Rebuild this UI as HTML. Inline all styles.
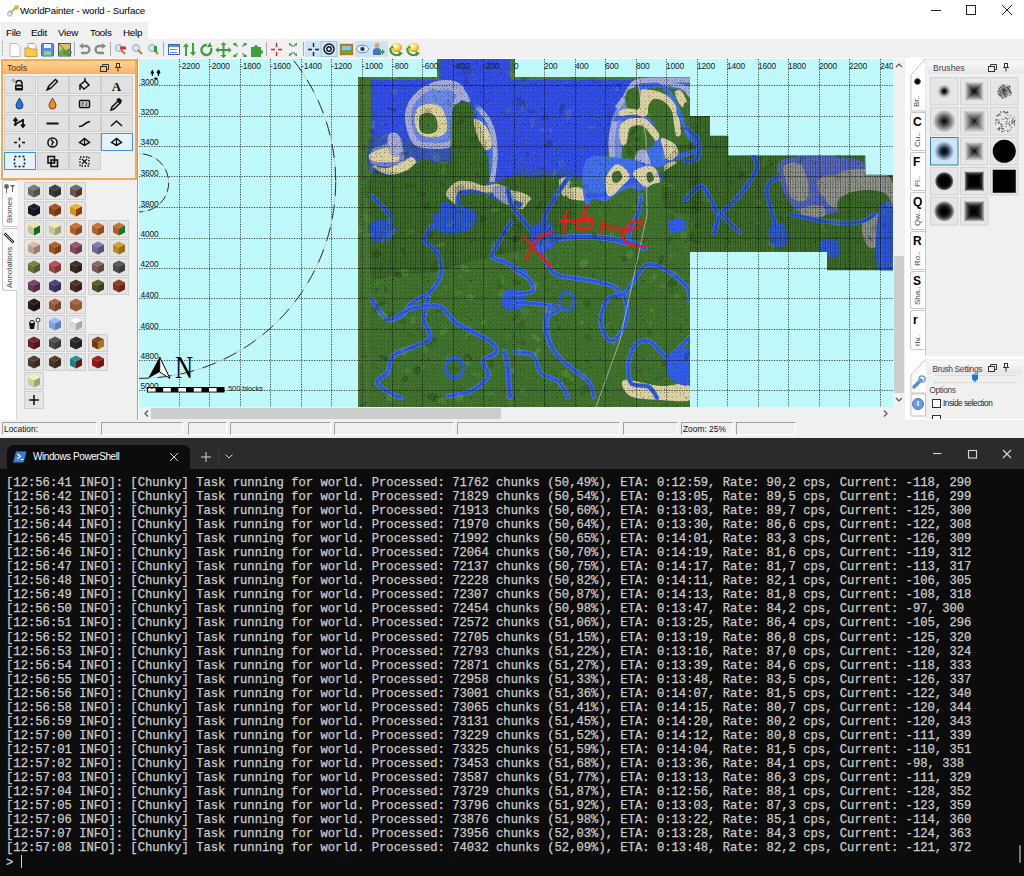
<!DOCTYPE html>
<html><head><meta charset="utf-8"><style>
*{margin:0;padding:0;box-sizing:border-box}
html,body{width:1024px;height:876px;overflow:hidden;background:#fff}
body{position:relative;font-family:"Liberation Sans",sans-serif;color:#000}
.a{position:absolute}
#tt{font-family:"Liberation Mono",monospace;font-size:12.2px;line-height:14.04px;color:#cccccc;white-space:pre;-webkit-text-stroke:0.25px #cccccc}
.ui{font-size:9px}
.rl{font-size:8.4px;color:#1a1a1a;white-space:nowrap;line-height:9px;letter-spacing:-0.15px}

</style></head><body>
<!-- title bar -->
<svg class="a" style="left:3px;top:2px" width="16" height="16" viewBox="0 0 16 16">
<ellipse cx="7" cy="11.5" rx="2.6" ry="3.2" transform="rotate(40 7 11.5)" fill="#b8b8b8"/>
<ellipse cx="6.5" cy="12" rx="1.2" ry="1.6" transform="rotate(40 6.5 12)" fill="#f4f4f4"/>
<line x1="9" y1="9" x2="13" y2="5.5" stroke="#b89a28" stroke-width="1.6"/>
<circle cx="13.5" cy="5.5" r="2.3" fill="#c8a830"/>
<circle cx="13.3" cy="5.7" r="0.9" fill="#e8d070"/>
</svg>
<div class="a" style="left:20px;top:5px;font-size:9.7px;white-space:nowrap;color:#000;letter-spacing:-0.15px">WorldPainter - world - Surface</div>
<svg class="a" style="left:920px;top:0" width="104" height="22" viewBox="0 0 104 22">
<line x1="11" y1="10.5" x2="21" y2="10.5" stroke="#222" stroke-width="1"/>
<rect x="46.5" y="5.5" width="9" height="9" fill="none" stroke="#222" stroke-width="1"/>
<line x1="82" y1="5" x2="92" y2="15" stroke="#222" stroke-width="1"/>
<line x1="92" y1="5" x2="82" y2="15" stroke="#222" stroke-width="1"/>
</svg>
<!-- menu bar -->
<div class="a" style="left:1px;top:22px;width:147px;height:17px;background:#f0f0f0"></div>
<div class="a ui" style="top:26.5px;left:6px;font-size:9.8px;letter-spacing:-0.25px">File</div>
<div class="a ui" style="top:26.5px;left:31px;font-size:9.8px;letter-spacing:-0.25px">Edit</div>
<div class="a ui" style="top:26.5px;left:58px;font-size:9.8px;letter-spacing:-0.25px">View</div>
<div class="a ui" style="top:26.5px;left:90px;font-size:9.8px;letter-spacing:-0.25px">Tools</div>
<div class="a ui" style="top:26.5px;left:123px;font-size:9.8px;letter-spacing:-0.25px">Help</div>
<!-- toolbar -->
<div class="a" style="left:0;top:39px;width:1024px;height:19px;background:#f0f0f0"></div>
<div class="a" style="left:2px;top:41px;width:1px;height:15px;border-left:1px dotted #999"></div>
<svg class="a" style="left:0;top:39px" width="430" height="19" viewBox="0 0 430 19">
<!-- new -->
<path d="M10 4.5h7l3 3v10h-10z" fill="#fff" stroke="#bbb"/>
<!-- open -->
<path d="M28 4.5h6l2 2v5h-8z" fill="#fff" stroke="#aaa"/>
<path d="M25 9h5l1 1h6v7.5h-12z" fill="#f8c850" stroke="#d09a30"/>
<!-- save -->
<rect x="41.5" y="4.5" width="12" height="12.5" rx="1" fill="#5a8ed8" stroke="#3a68b0"/>
<rect x="44" y="5" width="7" height="4" fill="#e8f0ff"/>
<rect x="44" y="12" width="7" height="4.5" fill="#8fd080"/>
<!-- export -->
<rect x="58.5" y="4.5" width="12" height="12.5" fill="#d8c070" stroke="#556"/>
<path d="M59 5l6 6" stroke="#e04040"/>
<path d="M59 13l4-4 3 3 4-3v8h-11z" fill="#60b050"/>
<path d="M64 12h4v-2l4 3.5-4 3.5v-2h-4z" fill="#5aa040" stroke="#3a7a28" stroke-width="0.6"/>
<line x1="74.5" y1="3" x2="74.5" y2="17" stroke="#aaa"/>
<!-- undo/redo -->
<path d="M82 7h4a3.5 3.5 0 0 1 0 7h-5" fill="none" stroke="#8a8a8a" stroke-width="2.4"/>
<path d="M79 7l4-3v6z" fill="#8a8a8a"/>
<path d="M103 7h-4a3.5 3.5 0 0 0 0 7h5" fill="none" stroke="#8a8a8a" stroke-width="2.4"/>
<path d="M106 7l-4-3v6z" fill="#8a8a8a"/>
<line x1="110.5" y1="3" x2="110.5" y2="17" stroke="#aaa"/>
<!-- zoom -->
<circle cx="119" cy="9" r="3.6" fill="#d0e4f8" stroke="#8ab0d8"/><path d="M121 11l4 4" stroke="#b08040" stroke-width="2"/><rect x="120" y="7.5" width="6" height="3" fill="#e03030"/>
<circle cx="136" cy="9" r="3.6" fill="#d0e4f8" stroke="#8ab0d8"/><path d="M138 11l4 4" stroke="#b08040" stroke-width="2"/>
<circle cx="152" cy="9" r="3.6" fill="#d0e4f8" stroke="#8ab0d8"/><path d="M154 11l4 4" stroke="#b08040" stroke-width="2"/><rect x="154" y="7" width="3" height="6" fill="#30a030"/>
<line x1="163.5" y1="3" x2="163.5" y2="17" stroke="#aaa"/>
<!-- dims -->
<rect x="168.5" y="5.5" width="11" height="10" fill="#fff" stroke="#3a68b0"/><rect x="169" y="6" width="10" height="2" fill="#5a8ed8"/><path d="M170 10.5h7M170 13.5h7" stroke="#5a8ed8"/>
<!-- arrows updown -->
<path d="M186 4l3 4h-2v9h-2v-9h-2z M193 17l3-4h-2v-9h-2v9h-2z" fill="#40a040"/>
<!-- rotate -->
<path d="M207 6a5 5 0 1 0 4 3" fill="none" stroke="#40a040" stroke-width="2.4"/><path d="M210 3l2 5-5 0z" fill="#40a040"/>
<!-- move -->
<path d="M223.5 3l3 3h-2v4h4v-2l3 3-3 3v-2h-4v4h2l-3 3-3-3h2v-4h-4v2l-3-3 3-3v2h4v-4h-2z" fill="#40a040"/>
<!-- scale -->
<path d="M233 4h4l-1 1 2 2-1 1-2-2-1 1zM247 4h-4l1 1-2 2 1 1 2-2 1 1zM233 18h4l-1-1 2-2-1-1-2 2-1-1zM247 18h-4l1-1-2-2 1-1 2 2 1-1z" fill="#40a040"/>
<!-- puzzle -->
<path d="M251 8h3a2 2 0 1 1 4 0h3v3a2 2 0 1 1 0 4v3h-10z" fill="#40a040"/>
<line x1="266.5" y1="3" x2="266.5" y2="17" stroke="#aaa"/>
<!-- crosshair red -->
<path d="M276.5 4v4M276.5 13v4M271 10.5h4M278 10.5h4" stroke="#e02020" stroke-width="1.4"/>
<!-- inward arrows -->
<path d="M287 4h3l1 1 2 2-1 1-2-2-1 1v-3zM299 4h-3l-1 1-2 2 1 1 2-2 1 1v-3zM287 17h3l1-1 2-2-1-1-2 2-1-1v3zM299 17h-3l-1-1-2-2 1-1 2 2 1-1v3z" fill="#40a040"/>
<line x1="303.5" y1="3" x2="303.5" y2="17" stroke="#aaa"/>
<!-- toggled group 1 -->
<rect x="305" y="2" width="33" height="16" fill="#cce4f7" />
<path d="M313.5 4v4M313.5 13v4M308 10.5h4M315 10.5h4" stroke="#222" stroke-width="1.4"/>
<rect x="321" y="2.5" width="16" height="15" fill="#cce4f7" stroke="#9cc8ee"/>
<circle cx="329" cy="10" r="5" fill="none" stroke="#111" stroke-width="1.4"/><circle cx="329" cy="10" r="2.2" fill="none" stroke="#111" stroke-width="1.4"/>
<!-- picture -->
<rect x="340.5" y="5.5" width="12" height="10" fill="#7aa040" stroke="#b07820" stroke-width="1.4"/><rect x="342" y="7" width="9" height="4" fill="#80c8f0"/>
<!-- toggled group 2 -->
<rect x="355" y="2" width="33" height="16" fill="#cce4f7"/>
<ellipse cx="362.5" cy="10" rx="6" ry="3.8" fill="#fff" stroke="#6a8ab0"/><circle cx="362.5" cy="10" r="2.4" fill="#3a6ab0"/><circle cx="362.5" cy="10" r="1" fill="#111"/>
<circle cx="377" cy="6.5" r="2.5" fill="#e0a060"/><path d="M373 16v-4a4 3 0 0 1 8 0v4z" fill="#4a70c0"/><path d="M379 12h3v-2l3 3-3 3v-2h-3z" fill="#40a040"/>
<!-- bubbles -->
<defs><radialGradient id="yb395.5" cx="0.4" cy="0.35" r="0.6"><stop offset="0" stop-color="#fffbe0"/><stop offset="0.6" stop-color="#f8d850"/><stop offset="1" stop-color="#e0a020"/></radialGradient></defs><ellipse cx="396.5" cy="8.5" rx="5.5" ry="4.6" fill="url(#yb395.5)"/><path d="M390.5 9 A6 6 0 0 0 400.5 14.5" fill="none" stroke="#3a9a30" stroke-width="2.2"/><path d="M398.5 12 L403.0 14 L399.0 17.5 Z" fill="#3a9a30"/><path d="M390.0 8.5 L392.5 6.5 L394.0 9.5 Z" fill="#3a9a30"/>
<defs><radialGradient id="yb412.5" cx="0.4" cy="0.35" r="0.6"><stop offset="0" stop-color="#fffbe0"/><stop offset="0.6" stop-color="#f8d850"/><stop offset="1" stop-color="#e0a020"/></radialGradient></defs><ellipse cx="413.5" cy="8.5" rx="5.5" ry="4.6" fill="url(#yb412.5)"/><path d="M407.5 9 A6 6 0 0 0 417.5 14.5" fill="none" stroke="#3a9a30" stroke-width="2.2"/><path d="M415.5 12 L420.0 14 L416.0 17.5 Z" fill="#3a9a30"/><path d="M407.0 8.5 L409.5 6.5 L411.0 9.5 Z" fill="#3a9a30"/>
</svg>

<div class="a" style="left:16px;top:180px;width:121px;height:240px;background:#f0f0f0;border-left:1px solid #d8d8d8"></div>
<svg class="a" style="left:0;top:0" width="140" height="420" viewBox="0 0 140 420">
<rect x="24.5" y="182.5" width="19" height="17" fill="#e4e4e4" stroke="#cfcfcf"/>
<polygon points="28,187.5 34,184.5 40,187.5 34,190.5" fill="#7b7b74"/><polygon points="28,187.5 34,190.5 34,197.5 28,194.5" fill="#686862"/><polygon points="34,190.5 40,187.5 40,194.5 34,197.5" fill="#52524e"/>
<rect x="45.5" y="182.5" width="19" height="17" fill="#e4e4e4" stroke="#cfcfcf"/>
<polygon points="49,187.5 55,184.5 61,187.5 55,190.5" fill="#434345"/><polygon points="49,187.5 55,190.5 55,197.5 49,194.5" fill="#39393a"/><polygon points="55,190.5 61,187.5 61,194.5 55,197.5" fill="#2d2d2e"/>
<rect x="66.5" y="182.5" width="19" height="17" fill="#e4e4e4" stroke="#cfcfcf"/>
<polygon points="70,187.5 76,184.5 82,187.5 76,190.5" fill="#76646b"/><polygon points="70,187.5 76,190.5 76,197.5 70,194.5" fill="#64555b"/><polygon points="76,190.5 82,187.5 82,194.5 76,197.5" fill="#4f3724"/>
<rect x="24.5" y="201.5" width="19" height="17" fill="#e4e4e4" stroke="#cfcfcf"/>
<polygon points="28,206.5 34,203.5 40,206.5 34,209.5" fill="#1f182c"/><polygon points="28,206.5 34,209.5 34,216.5 28,213.5" fill="#1a1426"/><polygon points="34,209.5 40,206.5 40,213.5 34,216.5" fill="#15101e"/>
<rect x="45.5" y="201.5" width="19" height="17" fill="#e4e4e4" stroke="#cfcfcf"/>
<polygon points="49,206.5 55,203.5 61,206.5 55,209.5" fill="#ac521a"/><polygon points="49,206.5 55,209.5 55,216.5 49,213.5" fill="#924616"/><polygon points="55,209.5 61,206.5 61,213.5 55,216.5" fill="#733712"/>
<rect x="66.5" y="201.5" width="19" height="17" fill="#e4e4e4" stroke="#cfcfcf"/>
<polygon points="70,206.5 76,203.5 82,206.5 76,209.5" fill="#f1b323"/><polygon points="70,206.5 76,209.5 76,216.5 70,213.5" fill="#cd981e"/><polygon points="76,209.5 82,206.5 82,213.5 76,216.5" fill="#903c0c"/>
<rect x="24.5" y="220.5" width="19" height="17" fill="#e4e4e4" stroke="#cfcfcf"/>
<polygon points="28,225.5 34,222.5 40,225.5 34,228.5" fill="#e8e0aa"/><polygon points="28,225.5 34,228.5 34,235.5 28,232.5" fill="#c5be90"/><polygon points="34,228.5 40,225.5 40,232.5 34,235.5" fill="#0c6c18"/>
<rect x="45.5" y="220.5" width="19" height="17" fill="#e4e4e4" stroke="#cfcfcf"/>
<polygon points="49,225.5 55,222.5 61,225.5 55,228.5" fill="#f1e8b3"/><polygon points="49,225.5 55,228.5 55,235.5 49,232.5" fill="#cdc598"/><polygon points="55,228.5 61,225.5 61,232.5 55,235.5" fill="#a29c78"/>
<rect x="66.5" y="220.5" width="19" height="17" fill="#e4e4e4" stroke="#cfcfcf"/>
<polygon points="70,225.5 76,222.5 82,225.5 76,228.5" fill="#ce7031"/><polygon points="70,225.5 76,228.5 76,235.5 70,232.5" fill="#ae5f29"/><polygon points="76,228.5 82,225.5 82,232.5 76,235.5" fill="#8a4b21"/>
<rect x="88.5" y="220.5" width="19" height="17" fill="#e4e4e4" stroke="#cfcfcf"/>
<polygon points="92,225.5 98,222.5 104,225.5 98,228.5" fill="#ce7631"/><polygon points="92,225.5 98,228.5 98,235.5 92,232.5" fill="#ae6429"/><polygon points="98,228.5 104,225.5 104,232.5 98,235.5" fill="#8a4f21"/>
<rect x="109.5" y="220.5" width="19" height="17" fill="#e4e4e4" stroke="#cfcfcf"/>
<polygon points="113,225.5 119,222.5 125,225.5 119,228.5" fill="#ce7031"/><polygon points="113,225.5 119,228.5 119,235.5 113,232.5" fill="#ae5f29"/><polygon points="119,228.5 125,225.5 125,232.5 119,235.5" fill="#0c7824"/>
<rect x="24.5" y="239.5" width="19" height="17" fill="#e4e4e4" stroke="#cfcfcf"/>
<polygon points="28,244.5 34,241.5 40,244.5 34,247.5" fill="#dbbcaa"/><polygon points="28,244.5 34,247.5 34,254.5 28,251.5" fill="#ba9f90"/><polygon points="34,247.5 40,244.5 40,251.5 34,254.5" fill="#937e72"/>
<rect x="45.5" y="239.5" width="19" height="17" fill="#e4e4e4" stroke="#cfcfcf"/>
<polygon points="49,244.5 55,241.5 61,244.5 55,247.5" fill="#b7622c"/><polygon points="49,244.5 55,247.5 55,254.5 49,251.5" fill="#9b5326"/><polygon points="55,247.5 61,244.5 61,251.5 55,254.5" fill="#7b421e"/>
<rect x="66.5" y="239.5" width="19" height="17" fill="#e4e4e4" stroke="#cfcfcf"/>
<polygon points="70,244.5 76,241.5 82,244.5 76,247.5" fill="#9c5574"/><polygon points="70,244.5 76,247.5 76,254.5 70,251.5" fill="#854862"/><polygon points="76,247.5 82,244.5 82,251.5 76,254.5" fill="#69394e"/>
<rect x="88.5" y="239.5" width="19" height="17" fill="#e4e4e4" stroke="#cfcfcf"/>
<polygon points="92,244.5 98,241.5 104,244.5 98,247.5" fill="#7d7dae"/><polygon points="92,244.5 98,247.5 98,254.5 92,251.5" fill="#6a6a94"/><polygon points="98,247.5 104,244.5 104,251.5 98,254.5" fill="#545475"/>
<rect x="109.5" y="239.5" width="19" height="17" fill="#e4e4e4" stroke="#cfcfcf"/>
<polygon points="113,244.5 119,241.5 125,244.5 119,247.5" fill="#d7a32f"/><polygon points="113,244.5 119,247.5 119,254.5 113,251.5" fill="#b68a27"/><polygon points="119,247.5 125,244.5 125,251.5 119,254.5" fill="#906d1f"/>
<rect x="24.5" y="258.5" width="19" height="17" fill="#e4e4e4" stroke="#cfcfcf"/>
<polygon points="28,263.5 34,260.5 40,263.5 34,266.5" fill="#768840"/><polygon points="28,263.5 34,266.5 34,273.5 28,270.5" fill="#647337"/><polygon points="34,266.5 40,263.5 40,270.5 34,273.5" fill="#4f5b2b"/>
<rect x="45.5" y="258.5" width="19" height="17" fill="#e4e4e4" stroke="#cfcfcf"/>
<polygon points="49,263.5 55,260.5 61,263.5 55,266.5" fill="#b75255"/><polygon points="49,263.5 55,266.5 55,273.5 49,270.5" fill="#9b4648"/><polygon points="55,266.5 61,263.5 61,270.5 55,273.5" fill="#7b3739"/>
<rect x="66.5" y="258.5" width="19" height="17" fill="#e4e4e4" stroke="#cfcfcf"/>
<polygon points="70,263.5 76,260.5 82,263.5 76,266.5" fill="#402f28"/><polygon points="70,263.5 76,266.5 76,273.5 70,270.5" fill="#372722"/><polygon points="76,266.5 82,263.5 82,270.5 76,273.5" fill="#2b1f1b"/>
<rect x="88.5" y="258.5" width="19" height="17" fill="#e4e4e4" stroke="#cfcfcf"/>
<polygon points="92,263.5 98,260.5 104,263.5 98,266.5" fill="#8a6b62"/><polygon points="92,263.5 98,266.5 98,273.5 92,270.5" fill="#755b53"/><polygon points="98,266.5 104,263.5 104,270.5 98,273.5" fill="#5d4842"/>
<rect x="109.5" y="258.5" width="19" height="17" fill="#e4e4e4" stroke="#cfcfcf"/>
<polygon points="113,263.5 119,260.5 125,263.5 119,266.5" fill="#55595e"/><polygon points="113,263.5 119,266.5 119,273.5 113,270.5" fill="#484c4f"/><polygon points="119,266.5 125,263.5 125,270.5 119,273.5" fill="#393c3f"/>
<rect x="24.5" y="277.5" width="19" height="17" fill="#e4e4e4" stroke="#cfcfcf"/>
<polygon points="28,282.5 34,279.5 40,282.5 34,285.5" fill="#764362"/><polygon points="28,282.5 34,285.5 34,292.5 28,289.5" fill="#643953"/><polygon points="34,285.5 40,282.5 40,289.5 34,292.5" fill="#4f2d42"/>
<rect x="45.5" y="277.5" width="19" height="17" fill="#e4e4e4" stroke="#cfcfcf"/>
<polygon points="49,282.5 55,279.5 61,282.5 55,285.5" fill="#504378"/><polygon points="49,282.5 55,285.5 55,292.5 49,289.5" fill="#443966"/><polygon points="55,285.5 61,282.5 61,289.5 55,292.5" fill="#362d51"/>
<rect x="66.5" y="277.5" width="19" height="17" fill="#e4e4e4" stroke="#cfcfcf"/>
<polygon points="70,282.5 76,279.5 82,282.5 76,285.5" fill="#523528"/><polygon points="70,282.5 76,285.5 76,292.5 70,289.5" fill="#462d22"/><polygon points="76,285.5 82,282.5 82,289.5 76,292.5" fill="#37241b"/>
<rect x="88.5" y="277.5" width="19" height="17" fill="#e4e4e4" stroke="#cfcfcf"/>
<polygon points="92,282.5 98,279.5 104,282.5 98,285.5" fill="#555e2c"/><polygon points="92,282.5 98,285.5 98,292.5 92,289.5" fill="#484f26"/><polygon points="98,285.5 104,282.5 104,289.5 98,292.5" fill="#393f1e"/>
<rect x="109.5" y="277.5" width="19" height="17" fill="#e4e4e4" stroke="#cfcfcf"/>
<polygon points="113,282.5 119,279.5 125,282.5 119,285.5" fill="#9c3a28"/><polygon points="113,282.5 119,285.5 119,292.5 113,289.5" fill="#853122"/><polygon points="119,285.5 125,282.5 125,289.5 119,292.5" fill="#69271b"/>
<rect x="24.5" y="296.5" width="19" height="17" fill="#e4e4e4" stroke="#cfcfcf"/>
<polygon points="28,301.5 34,298.5 40,301.5 34,304.5" fill="#2f1d18"/><polygon points="28,301.5 34,304.5 34,311.5 28,308.5" fill="#271814"/><polygon points="34,304.5 40,301.5 40,308.5 34,311.5" fill="#1f1310"/>
<rect x="45.5" y="296.5" width="19" height="17" fill="#e4e4e4" stroke="#cfcfcf"/>
<polygon points="49,301.5 55,298.5 61,301.5 55,304.5" fill="#ac6447"/><polygon points="49,301.5 55,304.5 55,311.5 49,308.5" fill="#92553c"/><polygon points="55,304.5 61,301.5 61,308.5 55,311.5" fill="#734330"/>
<rect x="66.5" y="296.5" width="19" height="17" fill="#e4e4e4" stroke="#cfcfcf"/>
<polygon points="70,301.5 76,298.5 82,301.5 76,304.5" fill="#ac6447"/><polygon points="70,301.5 76,304.5 76,311.5 70,308.5" fill="#92553c"/><polygon points="76,304.5 82,301.5 82,308.5 76,311.5" fill="#905a2a"/>
<rect x="24.5" y="315.5" width="19" height="17" fill="#e4e4e4" stroke="#cfcfcf"/>
<path d="M29 323h6l-1 6h-4z" fill="#111"/><path d="M29.5 323a2.5 2.5 0 0 1 5 0" fill="none" stroke="#111"/><circle cx="38" cy="320" r="2" fill="#fff" stroke="#333"/><rect x="37.3" y="322" width="1.4" height="8" fill="#888"/>
<rect x="45.5" y="315.5" width="19" height="17" fill="#e4e4e4" stroke="#cfcfcf"/>
<polygon points="49,320.5 55,317.5 61,320.5 55,323.5" fill="#98bcff"/><polygon points="49,320.5 55,323.5 55,330.5 49,327.5" fill="#819fe7"/><polygon points="55,323.5 61,320.5 61,327.5 55,330.5" fill="#667eb7"/>
<rect x="66.5" y="315.5" width="19" height="17" fill="#e4e4e4" stroke="#cfcfcf"/>
<polygon points="70,320.5 76,317.5 82,320.5 76,323.5" fill="#f6ffff"/><polygon points="70,320.5 76,323.5 76,330.5 70,327.5" fill="#d1d8d8"/><polygon points="76,323.5 82,320.5 82,327.5 76,330.5" fill="#a5abab"/>
<rect x="24.5" y="334.5" width="19" height="17" fill="#e4e4e4" stroke="#cfcfcf"/>
<polygon points="28,339.5 34,336.5 40,339.5 34,342.5" fill="#782628"/><polygon points="28,339.5 34,342.5 34,349.5 28,346.5" fill="#662022"/><polygon points="34,342.5 40,339.5 40,346.5 34,349.5" fill="#51191b"/>
<rect x="45.5" y="334.5" width="19" height="17" fill="#e4e4e4" stroke="#cfcfcf"/>
<polygon points="49,339.5 55,336.5 61,339.5 55,342.5" fill="#55555b"/><polygon points="49,339.5 55,342.5 55,349.5 49,346.5" fill="#48484d"/><polygon points="55,342.5 61,339.5 61,346.5 55,349.5" fill="#39393d"/>
<rect x="66.5" y="334.5" width="19" height="17" fill="#e4e4e4" stroke="#cfcfcf"/>
<polygon points="70,339.5 76,336.5 82,339.5 76,342.5" fill="#312f35"/><polygon points="70,339.5 76,342.5 76,349.5 70,346.5" fill="#29272d"/><polygon points="76,342.5 82,339.5 82,346.5 76,349.5" fill="#211f24"/>
<rect x="88.5" y="334.5" width="19" height="17" fill="#e4e4e4" stroke="#cfcfcf"/>
<polygon points="92,339.5 98,336.5 104,339.5 98,342.5" fill="#884023"/><polygon points="92,339.5 98,342.5 98,349.5 92,346.5" fill="#73371e"/><polygon points="98,342.5 104,339.5 104,346.5 98,349.5" fill="#a87818"/>
<rect x="24.5" y="353.5" width="19" height="17" fill="#e4e4e4" stroke="#cfcfcf"/>
<polygon points="28,358.5 34,355.5 40,358.5 34,361.5" fill="#554031"/><polygon points="28,358.5 34,361.5 34,368.5 28,365.5" fill="#483729"/><polygon points="34,361.5 40,358.5 40,365.5 34,368.5" fill="#392b21"/>
<rect x="45.5" y="353.5" width="19" height="17" fill="#e4e4e4" stroke="#cfcfcf"/>
<polygon points="49,358.5 55,355.5 61,358.5 55,361.5" fill="#553e2c"/><polygon points="49,358.5 55,361.5 55,368.5 49,365.5" fill="#483526"/><polygon points="55,361.5 61,358.5 61,365.5 55,368.5" fill="#392a1e"/>
<rect x="66.5" y="353.5" width="19" height="17" fill="#e4e4e4" stroke="#cfcfcf"/>
<polygon points="70,358.5 76,355.5 82,358.5 76,361.5" fill="#1f9a8f"/><polygon points="70,358.5 76,361.5 76,368.5 70,365.5" fill="#1a8379"/><polygon points="76,361.5 82,358.5 82,365.5 76,368.5" fill="#5d1818"/>
<rect x="88.5" y="353.5" width="19" height="17" fill="#e4e4e4" stroke="#cfcfcf"/>
<polygon points="92,358.5 98,355.5 104,358.5 98,361.5" fill="#ac1f1f"/><polygon points="92,358.5 98,361.5 98,368.5 92,365.5" fill="#921a1a"/><polygon points="98,361.5 104,358.5 104,365.5 98,368.5" fill="#731515"/>
<rect x="24.5" y="372.5" width="19" height="17" fill="#e4e4e4" stroke="#cfcfcf"/>
<polygon points="28,377.5 34,374.5 40,377.5 34,380.5" fill="#f1f1b3"/><polygon points="28,377.5 34,380.5 34,387.5 28,384.5" fill="#cdcd98"/><polygon points="34,380.5 40,377.5 40,384.5 34,387.5" fill="#a2a278"/>
<rect x="24.5" y="391.5" width="19" height="17" fill="#e4e4e4" stroke="#cfcfcf"/>
<path d="M34 395v10M29 400h10" stroke="#111" stroke-width="1.6"/>
</svg>
<div class="a" style="left:2px;top:180px;width:15px;height:47px;background:#fff;border:1px solid #c8c8c8;border-right:none;border-radius:3px 0 0 3px"></div>
<div class="a" style="left:2px;top:228px;width:15px;height:63px;background:#fafafa;border:1px solid #c8c8c8;border-right:none;border-radius:3px 0 0 3px"></div>
<svg class="a" style="left:3px;top:183px" width="13" height="12" viewBox="0 0 13 12"><circle cx="3.5" cy="3.5" r="2.4" fill="#666"/><line x1="3.5" y1="4" x2="3.5" y2="10" stroke="#666"/><path d="M7 2h5l-2.5 3z" fill="#666"/><line x1="9.5" y1="4" x2="9.5" y2="9" stroke="#666"/></svg>
<div class="a" style="left:4.5px;top:223px;transform:rotate(-90deg);transform-origin:0 0;font-size:7.8px;white-space:nowrap;color:#3a3a4a">Biomes</div>
<svg class="a" style="left:3px;top:232px" width="12" height="12" viewBox="0 0 12 12"><path d="M1.5 1.5l9 9" stroke="#222" stroke-width="2.6"/><path d="M2 2l8 8" stroke="#ddd" stroke-width="1"/></svg>
<div class="a" style="left:4.5px;top:288px;transform:rotate(-90deg);transform-origin:0 0;font-size:7.8px;white-space:nowrap;color:#3a3a4a">Annotations</div>

<div class="a" style="left:1px;top:59px;width:136px;height:121px;background:#f0f0f0;border:2px solid #f8a850"></div>
<div class="a" style="left:3px;top:61px;width:132px;height:13px;background:linear-gradient(#fdd49a,#f9b262)"></div>
<div class="a" style="left:7px;top:63px;font-size:8.6px;color:#5a2c10;white-space:nowrap">Tools</div>
<svg class="a" style="left:98px;top:62px" width="30" height="11" viewBox="0 0 30 11"><rect x="2.5" y="4.5" width="6" height="5" fill="none" stroke="#333"/><path d="M4.5 4.5v-2h6v5h-2" fill="none" stroke="#333"/><path d="M18 1.5h4M18.5 1.5v4h3v-4M17 5.5h6M20 5.5v4" stroke="#333" fill="none"/></svg>

<svg class="a" style="left:0;top:0" width="140" height="180" viewBox="0 0 140 180">
<rect x="4.5" y="76.5" width="31" height="17" fill="#e1e1e1" stroke="#cdcdcd"/>
<g transform="translate(4,76)"><path d="M12 7.5a3 3 0 0 1 6 0v1" fill="none" stroke="#111" stroke-width="1.6"/><rect x="11" y="8.5" width="8" height="6" rx="1" fill="#111"/><rect x="12.5" y="10.5" width="5" height="1.4" fill="#eee"/><path d="M8 3l3 3M11 3l-3 3M9.5 2v5M7 4.5h5" stroke="#999" stroke-width="0.6"/></g>
<rect x="37.5" y="76.5" width="31" height="17" fill="#e1e1e1" stroke="#cdcdcd"/>
<g transform="translate(37,76)"><path d="M10 14l1.5-3.5 7-7 2 2-7 7z" fill="none" stroke="#111" stroke-width="1.4"/><path d="M10 14l1.5-3.5 2 2z" fill="#111"/></g>
<rect x="69.5" y="76.5" width="31" height="17" fill="#e1e1e1" stroke="#cdcdcd"/>
<g transform="translate(69,76)"><path d="M11 9l5-4 4 4-5 4z" fill="none" stroke="#111" stroke-width="1.5"/><path d="M16 5v-3" stroke="#111" stroke-width="1.4"/><path d="M11 9v5" stroke="#111" stroke-width="1.5"/></g>
<rect x="101.5" y="76.5" width="31" height="17" fill="#e1e1e1" stroke="#cdcdcd"/>
<g transform="translate(101,76)"><text x="15.5" y="14.5" font-family="Liberation Serif" font-weight="bold" font-size="13" text-anchor="middle" fill="#111">A</text></g>
<rect x="4.5" y="95.5" width="31" height="17" fill="#e1e1e1" stroke="#cdcdcd"/>
<g transform="translate(4,95)"><path d="M15.5 3c-1.5 3-3.5 5-3.5 7.5a3.5 3.5 0 0 0 7 0c0-2.5-2-4.5-3.5-7.5z" fill="#1a7ae8" stroke="#113" stroke-width="0.7"/></g>
<rect x="37.5" y="95.5" width="31" height="17" fill="#e1e1e1" stroke="#cdcdcd"/>
<g transform="translate(37,95)"><path d="M15.5 3c-1.5 3-3.5 5-3.5 7.5a3.5 3.5 0 0 0 7 0c0-2.5-2-4.5-3.5-7.5z" fill="#f08a20" stroke="#311" stroke-width="0.7"/></g>
<rect x="69.5" y="95.5" width="31" height="17" fill="#e1e1e1" stroke="#cdcdcd"/>
<g transform="translate(69,95)"><rect x="10.5" y="5.5" width="10" height="7" rx="1" fill="none" stroke="#111" stroke-width="1.5"/><path d="M12.5 8h2.5M16 10h2.5M12.5 10h2M16.5 8h2" stroke="#111"/></g>
<rect x="101.5" y="95.5" width="31" height="17" fill="#e1e1e1" stroke="#cdcdcd"/>
<g transform="translate(101,95)"><path d="M10 15l1-3 6-6 2 2-6 6z" fill="none" stroke="#111" stroke-width="1.5"/><path d="M16 4l4 4M17.5 3.5l3 3" stroke="#111" stroke-width="2"/></g>
<rect x="4.5" y="114.5" width="31" height="17" fill="#e1e1e1" stroke="#cdcdcd"/>
<g transform="translate(4,114)"><path d="M11.5 5v7M9.5 7l2-2.5 2 2.5M19 5v8M17 10.5l2 2.5 2-2.5" stroke="#111" stroke-width="1.8" fill="none"/><path d="M10 11l9-5" stroke="#111" stroke-width="1.5"/></g>
<rect x="37.5" y="114.5" width="31" height="17" fill="#e1e1e1" stroke="#cdcdcd"/>
<g transform="translate(37,114)"><path d="M9.5 9.5h12" stroke="#111" stroke-width="2"/></g>
<rect x="69.5" y="114.5" width="31" height="17" fill="#e1e1e1" stroke="#cdcdcd"/>
<g transform="translate(69,114)"><path d="M10 12.5l3-0.5 5-3.5 3-1" stroke="#111" stroke-width="1.6" fill="none"/></g>
<rect x="101.5" y="114.5" width="31" height="17" fill="#e1e1e1" stroke="#cdcdcd"/>
<g transform="translate(101,114)"><path d="M10 12l5.5-5 5.5 5" stroke="#111" stroke-width="1.5" fill="none"/></g>
<rect x="4.5" y="133.5" width="31" height="17" fill="#e1e1e1" stroke="#cdcdcd"/>
<g transform="translate(4,133)"><path d="M15.5 4.5v3M15.5 11.5v3M10 9.5h3M18 9.5h3" stroke="#111" stroke-width="1.5"/></g>
<rect x="37.5" y="133.5" width="31" height="17" fill="#e1e1e1" stroke="#cdcdcd"/>
<g transform="translate(37,133)"><circle cx="15.5" cy="9.5" r="4.6" fill="none" stroke="#111" stroke-width="1.5"/><path d="M14 6.5l2.5 3-1.5 1M15 10.5v2" stroke="#111" stroke-width="1.4" fill="none"/></g>
<rect x="69.5" y="133.5" width="31" height="17" fill="#e1e1e1" stroke="#cdcdcd"/>
<g transform="translate(69,133)"><path d="M10.5 9.5l5-4 5 4-5 3z" fill="none" stroke="#111" stroke-width="1.5"/><path d="M15.5 5v8" stroke="#111" stroke-width="1.3"/></g>
<rect x="101.5" y="133.5" width="31" height="17" fill="#e5f1fb" stroke="#3c94e0"/>
<g transform="translate(101,133)"><path d="M10.5 9.5l5-4 5 4-5 3z" fill="none" stroke="#111" stroke-width="1.5"/><path d="M15.5 5v8" stroke="#111" stroke-width="1.3"/></g>
<rect x="4.5" y="152.5" width="31" height="17" fill="#e5f1fb" stroke="#3c94e0"/>
<g transform="translate(4,152)"><rect x="10.5" y="4.5" width="10" height="10" fill="none" stroke="#111" stroke-width="1.5" stroke-dasharray="2 2"/></g>
<rect x="37.5" y="152.5" width="31" height="17" fill="#e1e1e1" stroke="#cdcdcd"/>
<g transform="translate(37,152)"><rect x="11" y="4.5" width="6.5" height="6.5" fill="none" stroke="#111" stroke-width="1.6"/><rect x="14" y="8" width="6.5" height="6.5" fill="none" stroke="#111" stroke-width="1.6"/></g>
<rect x="69.5" y="152.5" width="31" height="17" fill="#e1e1e1" stroke="#cdcdcd"/>
<g transform="translate(69,152)"><rect x="11" y="5" width="9" height="9" fill="none" stroke="#111" stroke-width="1.4" stroke-dasharray="1.5 1.5"/><path d="M13 7l5 5M18 7l-5 5" stroke="#111" stroke-width="1.2"/></g>
</svg>

<div class="a" style="left:137px;top:58px;width:1px;height:362px;background:#a0a0a0"></div>
<div class="a" style="left:138px;top:58px;width:1px;height:362px;background:#fff"></div>
<div class="a" style="left:139px;top:59px;width:754px;height:348px;background:#bff9fb;overflow:hidden">
<svg class="a" style="left:0;top:0" width="754" height="348" viewBox="139 59 754 348">
<defs><clipPath id="tc"><path d="M358 77 L437 77 L437 59 L515 59 L515 77 L690 77 L690 116 L710 116 L710 135.5 L728.5 135.5 L728.5 155.2 L865.5 155.2 L865.5 174.7 L893 174.7 L893 270.5 L827 270.5 L827 252 L690 252 L690 407 L358 407Z"/></clipPath><pattern id="spO" x="0" y="0" width="41" height="37" patternUnits="userSpaceOnUse"><rect x="35" y="29" width="1" height="1" fill="#101850" fill-opacity="0.3"/><rect x="32" y="12" width="1" height="1" fill="#101850" fill-opacity="0.3"/><rect x="32" y="30" width="1" height="1" fill="#000" fill-opacity="0.2"/><rect x="6" y="28" width="1" height="1" fill="#000" fill-opacity="0.2"/><rect x="9" y="5" width="1" height="1" fill="#6aa0f0" fill-opacity="0.35"/><rect x="38" y="25" width="1" height="1" fill="#000" fill-opacity="0.3"/><rect x="39" y="10" width="1" height="1" fill="#101850" fill-opacity="0.3"/><rect x="33" y="4" width="1" height="1" fill="#000" fill-opacity="0.3"/><rect x="2" y="12" width="1" height="1" fill="#000" fill-opacity="0.3"/><rect x="38" y="1" width="1" height="1" fill="#000" fill-opacity="0.2"/><rect x="20" y="28" width="1" height="1" fill="#101850" fill-opacity="0.3"/><rect x="33" y="14" width="1" height="1" fill="#000" fill-opacity="0.2"/><rect x="31" y="0" width="1" height="1" fill="#6aa0f0" fill-opacity="0.35"/><rect x="29" y="17" width="1" height="1" fill="#000" fill-opacity="0.3"/><rect x="35" y="5" width="1" height="1" fill="#101850" fill-opacity="0.3"/><rect x="20" y="14" width="1" height="1" fill="#6aa0f0" fill-opacity="0.35"/><rect x="1" y="4" width="1" height="1" fill="#6aa0f0" fill-opacity="0.35"/><rect x="25" y="6" width="1" height="1" fill="#000" fill-opacity="0.3"/><rect x="24" y="4" width="1" height="1" fill="#6aa0f0" fill-opacity="0.35"/><rect x="0" y="13" width="1" height="1" fill="#000" fill-opacity="0.3"/><rect x="3" y="30" width="1" height="1" fill="#000" fill-opacity="0.2"/><rect x="25" y="26" width="1" height="1" fill="#101850" fill-opacity="0.3"/><rect x="36" y="12" width="1" height="1" fill="#000" fill-opacity="0.3"/><rect x="21" y="5" width="1" height="1" fill="#6aa0f0" fill-opacity="0.35"/><rect x="21" y="0" width="1" height="1" fill="#6aa0f0" fill-opacity="0.35"/><rect x="7" y="8" width="1" height="1" fill="#101850" fill-opacity="0.3"/><rect x="6" y="0" width="1" height="1" fill="#000" fill-opacity="0.2"/><rect x="29" y="31" width="1" height="1" fill="#000" fill-opacity="0.3"/><rect x="35" y="12" width="1" height="1" fill="#000" fill-opacity="0.2"/><rect x="32" y="12" width="1" height="1" fill="#101850" fill-opacity="0.3"/><rect x="26" y="24" width="1" height="1" fill="#000" fill-opacity="0.2"/><rect x="25" y="26" width="1" height="1" fill="#000" fill-opacity="0.3"/><rect x="0" y="17" width="1" height="1" fill="#000" fill-opacity="0.2"/><rect x="1" y="13" width="1" height="1" fill="#6aa0f0" fill-opacity="0.35"/><rect x="25" y="36" width="1" height="1" fill="#000" fill-opacity="0.2"/><rect x="2" y="9" width="1" height="1" fill="#000" fill-opacity="0.3"/><rect x="28" y="16" width="1" height="1" fill="#000" fill-opacity="0.2"/><rect x="39" y="21" width="1" height="1" fill="#000" fill-opacity="0.3"/><rect x="24" y="4" width="1" height="1" fill="#6aa0f0" fill-opacity="0.35"/><rect x="5" y="13" width="1" height="1" fill="#000" fill-opacity="0.3"/><rect x="0" y="23" width="1" height="1" fill="#000" fill-opacity="0.2"/><rect x="39" y="29" width="1" height="1" fill="#6aa0f0" fill-opacity="0.35"/><rect x="37" y="30" width="1" height="1" fill="#000" fill-opacity="0.2"/><rect x="24" y="11" width="1" height="1" fill="#000" fill-opacity="0.2"/><rect x="19" y="14" width="1" height="1" fill="#000" fill-opacity="0.2"/></pattern><pattern id="spG" x="0" y="0" width="43" height="39" patternUnits="userSpaceOnUse"><rect x="15" y="12" width="1" height="1" fill="#7ab060" fill-opacity="0.3"/><rect x="40" y="35" width="1" height="1" fill="#000" fill-opacity="0.2"/><rect x="24" y="30" width="1" height="1" fill="#000" fill-opacity="0.2"/><rect x="5" y="26" width="1" height="1" fill="#7ab060" fill-opacity="0.3"/><rect x="6" y="6" width="1" height="1" fill="#000" fill-opacity="0.3"/><rect x="32" y="16" width="1" height="1" fill="#000" fill-opacity="0.3"/><rect x="25" y="16" width="1" height="1" fill="#000" fill-opacity="0.2"/><rect x="38" y="31" width="1" height="1" fill="#244818" fill-opacity="0.4"/><rect x="33" y="11" width="1" height="1" fill="#5ea848" fill-opacity="0.4"/><rect x="8" y="14" width="1" height="1" fill="#000" fill-opacity="0.3"/><rect x="35" y="4" width="1" height="1" fill="#244818" fill-opacity="0.4"/><rect x="13" y="13" width="1" height="1" fill="#5ea848" fill-opacity="0.4"/><rect x="4" y="17" width="1" height="1" fill="#000" fill-opacity="0.3"/><rect x="28" y="15" width="1" height="1" fill="#244818" fill-opacity="0.4"/><rect x="2" y="11" width="1" height="1" fill="#000" fill-opacity="0.3"/><rect x="23" y="33" width="1" height="1" fill="#5ea848" fill-opacity="0.4"/><rect x="8" y="5" width="1" height="1" fill="#7ab060" fill-opacity="0.3"/><rect x="8" y="28" width="1" height="1" fill="#5ea848" fill-opacity="0.4"/><rect x="42" y="33" width="1" height="1" fill="#5ea848" fill-opacity="0.4"/><rect x="8" y="37" width="1" height="1" fill="#7ab060" fill-opacity="0.3"/><rect x="1" y="30" width="1" height="1" fill="#000" fill-opacity="0.3"/><rect x="19" y="2" width="1" height="1" fill="#5ea848" fill-opacity="0.4"/><rect x="38" y="4" width="1" height="1" fill="#000" fill-opacity="0.3"/><rect x="4" y="19" width="1" height="1" fill="#244818" fill-opacity="0.4"/><rect x="8" y="4" width="1" height="1" fill="#5ea848" fill-opacity="0.4"/><rect x="28" y="34" width="1" height="1" fill="#000" fill-opacity="0.3"/><rect x="2" y="8" width="1" height="1" fill="#5ea848" fill-opacity="0.4"/><rect x="22" y="5" width="1" height="1" fill="#5ea848" fill-opacity="0.4"/><rect x="4" y="26" width="1" height="1" fill="#244818" fill-opacity="0.4"/><rect x="31" y="36" width="1" height="1" fill="#000" fill-opacity="0.3"/><rect x="39" y="24" width="1" height="1" fill="#000" fill-opacity="0.3"/><rect x="37" y="0" width="1" height="1" fill="#244818" fill-opacity="0.4"/><rect x="4" y="5" width="1" height="1" fill="#7ab060" fill-opacity="0.3"/><rect x="40" y="7" width="1" height="1" fill="#000" fill-opacity="0.3"/><rect x="26" y="21" width="1" height="1" fill="#5ea848" fill-opacity="0.4"/><rect x="37" y="29" width="1" height="1" fill="#244818" fill-opacity="0.4"/><rect x="29" y="34" width="1" height="1" fill="#244818" fill-opacity="0.4"/><rect x="33" y="32" width="1" height="1" fill="#000" fill-opacity="0.3"/><rect x="19" y="38" width="1" height="1" fill="#000" fill-opacity="0.3"/><rect x="30" y="1" width="1" height="1" fill="#000" fill-opacity="0.3"/><rect x="7" y="31" width="1" height="1" fill="#000" fill-opacity="0.2"/><rect x="42" y="31" width="1" height="1" fill="#7ab060" fill-opacity="0.3"/><rect x="0" y="23" width="1" height="1" fill="#5ea848" fill-opacity="0.4"/><rect x="9" y="12" width="1" height="1" fill="#5ea848" fill-opacity="0.4"/><rect x="10" y="21" width="1" height="1" fill="#7ab060" fill-opacity="0.3"/><rect x="31" y="15" width="1" height="1" fill="#244818" fill-opacity="0.4"/><rect x="25" y="16" width="1" height="1" fill="#5ea848" fill-opacity="0.4"/><rect x="40" y="27" width="1" height="1" fill="#000" fill-opacity="0.2"/><rect x="13" y="24" width="1" height="1" fill="#000" fill-opacity="0.2"/><rect x="37" y="20" width="1" height="1" fill="#000" fill-opacity="0.2"/><rect x="8" y="8" width="1" height="1" fill="#000" fill-opacity="0.2"/><rect x="22" y="2" width="1" height="1" fill="#244818" fill-opacity="0.4"/><rect x="17" y="10" width="1" height="1" fill="#000" fill-opacity="0.3"/><rect x="28" y="30" width="1" height="1" fill="#000" fill-opacity="0.3"/><rect x="13" y="26" width="1" height="1" fill="#5ea848" fill-opacity="0.4"/><rect x="40" y="33" width="1" height="1" fill="#244818" fill-opacity="0.4"/><rect x="20" y="28" width="1" height="1" fill="#244818" fill-opacity="0.4"/><rect x="4" y="2" width="1" height="1" fill="#5ea848" fill-opacity="0.4"/><rect x="38" y="2" width="1" height="1" fill="#5ea848" fill-opacity="0.4"/><rect x="36" y="22" width="1" height="1" fill="#5ea848" fill-opacity="0.4"/><rect x="41" y="36" width="1" height="1" fill="#5ea848" fill-opacity="0.4"/><rect x="41" y="8" width="1" height="1" fill="#000" fill-opacity="0.3"/><rect x="29" y="12" width="1" height="1" fill="#244818" fill-opacity="0.4"/><rect x="17" y="15" width="1" height="1" fill="#000" fill-opacity="0.3"/><rect x="3" y="7" width="1" height="1" fill="#000" fill-opacity="0.2"/><rect x="6" y="34" width="1" height="1" fill="#244818" fill-opacity="0.4"/><rect x="4" y="12" width="1" height="1" fill="#5ea848" fill-opacity="0.4"/><rect x="30" y="16" width="1" height="1" fill="#000" fill-opacity="0.2"/><rect x="0" y="30" width="1" height="1" fill="#000" fill-opacity="0.2"/><rect x="2" y="11" width="1" height="1" fill="#7ab060" fill-opacity="0.3"/><rect x="17" y="22" width="1" height="1" fill="#000" fill-opacity="0.2"/><rect x="33" y="32" width="1" height="1" fill="#7ab060" fill-opacity="0.3"/><rect x="10" y="25" width="1" height="1" fill="#7ab060" fill-opacity="0.3"/><rect x="5" y="26" width="1" height="1" fill="#000" fill-opacity="0.2"/><rect x="8" y="28" width="1" height="1" fill="#244818" fill-opacity="0.4"/><rect x="12" y="0" width="1" height="1" fill="#244818" fill-opacity="0.4"/><rect x="35" y="36" width="1" height="1" fill="#244818" fill-opacity="0.4"/><rect x="21" y="29" width="1" height="1" fill="#7ab060" fill-opacity="0.3"/><rect x="41" y="13" width="1" height="1" fill="#5ea848" fill-opacity="0.4"/><rect x="41" y="7" width="1" height="1" fill="#000" fill-opacity="0.3"/></pattern><pattern id="dots" x="0" y="0" width="4" height="4" patternUnits="userSpaceOnUse"><rect x="0" y="0" width="1" height="1" fill="#000" fill-opacity="0.22"/></pattern><pattern id="strp" x="0" y="0" width="5" height="5" patternUnits="userSpaceOnUse"><rect x="0" y="0" width="1" height="5" fill="#0a1a05" fill-opacity="0.38"/><rect x="2.5" y="0" width="1" height="5" fill="#0a1a05" fill-opacity="0.30"/><rect x="0" y="2" width="5" height="1" fill="#0a1a05" fill-opacity="0.12"/></pattern></defs>
<g clip-path="url(#tc)">
<path d="M358 77 L437 77 L437 59 L515 59 L515 77 L690 77 L690 116 L710 116 L710 135.5 L728.5 135.5 L728.5 155.2 L865.5 155.2 L865.5 174.7 L893 174.7 L893 270.5 L827 270.5 L827 252 L690 252 L690 407 L358 407Z" fill="#3e7129"/>
<rect x="358" y="77" width="13" height="330" fill="#4b7c33"/>
<rect x="358" y="77" width="332" height="3" fill="#4b7c33"/>
<path d="M371 80 L437 80 L437 59 L515 59 L515 80 L690 80 L690 92 L640 90 L622 100 L614 120 L612 150 L604 170 L600 180 L575 178 L560 176 L530 174 L510 177 L496 182 L484 184 L470 175 L456 165 L440 163 L420 160 L410 166 L395 172 L371 172Z" fill="#2f4bea"/>
<rect x="437" y="59" width="2" height="21" fill="#4b7c33"/>
<rect x="510.5" y="59" width="4.5" height="21" fill="#4b7c33"/>
<path d="M371.0 138.0 C374.5 132.3 385.5 135.5 392.0 136.0 C398.5 136.5 402.0 140.2 410.0 141.0 C418.0 141.8 432.3 140.8 440.0 141.0 C447.7 141.2 453.3 138.5 456.0 142.0 C458.7 145.5 458.7 158.3 456.0 162.0 C453.3 165.7 446.0 164.0 440.0 164.0 C434.0 164.0 426.7 161.0 420.0 162.0 C413.3 163.0 408.2 168.7 400.0 170.0 C391.8 171.3 375.8 175.3 371.0 170.0 C366.2 164.7 367.5 143.7 371.0 138.0Z" fill="#3654b4"/>
<path d="M513.0 171.0 C514.7 169.5 531.3 169.2 540.0 169.0 C548.7 168.8 558.3 168.8 565.0 170.0 C571.7 171.2 580.8 174.3 580.0 176.0 C579.2 177.7 568.3 179.7 560.0 180.0 C551.7 180.3 537.8 179.5 530.0 178.0 C522.2 176.5 511.3 172.5 513.0 171.0Z" fill="#3654b4"/>
<path d="M411.0 104.0 C413.0 100.2 416.5 96.0 420.0 93.0 C423.5 90.0 427.7 87.7 432.0 86.0 C436.3 84.3 441.7 83.0 446.0 83.0 C450.3 83.0 455.3 84.2 458.0 86.0 C460.7 87.8 462.3 91.2 462.0 94.0 C461.7 96.8 457.0 98.7 456.0 103.0 C455.0 107.3 456.0 114.5 456.0 120.0 C456.0 125.5 457.0 132.0 456.0 136.0 C455.0 140.0 453.7 142.3 450.0 144.0 C446.3 145.7 439.5 146.2 434.0 146.0 C428.5 145.8 421.0 145.7 417.0 143.0 C413.0 140.3 411.5 134.5 410.0 130.0 C408.5 125.5 407.8 120.3 408.0 116.0 C408.2 111.7 409.0 107.8 411.0 104.0Z" fill="#3e6ef0"/>
<path d="M411.0 104.0 C413.0 100.2 416.5 96.0 420.0 93.0 C423.5 90.0 427.7 87.7 432.0 86.0 C436.3 84.3 441.7 83.0 446.0 83.0 C450.3 83.0 455.3 84.2 458.0 86.0 C460.7 87.8 462.3 91.2 462.0 94.0 C461.7 96.8 457.0 98.7 456.0 103.0 C455.0 107.3 456.0 114.5 456.0 120.0 C456.0 125.5 457.0 132.0 456.0 136.0 C455.0 140.0 453.7 142.3 450.0 144.0 C446.3 145.7 439.5 146.2 434.0 146.0 C428.5 145.8 421.0 145.7 417.0 143.0 C413.0 140.3 411.5 134.5 410.0 130.0 C408.5 125.5 407.8 120.3 408.0 116.0 C408.2 111.7 409.0 107.8 411.0 104.0Z" fill="#a4a9d8" fill-opacity="0.4" stroke="#a4a9d8" stroke-width="6"/>
<path d="M430.0 84.0 C431.3 82.3 439.7 80.3 444.0 80.0 C448.3 79.7 452.3 80.0 456.0 82.0 C459.7 84.0 463.7 88.7 466.0 92.0 C468.3 95.3 470.7 100.7 470.0 102.0 C469.3 103.3 465.3 102.0 462.0 100.0 C458.7 98.0 454.3 91.7 450.0 90.0 C445.7 88.3 439.3 91.0 436.0 90.0 C432.7 89.0 428.7 85.7 430.0 84.0Z" fill="#a4a9d8"/>
<path d="M417.0 109.0 C419.2 105.7 424.2 104.5 428.0 104.0 C431.8 103.5 437.0 103.7 440.0 106.0 C443.0 108.3 445.0 113.7 446.0 118.0 C447.0 122.3 447.7 128.8 446.0 132.0 C444.3 135.2 440.2 136.5 436.0 137.0 C431.8 137.5 424.5 137.2 421.0 135.0 C417.5 132.8 415.7 128.3 415.0 124.0 C414.3 119.7 414.8 112.3 417.0 109.0Z" fill="#d9cf9f"/>
<path d="M420.0 116.0 C421.5 113.2 426.3 112.7 429.0 113.0 C431.7 113.3 434.7 115.2 436.0 118.0 C437.3 120.8 438.3 127.3 437.0 130.0 C435.7 132.7 430.8 134.0 428.0 134.0 C425.2 134.0 421.3 133.0 420.0 130.0 C418.7 127.0 418.5 118.8 420.0 116.0Z" fill="#3e7129"/>
<path d="M368.0 148.0 C370.0 142.7 377.3 141.8 382.0 140.0 C386.7 138.2 391.3 136.8 396.0 137.0 C400.7 137.2 406.7 138.5 410.0 141.0 C413.3 143.5 414.3 147.5 416.0 152.0 C417.7 156.5 421.3 164.2 420.0 168.0 C418.7 171.8 413.3 173.7 408.0 175.0 C402.7 176.3 394.3 176.5 388.0 176.0 C381.7 175.5 373.3 176.7 370.0 172.0 C366.7 167.3 366.0 153.3 368.0 148.0Z" fill="#3654b4"/>
<path d="M372.0 150.0 C373.7 147.3 376.7 147.3 380.0 146.0 C383.3 144.7 388.3 142.0 392.0 142.0 C395.7 142.0 400.0 143.0 402.0 146.0 C404.0 149.0 405.0 156.7 404.0 160.0 C403.0 163.3 400.0 165.0 396.0 166.0 C392.0 167.0 384.3 166.7 380.0 166.0 C375.7 165.3 371.3 164.7 370.0 162.0 C368.7 159.3 370.3 152.7 372.0 150.0Z" fill="#a4a9d8" fill-opacity="0.6"/>
<path d="M369.0 155.0 C370.0 153.2 374.5 151.3 378.0 150.0 C381.5 148.7 386.5 146.8 390.0 147.0 C393.5 147.2 397.7 148.7 399.0 151.0 C400.3 153.3 400.2 159.2 398.0 161.0 C395.8 162.8 390.3 162.0 386.0 162.0 C381.7 162.0 374.8 162.2 372.0 161.0 C369.2 159.8 368.0 156.8 369.0 155.0Z" fill="#d9cf9f"/>
<path d="M373.0 166.0 C373.3 165.0 383.2 168.7 388.0 168.0 C392.8 167.3 398.0 163.8 402.0 162.0 C406.0 160.2 409.5 156.3 412.0 157.0 C414.5 157.7 417.7 163.2 417.0 166.0 C416.3 168.8 413.2 172.7 408.0 174.0 C402.8 175.3 391.8 175.3 386.0 174.0 C380.2 172.7 372.7 167.0 373.0 166.0Z" fill="#d9cf9f"/>
<path d="M388.0 136.0 C389.0 132.5 393.7 132.0 396.0 133.0 C398.3 134.0 401.3 138.2 402.0 142.0 C402.7 145.8 402.0 154.0 400.0 156.0 C398.0 158.0 392.0 157.3 390.0 154.0 C388.0 150.7 387.0 139.5 388.0 136.0Z" fill="#a4a9d8"/>
<path d="M476.0 104.0 C478.0 101.3 483.0 109.3 486.0 114.0 C489.0 118.7 492.3 125.2 494.0 132.0 C495.7 138.8 496.0 147.0 496.0 155.0 C496.0 163.0 495.7 174.8 494.0 180.0 C492.3 185.2 488.7 187.7 486.0 186.0 C483.3 184.3 480.0 179.3 478.0 170.0 C476.0 160.7 474.3 141.0 474.0 130.0 C473.7 119.0 474.0 106.7 476.0 104.0Z" fill="#3e6ef0"/>
<path d="M478.0 108.0 C479.7 110.0 485.3 115.0 488.0 120.0 C490.7 125.0 492.8 131.3 494.0 138.0 C495.2 144.7 495.3 152.7 495.0 160.0 C494.7 167.3 492.5 178.3 492.0 182.0" fill="none" stroke="#a4a9d8" stroke-width="5"/>
<path d="M472.0 120.0 C473.7 117.7 479.0 119.7 482.0 122.0 C485.0 124.3 488.5 129.7 490.0 134.0 C491.5 138.3 492.5 145.5 491.0 148.0 C489.5 150.5 484.2 151.0 481.0 149.0 C477.8 147.0 473.5 140.8 472.0 136.0 C470.5 131.2 470.3 122.3 472.0 120.0Z" fill="#d9cf9f"/>
<path d="M453.0 108.0 C454.3 103.5 457.2 103.8 460.0 103.0 C462.8 102.2 467.7 101.5 470.0 103.0 C472.3 104.5 473.3 108.5 474.0 112.0 C474.7 115.5 473.2 119.3 474.0 124.0 C474.8 128.7 477.0 135.3 479.0 140.0 C481.0 144.7 484.3 147.0 486.0 152.0 C487.7 157.0 488.8 164.7 489.0 170.0 C489.2 175.3 490.2 181.3 487.0 184.0 C483.8 186.7 475.5 185.7 470.0 186.0 C464.5 186.3 457.2 190.3 454.0 186.0 C450.8 181.7 451.3 169.3 451.0 160.0 C450.7 150.7 451.7 138.7 452.0 130.0 C452.3 121.3 451.7 112.5 453.0 108.0Z" fill="#3e7129"/>
<path d="M371.0 176.0 C374.5 171.8 385.8 176.0 392.0 175.0 C398.2 174.0 403.7 172.3 408.0 170.0 C412.3 167.7 414.7 162.7 418.0 161.0 C421.3 159.3 425.0 159.7 428.0 160.0 C431.0 160.3 433.0 162.8 436.0 163.0 C439.0 163.2 442.8 159.8 446.0 161.0 C449.2 162.2 453.3 163.5 455.0 170.0 C456.7 176.5 470.0 195.0 456.0 200.0 C442.0 205.0 385.2 204.0 371.0 200.0 C356.8 196.0 367.5 180.2 371.0 176.0Z" fill="#3e7129"/>
<path d="M446.2 192.7 C447.1 189.6 451.9 184.1 455.8 182.2 C459.8 180.3 465.2 180.7 469.9 181.3 C474.6 181.9 479.2 185.3 483.9 185.7 C488.6 186.1 493.6 183.2 498.0 183.9 C502.4 184.6 506.2 188.6 510.3 190.1 C514.4 191.6 519.1 191.4 522.6 192.7 C526.1 194.0 530.5 196.4 531.4 198.0 C532.3 199.6 529.4 200.6 527.9 202.4 C526.4 204.2 525.0 208.2 522.6 208.9 C520.2 209.6 517.6 208.0 513.8 206.8 C510.0 205.6 503.9 203.4 499.8 201.5 C495.7 199.6 493.3 197.1 489.2 195.4 C485.1 193.7 479.3 191.4 475.2 191.3 C471.1 191.2 467.2 192.5 464.6 194.8 C462.0 197.2 461.7 204.4 459.3 205.4 C456.9 206.4 452.7 202.7 450.5 200.6 C448.3 198.5 445.3 195.8 446.2 192.7Z" fill="#d9cf9f"/>
<path d="M457.6 192.7 C460.2 189.8 466.9 189.2 471.6 189.2 C476.3 189.2 481.0 192.1 485.7 192.7 C490.4 193.3 495.1 191.5 499.8 192.7 C504.5 193.9 510.0 198.0 513.8 199.8 C517.6 201.6 521.7 202.0 522.6 203.3 C523.5 204.6 521.1 207.5 519.1 207.7 C517.1 207.8 513.8 205.4 510.3 204.2 C506.8 203.0 501.8 202.1 498.0 200.6 C494.2 199.1 491.3 196.7 487.5 195.4 C483.7 194.1 479.0 192.6 475.2 192.7 C471.4 192.8 467.2 193.5 464.6 196.2 C462.0 198.8 460.8 206.8 459.3 208.6 C457.8 210.4 456.1 209.5 455.8 206.8 C455.5 204.2 455.0 195.6 457.6 192.7Z" fill="#2d5cec"/>
<path d="M492.7 187.5 C494.2 185.8 500.1 184.8 503.3 185.7 C506.5 186.6 510.4 189.5 512.1 192.7 C513.9 195.9 515.3 203.5 513.8 205.0 C512.3 206.5 506.5 203.0 503.3 201.5 C500.1 200.0 496.3 198.5 494.5 196.2 C492.7 193.9 491.2 189.2 492.7 187.5Z" fill="#a4a9d8"/>
<path d="M457.6 198.0 C459.1 190.7 462.6 196.5 466.4 196.2 C470.2 195.9 475.4 195.3 480.4 196.2 C485.4 197.1 491.8 199.2 496.2 201.5 C500.6 203.8 504.4 203.9 506.8 210.3 C509.2 216.7 518.5 235.1 510.3 240.0 C502.1 244.9 466.4 247.0 457.6 240.0 C448.8 233.0 456.1 205.3 457.6 198.0Z" fill="#3e7129"/>
<path d="M440.0 205.0 C441.8 200.9 447.3 202.4 450.5 203.3 C453.7 204.2 456.9 207.1 459.3 210.3 C461.7 213.5 464.3 219.1 464.6 222.6 C464.9 226.1 464.0 229.9 461.1 231.4 C458.2 232.9 450.5 232.0 447.0 231.4 C443.5 230.8 441.2 232.3 440.0 227.9 C438.8 223.5 438.2 209.1 440.0 205.0Z" fill="#2d5cec"/>
<path d="M522.6 187.5 C522.6 184.4 527.6 181.4 531.4 179.6 C535.2 177.8 540.5 176.7 545.5 176.6 C550.5 176.5 558.4 176.6 561.3 179.0 C564.2 181.4 563.3 186.7 563.0 191.0 C562.7 195.3 561.2 200.3 559.5 205.0 C557.8 209.7 554.8 214.7 552.5 219.1 C550.2 223.5 547.9 231.7 545.5 231.4 C543.1 231.1 540.8 222.9 538.4 217.3 C536.0 211.7 534.0 203.0 531.4 198.0 C528.8 193.0 522.6 190.6 522.6 187.5Z" fill="#3e7129"/>
<path d="M559.5 179.6 C560.7 177.1 566.7 176.5 568.3 177.8 C569.9 179.1 569.8 184.4 569.2 187.5 C568.6 190.6 566.1 195.3 564.8 196.2 C563.5 197.1 562.2 195.5 561.3 192.7 C560.4 189.9 558.3 182.1 559.5 179.6Z" fill="#d9cf9f"/>
<path d="M566.6 189.2 C568.7 187.4 575.9 186.9 580.6 187.5 C585.3 188.1 590.6 191.2 594.7 192.7 C598.8 194.1 604.6 194.7 605.2 196.2 C605.8 197.7 602.3 200.8 598.2 201.5 C594.1 202.2 585.6 201.2 580.6 200.6 C575.6 200.0 570.6 199.9 568.3 198.0 C566.0 196.1 564.5 190.9 566.6 189.2Z" fill="#d9cf9f"/>
<path d="M584.1 179.6 C585.3 177.8 592.5 177.4 594.7 178.7 C596.9 180.0 598.5 185.8 597.3 187.5 C596.1 189.2 589.9 190.5 587.7 189.2 C585.5 187.9 582.9 181.3 584.1 179.6Z" fill="#a4a9d8"/>
<path d="M554.3 206.8 C556.3 200.1 560.8 200.7 566.6 199.8 C572.5 198.9 580.5 201.8 589.4 201.5 C598.3 201.2 614.9 191.6 620.0 198.0 C625.1 204.4 631.0 233.0 620.0 240.0 C609.0 247.0 565.2 245.5 554.3 240.0 C543.3 234.5 552.2 213.5 554.3 206.8Z" fill="#3e7129"/>
<path d="M616.9 108.2 C619.2 103.9 622.4 100.7 625.4 96.4 C628.4 92.1 630.2 85.1 635.1 82.4 C640.0 79.7 645.4 80.5 654.5 80.1 C663.6 79.7 684.0 76.3 689.9 80.1 C695.8 83.9 690.8 98.2 689.9 102.9 C689.0 107.6 685.0 104.6 684.5 108.2 C684.0 111.8 684.1 118.2 686.7 124.3 C689.3 130.4 697.8 137.9 700.0 144.8 C702.2 151.8 714.9 162.5 700.0 166.0 C685.1 169.5 625.0 170.2 610.4 166.0 C595.8 161.8 612.4 147.8 612.6 140.5 C612.8 133.2 610.8 127.6 611.5 122.2 C612.2 116.8 614.6 112.5 616.9 108.2Z" fill="#3e7129"/>
<path d="M616.9 108.2 C619.2 103.9 622.4 100.7 625.4 96.4 C628.4 92.1 631.7 85.0 635.1 82.4 C638.5 79.8 644.1 79.7 645.9 80.8 C647.7 81.9 647.7 86.8 645.9 88.9 C644.1 91.0 638.3 90.0 635.1 93.2 C631.9 96.4 628.6 103.6 626.5 108.2 C624.4 112.8 622.9 114.8 622.2 121.1 C621.5 127.4 622.6 138.3 622.2 145.8 C621.9 153.3 622.1 162.6 620.1 166.0 C618.1 169.4 611.6 170.2 610.4 166.0 C609.1 161.8 612.4 147.8 612.6 140.5 C612.8 133.2 610.8 127.6 611.5 122.2 C612.2 116.8 614.6 112.5 616.9 108.2Z" fill="#3e6ef0"/>
<path d="M616.9 108.2 C619.2 103.9 622.4 100.7 625.4 96.4 C628.4 92.1 631.7 85.0 635.1 82.4 C638.5 79.8 644.1 79.7 645.9 80.8 C647.7 81.9 647.7 86.8 645.9 88.9 C644.1 91.0 638.3 90.0 635.1 93.2 C631.9 96.4 628.6 103.6 626.5 108.2 C624.4 112.8 622.9 114.8 622.2 121.1 C621.5 127.4 622.6 138.3 622.2 145.8 C621.9 153.3 622.1 162.6 620.1 166.0 C618.1 169.4 611.6 170.2 610.4 166.0 C609.1 161.8 612.4 147.8 612.6 140.5 C612.8 133.2 610.8 127.6 611.5 122.2 C612.2 116.8 614.6 112.5 616.9 108.2Z" fill="#a4a9d8" fill-opacity="0.5"/>
<path d="M637.3 80.3 C645.5 78.6 681.1 78.3 689.9 80.1 C698.7 81.9 692.2 89.5 689.9 91.0 C687.6 92.5 681.8 89.4 675.9 88.9 C670.0 88.4 660.4 87.6 654.5 87.8 C648.6 88.0 643.4 91.2 640.5 90.0 C637.6 88.8 629.1 82.0 637.3 80.3Z" fill="#3e6ef0"/>
<path d="M625.4 114.7 C628.1 113.5 634.2 112.9 638.3 113.6 C642.4 114.3 647.2 116.3 650.2 119.0 C653.2 121.7 654.8 126.1 656.6 129.7 C658.4 133.3 659.5 137.3 660.9 140.5 C662.3 143.7 665.6 147.2 665.2 149.0 C664.9 150.8 660.6 152.3 658.8 151.2 C657.0 150.1 656.3 145.8 654.5 142.6 C652.7 139.4 650.5 135.1 648.0 131.9 C645.5 128.7 642.8 124.9 639.4 123.3 C636.0 121.7 630.5 122.6 627.6 122.2 C624.7 121.8 622.6 122.3 622.2 121.1 C621.8 119.8 622.7 116.0 625.4 114.7Z" fill="#3e6ef0"/>
<path d="M654.5 142.6 C657.7 141.9 661.6 146.5 665.2 149.0 C668.8 151.5 675.9 154.8 675.9 157.6 C675.9 160.4 669.5 164.6 665.2 166.0 C660.9 167.4 653.4 168.1 650.2 166.0 C647.0 163.9 645.2 157.2 645.9 153.3 C646.6 149.4 651.3 143.3 654.5 142.6Z" fill="#3e6ef0"/>
<path d="M637.3 151.2 C639.1 148.7 643.8 148.7 645.9 151.2 C648.0 153.7 652.0 163.5 650.2 166.0 C648.4 168.5 637.2 168.5 635.1 166.0 C633.0 163.5 635.5 153.7 637.3 151.2Z" fill="#a4a9d8"/>
<path d="M616.9 108.2 C618.3 106.2 622.4 100.7 625.4 96.4 C628.4 92.1 630.2 85.1 635.1 82.4 C640.0 79.7 645.4 80.5 654.5 80.1 C663.6 79.7 684.0 80.1 689.9 80.1" fill="none" stroke="#a4a9d8" stroke-width="5"/>
<path d="M614.7 121.1 C614.2 124.3 611.9 133.0 611.5 140.5 C611.1 148.0 612.4 161.8 612.6 166.0" fill="none" stroke="#a4a9d8" stroke-width="6"/>
<path d="M654.5 80.3 C655.6 79.8 665.7 81.3 671.6 82.4 C677.5 83.5 686.9 84.2 689.9 86.7 C692.9 89.2 691.3 97.1 689.9 97.5 C688.5 97.9 685.4 90.9 681.3 88.9 C677.2 86.9 669.7 87.1 665.2 85.7 C660.7 84.3 653.4 80.8 654.5 80.3Z" fill="#a4a9d8"/>
<path d="M635.1 113.6 C640.1 113.8 644.8 114.6 648.0 116.8 C651.2 119.0 652.5 123.3 654.5 126.5 C656.5 129.7 658.2 133.0 659.8 136.2 C661.4 139.4 662.1 143.0 664.1 145.8 C666.1 148.7 667.8 152.4 671.6 153.3 C675.4 154.2 682.0 151.9 686.7 151.2 C691.4 150.5 697.8 147.9 700.0 149.0 C702.2 150.1 702.6 155.8 700.0 157.6 C697.4 159.4 689.8 159.4 684.5 159.8 C679.2 160.2 672.7 161.4 668.4 159.8 C664.1 158.2 661.3 153.7 658.8 150.1 C656.3 146.5 655.4 142.4 653.4 138.3 C651.4 134.2 649.4 128.3 646.9 125.4 C644.4 122.5 642.4 122.0 638.3 121.1 C634.2 120.2 626.1 120.0 622.2 120.0 C618.3 120.0 615.4 121.8 614.7 121.1 C614.0 120.4 614.5 117.0 617.9 115.7 C621.3 114.5 630.1 113.4 635.1 113.6Z" fill="#3e6ef0"/>
<path d="M665.2 85.7 C667.0 86.8 671.1 91.0 673.8 95.3 C676.5 99.6 679.1 106.6 681.3 111.4 C683.4 116.2 684.7 120.2 686.7 124.3 C688.7 128.4 690.9 133.5 693.1 136.2 C695.3 138.9 698.9 138.7 700.0 140.5 C701.1 142.3 701.5 146.6 700.0 146.9 C698.5 147.2 693.8 145.5 691.0 142.6 C688.2 139.7 685.6 134.0 683.5 129.7 C681.4 125.4 680.1 121.4 678.1 116.8 C676.1 112.2 674.1 106.4 671.6 101.8 C669.1 97.2 664.1 91.6 663.0 88.9 C661.9 86.2 663.4 84.6 665.2 85.7Z" fill="#3e6ef0"/>
<path d="M619.0 111.4 C620.2 110.1 624.3 108.7 627.6 108.2 C630.9 107.7 636.8 111.1 638.9 108.2 C641.0 105.3 638.8 94.1 640.5 91.0 C642.2 87.9 645.9 89.6 649.1 89.8 C652.3 90.0 656.4 90.8 659.8 92.1 C663.2 93.4 666.8 95.2 669.5 97.5 C672.2 99.8 674.7 103.6 675.9 106.1 C677.1 108.6 675.9 110.0 676.5 112.5 C677.1 115.0 679.0 117.5 679.7 121.1 C680.4 124.7 681.4 131.6 680.8 134.0 C680.2 136.4 677.2 137.2 675.9 135.6 C674.5 134.0 673.8 127.4 672.7 124.3 C671.6 121.2 671.1 120.2 669.5 116.8 C667.9 113.4 665.5 106.7 663.0 103.9 C660.5 101.1 656.6 99.8 654.5 99.8 C652.4 99.8 651.3 101.8 650.2 104.1 C649.1 106.4 649.1 111.5 648.0 113.6 C646.9 115.7 645.7 116.6 643.7 116.8 C641.7 117.0 638.9 115.2 636.2 114.9 C633.5 114.6 630.3 114.7 627.6 114.9 C624.9 115.1 621.5 116.6 620.1 116.0 C618.7 115.4 617.8 112.7 619.0 111.4Z" fill="#d9cf9f"/>
<path d="M674.9 92.1 C675.4 90.3 679.2 89.2 681.3 91.0 C683.3 92.8 686.8 100.1 687.2 102.9 C687.6 105.7 685.0 107.9 683.5 107.7 C682.0 107.5 679.5 104.4 678.1 101.8 C676.7 99.2 674.4 93.9 674.9 92.1Z" fill="#d9cf9f"/>
<path d="M626.5 92.1 C628.0 89.0 632.9 87.9 635.1 87.6 C637.3 87.2 638.9 86.7 639.6 90.0 C640.3 93.3 640.5 104.3 639.4 107.4 C638.3 110.5 635.2 108.6 633.0 108.4 C630.8 108.2 627.4 109.0 626.3 106.3 C625.2 103.6 625.0 95.2 626.5 92.1Z" fill="#3e7129"/>
<path d="M649.3 104.1 C650.4 101.9 652.0 99.2 654.5 98.8 C657.0 98.4 661.2 99.7 664.1 101.8 C667.0 103.9 670.2 107.7 671.9 111.4 C673.5 115.2 673.3 120.3 674.0 124.3 C674.7 128.3 675.0 132.6 675.9 135.3 C676.8 138.0 677.6 138.8 679.4 140.5 C681.2 142.2 685.0 144.3 686.7 145.8 C688.5 147.3 690.6 148.6 689.9 149.6 C689.2 150.6 685.4 152.3 682.4 151.7 C679.4 151.1 674.5 147.9 671.6 146.0 C668.7 144.1 667.3 143.2 665.2 140.5 C663.1 137.8 661.3 133.2 658.8 129.7 C656.3 126.1 652.2 122.2 650.4 119.2 C648.6 116.2 648.2 114.2 648.0 111.7 C647.8 109.2 648.2 106.2 649.3 104.1Z" fill="#3e7129"/>
<path d="M684.0 104.1 C685.0 101.8 688.9 101.2 689.9 103.1 C690.9 105.0 688.2 113.6 689.9 115.7 C691.6 117.8 698.3 110.7 700.0 115.7 C701.7 120.7 701.0 141.7 700.0 145.8 C699.0 149.9 696.3 143.5 694.2 140.5 C692.1 137.5 689.0 131.5 687.2 127.6 C685.5 123.6 684.2 120.7 683.7 116.8 C683.2 112.9 683.0 106.4 684.0 104.1Z" fill="#3e7129"/>
<path d="M620.1 125.6 C621.5 122.7 624.6 120.5 627.6 119.2 C630.6 118.0 635.2 118.1 638.3 118.1 C641.4 118.1 643.7 118.0 646.1 119.2 C648.5 120.5 650.4 123.1 652.5 125.6 C654.6 128.1 658.3 131.7 659.0 134.2 C659.7 136.7 658.2 140.3 656.8 140.7 C655.4 141.1 652.5 138.6 650.4 136.4 C648.2 134.2 646.4 129.4 643.9 127.8 C641.4 126.2 637.8 126.0 635.3 126.7 C632.8 127.4 630.3 129.4 628.9 132.1 C627.5 134.8 627.8 140.7 626.7 142.8 C625.6 145.0 623.6 146.1 622.4 145.0 C621.1 143.9 619.6 139.6 619.2 136.4 C618.8 133.2 618.7 128.5 620.1 125.6Z" fill="#d9cf9f"/>
<path d="M628.9 129.9 C630.0 126.7 632.8 126.1 635.3 125.6 C637.8 125.1 641.4 125.3 643.9 126.7 C646.4 128.1 648.6 131.9 650.4 134.2 C652.2 136.5 654.7 138.5 654.7 140.7 C654.7 142.8 652.5 145.7 650.4 147.1 C648.2 148.5 644.7 148.6 641.8 149.3 C638.9 150.0 635.4 152.1 633.2 151.4 C631.1 150.7 629.6 148.6 628.9 145.0 C628.2 141.4 627.8 133.1 628.9 129.9Z" fill="#3e7129"/>
<path d="M661.1 138.5 C662.2 137.1 667.2 139.4 669.7 140.7 C672.2 141.9 674.8 143.8 676.2 146.0 C677.6 148.2 679.0 151.3 678.3 153.6 C677.6 155.9 674.0 159.3 671.9 160.0 C669.8 160.7 666.8 159.7 665.4 157.9 C664.0 156.1 664.0 152.5 663.3 149.3 C662.6 146.1 660.0 139.9 661.1 138.5Z" fill="#d9cf9f"/>
<path d="M586.0 160.0 C591.7 152.2 609.3 157.2 620.0 158.0 C630.7 158.8 643.0 161.7 650.0 165.0 C657.0 168.3 662.0 174.2 662.0 178.0 C662.0 181.8 655.3 185.7 650.0 188.0 C644.7 190.3 637.0 189.5 630.0 192.0 C623.0 194.5 615.3 200.8 608.0 203.0 C600.7 205.2 589.7 212.2 586.0 205.0 C582.3 197.8 580.3 167.8 586.0 160.0Z" fill="#3e6ef0"/>
<path d="M586.0 196.0 C589.3 195.7 600.0 196.0 606.0 194.0 C612.0 192.0 616.3 186.3 622.0 184.0 C627.7 181.7 633.7 181.3 640.0 180.0 C646.3 178.7 654.7 175.0 660.0 176.0 C665.3 177.0 667.7 183.3 672.0 186.0 C676.3 188.7 681.0 192.3 686.0 192.0 C691.0 191.7 699.3 185.3 702.0 184.0" fill="none" stroke="#2d5cec" stroke-width="5"/>
<path d="M606.1 177.5 C607.5 172.5 612.6 166.0 615.8 164.6 C619.0 163.2 623.1 166.8 625.4 168.9 C627.7 171.1 630.2 174.6 629.7 177.5 C629.2 180.4 624.9 183.2 622.2 186.1 C619.5 189.0 616.1 193.3 613.6 194.7 C611.1 196.1 608.5 197.6 607.2 194.7 C606.0 191.8 604.7 182.5 606.1 177.5Z" fill="#d9cf9f"/>
<path d="M612.6 173.2 C613.7 171.6 617.4 170.3 619.0 171.0 C620.6 171.7 622.6 175.5 622.2 177.5 C621.9 179.5 618.5 182.4 616.9 182.9 C615.3 183.4 613.3 182.3 612.6 180.7 C611.9 179.1 611.5 174.8 612.6 173.2Z" fill="#3e7129"/>
<path d="M633.0 173.2 C633.0 170.0 640.1 167.6 643.7 166.7 C647.3 165.8 651.8 165.5 654.5 167.8 C657.2 170.1 659.8 177.5 659.8 180.7 C659.8 183.9 657.2 186.3 654.5 187.2 C651.8 188.1 647.3 188.4 643.7 186.1 C640.1 183.8 633.0 176.4 633.0 173.2Z" fill="#d9cf9f"/>
<path d="M645.9 174.3 C646.4 172.6 649.9 171.2 651.2 172.1 C652.5 173.0 654.4 177.9 653.9 179.6 C653.4 181.3 649.8 183.2 648.5 182.3 C647.2 181.4 645.4 176.0 645.9 174.3Z" fill="#3e7129"/>
<path d="M665.2 164.6 C666.8 162.8 672.6 161.1 674.9 161.4 C677.2 161.8 679.8 164.5 679.2 166.7 C678.7 168.9 673.9 173.9 671.6 174.8 C669.3 175.7 666.3 173.8 665.2 172.1 C664.1 170.4 663.6 166.4 665.2 164.6Z" fill="#d9cf9f"/>
<path d="M664.1 172.1 C666.2 169.4 672.5 165.8 675.9 163.5 C679.3 161.2 680.5 159.3 684.5 158.1 C688.5 156.8 697.4 151.2 700.0 156.0 C702.6 160.8 701.7 180.8 700.0 187.2 C698.3 193.6 693.4 192.7 689.9 194.7 C686.4 196.7 683.0 199.6 679.2 199.0 C675.4 198.4 670.0 194.6 667.3 191.4 C664.6 188.2 663.5 182.8 663.0 179.6 C662.5 176.4 662.0 174.8 664.1 172.1Z" fill="#3e7129"/>
<path d="M590.0 202.2 C592.7 194.7 600.7 203.1 606.1 201.1 C611.5 199.1 617.7 192.6 622.2 190.4 C626.7 188.2 630.3 186.8 633.0 188.2 C635.7 189.6 638.5 195.4 638.3 199.0 C638.1 202.6 633.7 205.8 631.9 209.7 C630.1 213.6 627.4 219.9 627.6 222.6 C627.8 225.3 631.2 227.6 633.0 225.8 C634.8 224.0 636.1 216.4 638.3 211.9 C640.4 207.4 644.5 202.9 645.9 199.0 C647.3 195.1 644.6 190.9 646.9 188.2 C649.2 185.5 656.8 182.2 659.8 182.9 C662.8 183.6 662.5 189.3 665.2 192.5 C667.9 195.7 672.3 201.3 675.9 202.2 C679.5 203.1 682.7 200.1 686.7 197.9 C690.7 195.8 697.8 181.3 700.0 189.3 C702.2 197.3 718.3 236.6 700.0 246.0 C681.7 255.4 608.3 253.3 590.0 246.0 C571.7 238.7 587.3 209.7 590.0 202.2Z" fill="#3e7129"/>
<path d="M669.5 220.5 C671.6 218.3 681.0 217.8 683.5 219.4 C686.0 221.0 686.6 227.9 684.5 230.1 C682.4 232.2 673.1 233.9 670.6 232.3 C668.1 230.7 667.4 222.7 669.5 220.5Z" fill="#2d5cec"/>
<path d="M372.0 196.0 C373.3 197.3 376.8 200.3 380.0 204.0 C383.2 207.7 390.2 214.0 391.0 218.0 C391.8 222.0 388.2 225.0 385.0 228.0 C381.8 231.0 374.2 234.7 372.0 236.0" fill="none" stroke="#4a80f2" stroke-width="4.4" stroke-linecap="round" stroke-linejoin="round"/>
<path d="M372.0 196.0 C373.3 197.3 376.8 200.3 380.0 204.0 C383.2 207.7 390.2 214.0 391.0 218.0 C391.8 222.0 388.2 225.0 385.0 228.0 C381.8 231.0 374.2 234.7 372.0 236.0" fill="none" stroke="#2b55e6" stroke-width="3" stroke-linecap="round" stroke-linejoin="round"/>
<path d="M508.0 190.0 C508.7 192.7 509.0 200.3 512.0 206.0 C515.0 211.7 522.0 218.7 526.0 224.0 C530.0 229.3 534.3 235.7 536.0 238.0" fill="none" stroke="#4a80f2" stroke-width="4.9" stroke-linecap="round" stroke-linejoin="round"/>
<path d="M508.0 190.0 C508.7 192.7 509.0 200.3 512.0 206.0 C515.0 211.7 522.0 218.7 526.0 224.0 C530.0 229.3 534.3 235.7 536.0 238.0" fill="none" stroke="#2b55e6" stroke-width="3.5" stroke-linecap="round" stroke-linejoin="round"/>
<path d="M568.0 178.0 C566.0 181.0 559.7 190.0 556.0 196.0 C552.3 202.0 548.7 207.0 546.0 214.0 C543.3 221.0 541.0 234.0 540.0 238.0" fill="none" stroke="#4a80f2" stroke-width="4.9" stroke-linecap="round" stroke-linejoin="round"/>
<path d="M568.0 178.0 C566.0 181.0 559.7 190.0 556.0 196.0 C552.3 202.0 548.7 207.0 546.0 214.0 C543.3 221.0 541.0 234.0 540.0 238.0" fill="none" stroke="#2b55e6" stroke-width="3.5" stroke-linecap="round" stroke-linejoin="round"/>
<path d="M370.0 224.0 C372.3 221.2 379.8 218.5 384.0 219.0 C388.2 219.5 393.8 223.7 395.0 227.0 C396.2 230.3 394.2 236.5 391.0 239.0 C387.8 241.5 379.5 242.5 376.0 242.0 C372.5 241.5 371.0 239.0 370.0 236.0 C369.0 233.0 367.7 226.8 370.0 224.0Z" fill="#2d5cec"/>
<path d="M434.0 215.0 C436.0 211.5 443.3 210.3 448.0 209.0 C452.7 207.7 457.3 206.3 462.0 207.0 C466.7 207.7 474.3 209.5 476.0 213.0 C477.7 216.5 475.5 224.7 472.0 228.0 C468.5 231.3 461.0 232.7 455.0 233.0 C449.0 233.3 439.5 233.0 436.0 230.0 C432.5 227.0 432.0 218.5 434.0 215.0Z" fill="#2d5cec"/>
<path d="M458.0 198.0 L460.0 212.0" fill="none" stroke="#4a80f2" stroke-width="4.4" stroke-linecap="round" stroke-linejoin="round"/>
<path d="M458.0 198.0 L460.0 212.0" fill="none" stroke="#2b55e6" stroke-width="3" stroke-linecap="round" stroke-linejoin="round"/>
<path d="M432.0 226.0 C430.7 228.3 423.2 235.7 424.0 240.0 C424.8 244.3 434.2 246.5 437.0 252.0 C439.8 257.5 442.0 266.5 441.0 273.0 C440.0 279.5 435.8 286.0 431.0 291.0 C426.2 296.0 417.0 298.8 412.0 303.0 C407.0 307.2 405.2 313.3 401.0 316.0 C396.8 318.7 391.8 321.7 387.0 319.0 C382.2 316.3 374.5 303.2 372.0 300.0" fill="none" stroke="#4a80f2" stroke-width="4.6" stroke-linecap="round" stroke-linejoin="round"/>
<path d="M432.0 226.0 C430.7 228.3 423.2 235.7 424.0 240.0 C424.8 244.3 434.2 246.5 437.0 252.0 C439.8 257.5 442.0 266.5 441.0 273.0 C440.0 279.5 435.8 286.0 431.0 291.0 C426.2 296.0 417.0 298.8 412.0 303.0 C407.0 307.2 405.2 313.3 401.0 316.0 C396.8 318.7 391.8 321.7 387.0 319.0 C382.2 316.3 374.5 303.2 372.0 300.0" fill="none" stroke="#2b55e6" stroke-width="3.2" stroke-linecap="round" stroke-linejoin="round"/>
<path d="M428.0 298.0 C427.3 301.0 424.7 312.0 424.0 316.0 C423.3 320.0 423.0 318.3 424.0 322.0 C425.0 325.7 431.8 333.8 430.0 338.0 C428.2 342.2 419.2 344.0 413.0 347.0 C406.8 350.0 397.2 351.8 393.0 356.0 C388.8 360.2 390.7 367.7 388.0 372.0 C385.3 376.3 377.0 378.7 377.0 382.0 C377.0 385.3 384.0 389.3 388.0 392.0 C392.0 394.7 398.8 397.0 401.0 398.0" fill="none" stroke="#4a80f2" stroke-width="4.9" stroke-linecap="round" stroke-linejoin="round"/>
<path d="M428.0 298.0 C427.3 301.0 424.7 312.0 424.0 316.0 C423.3 320.0 423.0 318.3 424.0 322.0 C425.0 325.7 431.8 333.8 430.0 338.0 C428.2 342.2 419.2 344.0 413.0 347.0 C406.8 350.0 397.2 351.8 393.0 356.0 C388.8 360.2 390.7 367.7 388.0 372.0 C385.3 376.3 377.0 378.7 377.0 382.0 C377.0 385.3 384.0 389.3 388.0 392.0 C392.0 394.7 398.8 397.0 401.0 398.0" fill="none" stroke="#2b55e6" stroke-width="3.5" stroke-linecap="round" stroke-linejoin="round"/>
<path d="M393.0 319.0 C395.8 317.3 404.8 311.2 410.0 309.0 C415.2 306.8 421.7 306.5 424.0 306.0" fill="none" stroke="#4a80f2" stroke-width="4.4" stroke-linecap="round" stroke-linejoin="round"/>
<path d="M393.0 319.0 C395.8 317.3 404.8 311.2 410.0 309.0 C415.2 306.8 421.7 306.5 424.0 306.0" fill="none" stroke="#2b55e6" stroke-width="3" stroke-linecap="round" stroke-linejoin="round"/>
<path d="M424.0 306.0 C426.8 306.2 435.8 304.3 441.0 307.0 C446.2 309.7 450.0 318.0 455.0 322.0 C460.0 326.0 465.0 327.7 471.0 331.0 C477.0 334.3 486.8 338.5 491.0 342.0 C495.2 345.5 497.3 348.8 496.0 352.0 C494.7 355.2 484.3 357.0 483.0 361.0 C481.7 365.0 490.0 371.0 488.0 376.0 C486.0 381.0 477.7 387.7 471.0 391.0 C464.3 394.3 451.8 395.2 448.0 396.0" fill="none" stroke="#4a80f2" stroke-width="4.699999999999999" stroke-linecap="round" stroke-linejoin="round"/>
<path d="M424.0 306.0 C426.8 306.2 435.8 304.3 441.0 307.0 C446.2 309.7 450.0 318.0 455.0 322.0 C460.0 326.0 465.0 327.7 471.0 331.0 C477.0 334.3 486.8 338.5 491.0 342.0 C495.2 345.5 497.3 348.8 496.0 352.0 C494.7 355.2 484.3 357.0 483.0 361.0 C481.7 365.0 490.0 371.0 488.0 376.0 C486.0 381.0 477.7 387.7 471.0 391.0 C464.3 394.3 451.8 395.2 448.0 396.0" fill="none" stroke="#2b55e6" stroke-width="3.3" stroke-linecap="round" stroke-linejoin="round"/>
<ellipse cx="454.5" cy="368" rx="8.5" ry="10.5" fill="none" stroke="#2d5cec" stroke-width="3.5"/>
<path d="M505.0 352.0 C505.5 355.0 507.2 362.5 508.0 370.0 C508.8 377.5 509.7 392.5 510.0 397.0" fill="none" stroke="#4a80f2" stroke-width="5.4" stroke-linecap="round" stroke-linejoin="round"/>
<path d="M505.0 352.0 C505.5 355.0 507.2 362.5 508.0 370.0 C508.8 377.5 509.7 392.5 510.0 397.0" fill="none" stroke="#2b55e6" stroke-width="4" stroke-linecap="round" stroke-linejoin="round"/>
<path d="M511.0 222.0 C509.2 225.0 503.2 234.3 500.0 240.0 C496.8 245.7 491.2 252.3 492.0 256.0 C492.8 259.7 501.0 260.0 505.0 262.0 C509.0 264.0 512.7 266.3 516.0 268.0 C519.3 269.7 523.5 271.3 525.0 272.0" fill="none" stroke="#4a80f2" stroke-width="4.6" stroke-linecap="round" stroke-linejoin="round"/>
<path d="M511.0 222.0 C509.2 225.0 503.2 234.3 500.0 240.0 C496.8 245.7 491.2 252.3 492.0 256.0 C492.8 259.7 501.0 260.0 505.0 262.0 C509.0 264.0 512.7 266.3 516.0 268.0 C519.3 269.7 523.5 271.3 525.0 272.0" fill="none" stroke="#2b55e6" stroke-width="3.2" stroke-linecap="round" stroke-linejoin="round"/>
<path d="M504.0 292.0 C506.7 289.0 516.3 288.7 520.0 290.0 C523.7 291.3 526.0 296.8 526.0 300.0 C526.0 303.2 523.7 307.7 520.0 309.0 C516.3 310.3 506.7 310.8 504.0 308.0 C501.3 305.2 501.3 295.0 504.0 292.0Z" fill="#2d5cec"/>
<path d="M540.0 240.0 C546.0 239.5 565.0 237.3 576.0 237.0 C587.0 236.7 598.0 237.2 606.0 238.0 C614.0 238.8 619.0 241.0 624.0 242.0 C629.0 243.0 632.5 243.0 636.0 244.0 C639.5 245.0 643.5 247.3 645.0 248.0" fill="none" stroke="#4a80f2" stroke-width="5.9" stroke-linecap="round" stroke-linejoin="round"/>
<path d="M540.0 240.0 C546.0 239.5 565.0 237.3 576.0 237.0 C587.0 236.7 598.0 237.2 606.0 238.0 C614.0 238.8 619.0 241.0 624.0 242.0 C629.0 243.0 632.5 243.0 636.0 244.0 C639.5 245.0 643.5 247.3 645.0 248.0" fill="none" stroke="#2b55e6" stroke-width="4.5" stroke-linecap="round" stroke-linejoin="round"/>
<path d="M533.0 226.0 C536.0 223.0 544.2 220.3 548.0 222.0 C551.8 223.7 555.3 231.7 556.0 236.0 C556.7 240.3 555.3 245.7 552.0 248.0 C548.7 250.3 539.7 251.3 536.0 250.0 C532.3 248.7 530.5 244.0 530.0 240.0 C529.5 236.0 530.0 229.0 533.0 226.0Z" fill="#2d5cec"/>
<path d="M550.0 228.0 C548.3 230.8 540.5 239.2 540.0 245.0 C539.5 250.8 544.2 258.0 547.0 263.0 C549.8 268.0 551.2 272.3 557.0 275.0 C562.8 277.7 572.7 277.2 582.0 279.0 C591.3 280.8 606.0 283.5 613.0 286.0 C620.0 288.5 618.7 297.3 624.0 294.0 C629.3 290.7 638.0 270.0 645.0 266.0 C652.0 262.0 659.0 266.5 666.0 270.0 C673.0 273.5 683.0 281.7 687.0 287.0 C691.0 292.3 689.5 299.5 690.0 302.0" fill="none" stroke="#4a80f2" stroke-width="4.6" stroke-linecap="round" stroke-linejoin="round"/>
<path d="M550.0 228.0 C548.3 230.8 540.5 239.2 540.0 245.0 C539.5 250.8 544.2 258.0 547.0 263.0 C549.8 268.0 551.2 272.3 557.0 275.0 C562.8 277.7 572.7 277.2 582.0 279.0 C591.3 280.8 606.0 283.5 613.0 286.0 C620.0 288.5 618.7 297.3 624.0 294.0 C629.3 290.7 638.0 270.0 645.0 266.0 C652.0 262.0 659.0 266.5 666.0 270.0 C673.0 273.5 683.0 281.7 687.0 287.0 C691.0 292.3 689.5 299.5 690.0 302.0" fill="none" stroke="#2b55e6" stroke-width="3.2" stroke-linecap="round" stroke-linejoin="round"/>
<path d="M641.0 196.0 C640.5 199.0 639.7 209.0 638.0 214.0 C636.3 219.0 632.5 222.0 631.0 226.0 C629.5 230.0 629.3 236.0 629.0 238.0" fill="none" stroke="#4a80f2" stroke-width="4.4" stroke-linecap="round" stroke-linejoin="round"/>
<path d="M641.0 196.0 C640.5 199.0 639.7 209.0 638.0 214.0 C636.3 219.0 632.5 222.0 631.0 226.0 C629.5 230.0 629.3 236.0 629.0 238.0" fill="none" stroke="#2b55e6" stroke-width="3" stroke-linecap="round" stroke-linejoin="round"/>
<path d="M515.0 270.0 C517.3 271.5 526.0 275.5 529.0 279.0 C532.0 282.5 535.3 288.5 533.0 291.0 C530.7 293.5 518.0 293.5 515.0 294.0" fill="none" stroke="#4a80f2" stroke-width="4.4" stroke-linecap="round" stroke-linejoin="round"/>
<path d="M515.0 270.0 C517.3 271.5 526.0 275.5 529.0 279.0 C532.0 282.5 535.3 288.5 533.0 291.0 C530.7 293.5 518.0 293.5 515.0 294.0" fill="none" stroke="#2b55e6" stroke-width="3" stroke-linecap="round" stroke-linejoin="round"/>
<path d="M515.0 302.0 C520.3 302.5 539.7 303.8 547.0 305.0 C554.3 306.2 559.0 306.7 559.0 309.0 C559.0 311.3 548.5 312.8 547.0 319.0 C545.5 325.2 549.5 341.5 550.0 346.0" fill="none" stroke="#4a80f2" stroke-width="4.4" stroke-linecap="round" stroke-linejoin="round"/>
<path d="M515.0 302.0 C520.3 302.5 539.7 303.8 547.0 305.0 C554.3 306.2 559.0 306.7 559.0 309.0 C559.0 311.3 548.5 312.8 547.0 319.0 C545.5 325.2 549.5 341.5 550.0 346.0" fill="none" stroke="#2b55e6" stroke-width="3" stroke-linecap="round" stroke-linejoin="round"/>
<ellipse cx="567" cy="301" rx="7" ry="9" fill="none" stroke="#2d5cec" stroke-width="3.2"/>
<path d="M550.0 306.0 C549.2 309.0 545.3 318.7 545.0 324.0 C544.7 329.3 546.0 332.8 548.0 338.0 C550.0 343.2 552.8 349.8 557.0 355.0 C561.2 360.2 567.7 364.5 573.0 369.0 C578.3 373.5 585.5 377.3 589.0 382.0 C592.5 386.7 593.2 394.5 594.0 397.0" fill="none" stroke="#4a80f2" stroke-width="4.4" stroke-linecap="round" stroke-linejoin="round"/>
<path d="M550.0 306.0 C549.2 309.0 545.3 318.7 545.0 324.0 C544.7 329.3 546.0 332.8 548.0 338.0 C550.0 343.2 552.8 349.8 557.0 355.0 C561.2 360.2 567.7 364.5 573.0 369.0 C578.3 373.5 585.5 377.3 589.0 382.0 C592.5 386.7 593.2 394.5 594.0 397.0" fill="none" stroke="#2b55e6" stroke-width="3" stroke-linecap="round" stroke-linejoin="round"/>
<path d="M515.0 352.0 C518.0 352.5 528.7 351.5 533.0 355.0 C537.3 358.5 536.7 368.5 541.0 373.0 C545.3 377.5 554.5 378.0 559.0 382.0 C563.5 386.0 566.5 394.5 568.0 397.0" fill="none" stroke="#4a80f2" stroke-width="4.4" stroke-linecap="round" stroke-linejoin="round"/>
<path d="M515.0 352.0 C518.0 352.5 528.7 351.5 533.0 355.0 C537.3 358.5 536.7 368.5 541.0 373.0 C545.3 377.5 554.5 378.0 559.0 382.0 C563.5 386.0 566.5 394.5 568.0 397.0" fill="none" stroke="#2b55e6" stroke-width="3" stroke-linecap="round" stroke-linejoin="round"/>
<path d="M624.0 294.0 C621.3 294.8 611.8 295.0 608.0 299.0 C604.2 303.0 601.7 312.3 601.0 318.0 C600.3 323.7 602.2 329.2 604.0 333.0 C605.8 336.8 609.0 341.3 612.0 341.0 C615.0 340.7 619.5 335.8 622.0 331.0 C624.5 326.2 626.7 318.2 627.0 312.0 C627.3 305.8 624.5 297.0 624.0 294.0" fill="none" stroke="#4a80f2" stroke-width="4.6" stroke-linecap="round" stroke-linejoin="round"/>
<path d="M624.0 294.0 C621.3 294.8 611.8 295.0 608.0 299.0 C604.2 303.0 601.7 312.3 601.0 318.0 C600.3 323.7 602.2 329.2 604.0 333.0 C605.8 336.8 609.0 341.3 612.0 341.0 C615.0 340.7 619.5 335.8 622.0 331.0 C624.5 326.2 626.7 318.2 627.0 312.0 C627.3 305.8 624.5 297.0 624.0 294.0" fill="none" stroke="#2b55e6" stroke-width="3.2" stroke-linecap="round" stroke-linejoin="round"/>
<path d="M624.0 380.0 C629.0 378.3 649.5 385.3 660.0 386.0 C670.5 386.7 682.0 381.7 687.0 384.0 C692.0 386.3 694.5 397.3 690.0 400.0 C685.5 402.7 670.0 400.7 660.0 400.0 C650.0 399.3 636.0 399.3 630.0 396.0 C624.0 392.7 619.0 381.7 624.0 380.0Z" fill="#d9cf9f"/>
<path d="M628.0 364.0 C629.2 360.8 631.5 348.8 635.0 345.0 C638.5 341.2 644.7 339.8 649.0 341.0 C653.3 342.2 657.5 349.3 661.0 352.0 C664.5 354.7 665.3 359.3 670.0 357.0 C674.7 354.7 685.8 341.2 689.0 338.0" fill="none" stroke="#4a80f2" stroke-width="4.6" stroke-linecap="round" stroke-linejoin="round"/>
<path d="M628.0 364.0 C629.2 360.8 631.5 348.8 635.0 345.0 C638.5 341.2 644.7 339.8 649.0 341.0 C653.3 342.2 657.5 349.3 661.0 352.0 C664.5 354.7 665.3 359.3 670.0 357.0 C674.7 354.7 685.8 341.2 689.0 338.0" fill="none" stroke="#2b55e6" stroke-width="3.2" stroke-linecap="round" stroke-linejoin="round"/>
<path d="M628.0 364.0 C628.5 367.2 627.5 379.2 631.0 383.0 C634.5 386.8 644.7 384.5 649.0 387.0 C653.3 389.5 655.7 396.2 657.0 398.0" fill="none" stroke="#4a80f2" stroke-width="4.6" stroke-linecap="round" stroke-linejoin="round"/>
<path d="M628.0 364.0 C628.5 367.2 627.5 379.2 631.0 383.0 C634.5 386.8 644.7 384.5 649.0 387.0 C653.3 389.5 655.7 396.2 657.0 398.0" fill="none" stroke="#2b55e6" stroke-width="3.2" stroke-linecap="round" stroke-linejoin="round"/>
<path d="M668.0 355.0 C671.3 350.3 686.3 345.2 690.0 350.0 C693.7 354.8 693.3 379.3 690.0 384.0 C686.7 388.7 673.7 382.8 670.0 378.0 C666.3 373.2 664.7 359.7 668.0 355.0Z" fill="#2d5cec"/>
<path d="M686.0 128.0 C688.0 130.0 696.2 135.0 698.0 140.0 C699.8 145.0 699.0 154.3 697.0 158.0 C695.0 161.7 687.8 161.3 686.0 162.0" fill="none" stroke="#4a80f2" stroke-width="4.9" stroke-linecap="round" stroke-linejoin="round"/>
<path d="M686.0 128.0 C688.0 130.0 696.2 135.0 698.0 140.0 C699.8 145.0 699.0 154.3 697.0 158.0 C695.0 161.7 687.8 161.3 686.0 162.0" fill="none" stroke="#2b55e6" stroke-width="3.5" stroke-linecap="round" stroke-linejoin="round"/>
<path d="M685.0 200.0 C687.7 197.7 696.5 185.7 701.0 186.0 C705.5 186.3 708.8 197.5 712.0 202.0 C715.2 206.5 715.0 214.7 720.0 213.0 C725.0 211.3 735.8 199.5 742.0 192.0 C748.2 184.5 755.2 174.2 757.0 168.0 C758.8 161.8 753.7 157.2 753.0 155.0" fill="none" stroke="#4a80f2" stroke-width="4.9" stroke-linecap="round" stroke-linejoin="round"/>
<path d="M685.0 200.0 C687.7 197.7 696.5 185.7 701.0 186.0 C705.5 186.3 708.8 197.5 712.0 202.0 C715.2 206.5 715.0 214.7 720.0 213.0 C725.0 211.3 735.8 199.5 742.0 192.0 C748.2 184.5 755.2 174.2 757.0 168.0 C758.8 161.8 753.7 157.2 753.0 155.0" fill="none" stroke="#2b55e6" stroke-width="3.5" stroke-linecap="round" stroke-linejoin="round"/>
<path d="M720.0 213.0 L714.0 233.0" fill="none" stroke="#4a80f2" stroke-width="4.9" stroke-linecap="round" stroke-linejoin="round"/>
<path d="M720.0 213.0 L714.0 233.0" fill="none" stroke="#2b55e6" stroke-width="3.5" stroke-linecap="round" stroke-linejoin="round"/>
<path d="M720.0 213.0 L740.0 233.0" fill="none" stroke="#4a80f2" stroke-width="3.9" stroke-linecap="round" stroke-linejoin="round"/>
<path d="M720.0 213.0 L740.0 233.0" fill="none" stroke="#2b55e6" stroke-width="2.5" stroke-linecap="round" stroke-linejoin="round"/>
<path d="M779.0 239.0 C777.7 234.0 773.0 217.5 771.0 209.0 C769.0 200.5 766.0 193.2 767.0 188.0 C768.0 182.8 772.8 178.7 777.0 178.0 C781.2 177.3 789.5 183.0 792.0 184.0" fill="none" stroke="#4a80f2" stroke-width="4.9" stroke-linecap="round" stroke-linejoin="round"/>
<path d="M779.0 239.0 C777.7 234.0 773.0 217.5 771.0 209.0 C769.0 200.5 766.0 193.2 767.0 188.0 C768.0 182.8 772.8 178.7 777.0 178.0 C781.2 177.3 789.5 183.0 792.0 184.0" fill="none" stroke="#2b55e6" stroke-width="3.5" stroke-linecap="round" stroke-linejoin="round"/>
<path d="M769.0 228.0 C771.0 224.5 781.2 222.3 784.0 225.0 C786.8 227.7 788.0 240.5 786.0 244.0 C784.0 247.5 774.8 248.7 772.0 246.0 C769.2 243.3 767.0 231.5 769.0 228.0Z" fill="#2d5cec"/>
<path d="M782.0 160.0 C793.0 154.3 833.7 155.3 850.0 158.0 C866.3 160.7 876.7 169.0 880.0 176.0 C883.3 183.0 878.3 193.7 870.0 200.0 C861.7 206.3 841.7 212.0 830.0 214.0 C818.3 216.0 807.7 215.7 800.0 212.0 C792.3 208.3 787.0 200.7 784.0 192.0 C781.0 183.3 771.0 165.7 782.0 160.0Z" fill="#5a6ad0"/>
<path d="M784.0 166.0 C786.3 163.0 796.0 161.3 800.0 164.0 C804.0 166.7 807.0 176.0 808.0 182.0 C809.0 188.0 808.7 197.3 806.0 200.0 C803.3 202.7 795.3 201.0 792.0 198.0 C788.7 195.0 787.3 187.3 786.0 182.0 C784.7 176.7 781.7 169.0 784.0 166.0Z" fill="#9a9996"/>
<path d="M818.0 180.0 C820.0 176.7 831.0 174.3 834.0 176.0 C837.0 177.7 838.0 186.7 836.0 190.0 C834.0 193.3 825.0 197.7 822.0 196.0 C819.0 194.3 816.0 183.3 818.0 180.0Z" fill="#9a9996"/>
<path d="M826.0 182.0 C830.0 177.7 839.0 171.7 848.0 170.0 C857.0 168.3 872.5 169.7 880.0 172.0 C887.5 174.3 890.8 177.3 893.0 184.0 C895.2 190.7 898.5 207.3 893.0 212.0 C887.5 216.7 869.8 212.7 860.0 212.0 C850.2 211.3 840.0 210.7 834.0 208.0 C828.0 205.3 825.3 200.3 824.0 196.0 C822.7 191.7 822.0 186.3 826.0 182.0Z" fill="#9a9996"/>
<path d="M840.0 198.0 C844.2 194.0 857.0 190.3 865.0 190.0 C873.0 189.7 883.8 190.7 888.0 196.0 C892.2 201.3 894.7 217.3 890.0 222.0 C885.3 226.7 868.3 225.3 860.0 224.0 C851.7 222.7 843.3 218.3 840.0 214.0 C836.7 209.7 835.8 202.0 840.0 198.0Z" fill="#3e7129"/>
<path d="M802.0 208.0 C805.0 206.2 818.3 204.7 822.0 206.0 C825.7 207.3 827.0 214.2 824.0 216.0 C821.0 217.8 807.7 218.3 804.0 217.0 C800.3 215.7 799.0 209.8 802.0 208.0Z" fill="#9a9996"/>
<path d="M865.0 218.0 C868.0 215.2 877.2 211.3 880.0 215.0 C882.8 218.7 883.7 234.5 882.0 240.0 C880.3 245.5 873.3 249.3 870.0 248.0 C866.7 246.7 862.8 237.0 862.0 232.0 C861.2 227.0 862.0 220.8 865.0 218.0Z" fill="#9a9996"/>
<path d="M880.0 208.0 C882.8 202.3 890.8 195.7 893.0 206.0 C895.2 216.3 895.5 259.7 893.0 270.0 C890.5 280.3 880.8 273.0 878.0 268.0 C875.2 263.0 875.7 250.0 876.0 240.0 C876.3 230.0 877.2 213.7 880.0 208.0Z" fill="#2d5cec"/>
<path d="M790.0 214.0 C796.7 215.3 818.3 220.7 830.0 222.0 C841.7 223.3 852.5 223.3 860.0 222.0 C867.5 220.7 872.5 215.3 875.0 214.0" fill="none" stroke="#4a80f2" stroke-width="4.4" stroke-linecap="round" stroke-linejoin="round"/>
<path d="M790.0 214.0 C796.7 215.3 818.3 220.7 830.0 222.0 C841.7 223.3 852.5 223.3 860.0 222.0 C867.5 220.7 872.5 215.3 875.0 214.0" fill="none" stroke="#2b55e6" stroke-width="3" stroke-linecap="round" stroke-linejoin="round"/>
<path d="M820.0 242.0 C822.3 239.3 833.0 237.7 836.0 240.0 C839.0 242.3 840.3 253.3 838.0 256.0 C835.7 258.7 825.0 258.3 822.0 256.0 C819.0 253.7 817.7 244.7 820.0 242.0Z" fill="#2d5cec"/>
<rect x="690" y="236" width="82" height="16" fill="#4a7a30" fill-opacity="0.4"/>
<g><ellipse cx="531.3" cy="111.5" rx="4.4" ry="1.2" fill="#102008" fill-opacity="0.17" transform="rotate(14 531.3 111.5)"/><ellipse cx="844.7" cy="133.7" rx="1.9" ry="2.3" fill="#8ad060" fill-opacity="0.17" transform="rotate(15 844.7 133.7)"/><ellipse cx="800.4" cy="102.1" rx="2.5" ry="2.9" fill="#102008" fill-opacity="0.20" transform="rotate(101 800.4 102.1)"/><ellipse cx="384.5" cy="135.9" rx="4.0" ry="1.4" fill="#8ad060" fill-opacity="0.16" transform="rotate(146 384.5 135.9)"/><ellipse cx="523.0" cy="343.0" rx="2.3" ry="2.7" fill="#102008" fill-opacity="0.17" transform="rotate(140 523.0 343.0)"/><ellipse cx="739.0" cy="255.4" rx="4.3" ry="2.5" fill="#102008" fill-opacity="0.22" transform="rotate(119 739.0 255.4)"/><ellipse cx="671.3" cy="216.7" rx="2.8" ry="3.4" fill="#102008" fill-opacity="0.15" transform="rotate(147 671.3 216.7)"/><ellipse cx="518.6" cy="231.3" rx="3.0" ry="2.3" fill="#102008" fill-opacity="0.13" transform="rotate(131 518.6 231.3)"/><ellipse cx="581.7" cy="322.5" rx="2.2" ry="2.5" fill="#8ad060" fill-opacity="0.18" transform="rotate(142 581.7 322.5)"/><ellipse cx="664.6" cy="363.7" rx="2.9" ry="3.1" fill="#102008" fill-opacity="0.20" transform="rotate(116 664.6 363.7)"/><ellipse cx="394.8" cy="91.6" rx="2.7" ry="3.1" fill="#8ad060" fill-opacity="0.19" transform="rotate(79 394.8 91.6)"/><ellipse cx="704.2" cy="404.6" rx="5.2" ry="1.9" fill="#8ad060" fill-opacity="0.18" transform="rotate(5 704.2 404.6)"/><ellipse cx="861.2" cy="182.7" rx="4.2" ry="2.5" fill="#8ad060" fill-opacity="0.13" transform="rotate(63 861.2 182.7)"/><ellipse cx="570.9" cy="378.1" rx="3.7" ry="1.5" fill="#8ad060" fill-opacity="0.13" transform="rotate(35 570.9 378.1)"/><ellipse cx="796.3" cy="359.7" rx="2.8" ry="2.2" fill="#8ad060" fill-opacity="0.21" transform="rotate(59 796.3 359.7)"/><ellipse cx="438.7" cy="120.3" rx="2.5" ry="1.7" fill="#8ad060" fill-opacity="0.17" transform="rotate(67 438.7 120.3)"/><ellipse cx="508.8" cy="109.7" rx="3.9" ry="2.8" fill="#8ad060" fill-opacity="0.12" transform="rotate(131 508.8 109.7)"/><ellipse cx="866.4" cy="286.9" rx="4.8" ry="2.4" fill="#102008" fill-opacity="0.24" transform="rotate(174 866.4 286.9)"/><ellipse cx="784.9" cy="195.5" rx="3.3" ry="1.3" fill="#102008" fill-opacity="0.13" transform="rotate(17 784.9 195.5)"/><ellipse cx="884.8" cy="212.3" rx="2.0" ry="2.8" fill="#8ad060" fill-opacity="0.17" transform="rotate(137 884.8 212.3)"/><ellipse cx="412.3" cy="185.5" rx="1.6" ry="3.6" fill="#102008" fill-opacity="0.14" transform="rotate(64 412.3 185.5)"/><ellipse cx="869.2" cy="268.6" rx="3.6" ry="1.3" fill="#8ad060" fill-opacity="0.22" transform="rotate(122 869.2 268.6)"/><ellipse cx="616.9" cy="88.9" rx="2.0" ry="2.0" fill="#8ad060" fill-opacity="0.20" transform="rotate(41 616.9 88.9)"/><ellipse cx="634.2" cy="130.4" rx="5.8" ry="2.1" fill="#102008" fill-opacity="0.24" transform="rotate(135 634.2 130.4)"/><ellipse cx="517.5" cy="282.7" rx="1.9" ry="3.5" fill="#102008" fill-opacity="0.24" transform="rotate(91 517.5 282.7)"/><ellipse cx="771.0" cy="244.3" rx="5.0" ry="2.0" fill="#8ad060" fill-opacity="0.20" transform="rotate(49 771.0 244.3)"/><ellipse cx="789.3" cy="343.8" rx="4.8" ry="1.7" fill="#102008" fill-opacity="0.17" transform="rotate(7 789.3 343.8)"/><ellipse cx="887.4" cy="334.0" rx="3.6" ry="1.6" fill="#102008" fill-opacity="0.16" transform="rotate(89 887.4 334.0)"/><ellipse cx="868.9" cy="185.9" rx="2.5" ry="1.7" fill="#8ad060" fill-opacity="0.12" transform="rotate(159 868.9 185.9)"/><ellipse cx="885.1" cy="271.4" rx="1.5" ry="3.7" fill="#8ad060" fill-opacity="0.18" transform="rotate(169 885.1 271.4)"/><ellipse cx="422.1" cy="194.2" rx="4.7" ry="1.6" fill="#102008" fill-opacity="0.18" transform="rotate(162 422.1 194.2)"/><ellipse cx="535.9" cy="337.7" rx="5.9" ry="2.2" fill="#8ad060" fill-opacity="0.21" transform="rotate(40 535.9 337.7)"/><ellipse cx="449.0" cy="103.2" rx="2.2" ry="3.7" fill="#102008" fill-opacity="0.14" transform="rotate(152 449.0 103.2)"/><ellipse cx="882.5" cy="287.7" rx="3.1" ry="2.6" fill="#8ad060" fill-opacity="0.10" transform="rotate(166 882.5 287.7)"/><ellipse cx="413.0" cy="319.8" rx="2.1" ry="4.0" fill="#8ad060" fill-opacity="0.20" transform="rotate(7 413.0 319.8)"/><ellipse cx="492.7" cy="161.0" rx="2.6" ry="2.8" fill="#8ad060" fill-opacity="0.15" transform="rotate(33 492.7 161.0)"/><ellipse cx="390.6" cy="316.5" rx="5.5" ry="3.0" fill="#102008" fill-opacity="0.19" transform="rotate(128 390.6 316.5)"/><ellipse cx="428.0" cy="111.8" rx="3.8" ry="3.6" fill="#102008" fill-opacity="0.20" transform="rotate(38 428.0 111.8)"/><ellipse cx="450.2" cy="223.8" rx="4.8" ry="2.7" fill="#8ad060" fill-opacity="0.16" transform="rotate(142 450.2 223.8)"/><ellipse cx="616.1" cy="329.2" rx="5.5" ry="1.2" fill="#8ad060" fill-opacity="0.11" transform="rotate(25 616.1 329.2)"/><ellipse cx="629.6" cy="254.5" rx="4.9" ry="3.7" fill="#8ad060" fill-opacity="0.17" transform="rotate(129 629.6 254.5)"/><ellipse cx="682.3" cy="128.4" rx="2.7" ry="2.5" fill="#102008" fill-opacity="0.19" transform="rotate(63 682.3 128.4)"/><ellipse cx="732.1" cy="364.0" rx="5.7" ry="1.8" fill="#102008" fill-opacity="0.24" transform="rotate(114 732.1 364.0)"/><ellipse cx="431.4" cy="101.3" rx="3.5" ry="1.2" fill="#8ad060" fill-opacity="0.11" transform="rotate(171 431.4 101.3)"/><ellipse cx="520.0" cy="101.6" rx="5.0" ry="3.8" fill="#102008" fill-opacity="0.17" transform="rotate(64 520.0 101.6)"/><ellipse cx="830.3" cy="395.7" rx="2.5" ry="3.9" fill="#8ad060" fill-opacity="0.16" transform="rotate(170 830.3 395.7)"/><ellipse cx="803.4" cy="115.2" rx="3.4" ry="2.5" fill="#8ad060" fill-opacity="0.12" transform="rotate(81 803.4 115.2)"/><ellipse cx="407.3" cy="186.4" rx="3.0" ry="2.4" fill="#102008" fill-opacity="0.17" transform="rotate(132 407.3 186.4)"/><ellipse cx="691.8" cy="237.3" rx="1.8" ry="4.0" fill="#102008" fill-opacity="0.25" transform="rotate(26 691.8 237.3)"/><ellipse cx="403.0" cy="153.6" rx="5.6" ry="1.5" fill="#102008" fill-opacity="0.23" transform="rotate(173 403.0 153.6)"/><ellipse cx="796.2" cy="149.0" rx="2.2" ry="3.8" fill="#102008" fill-opacity="0.21" transform="rotate(22 796.2 149.0)"/><ellipse cx="507.3" cy="337.3" rx="2.3" ry="3.7" fill="#8ad060" fill-opacity="0.10" transform="rotate(22 507.3 337.3)"/><ellipse cx="786.9" cy="88.1" rx="5.4" ry="1.2" fill="#102008" fill-opacity="0.18" transform="rotate(86 786.9 88.1)"/><ellipse cx="890.0" cy="204.4" rx="5.6" ry="2.9" fill="#8ad060" fill-opacity="0.19" transform="rotate(28 890.0 204.4)"/><ellipse cx="876.5" cy="150.1" rx="2.3" ry="3.8" fill="#102008" fill-opacity="0.19" transform="rotate(52 876.5 150.1)"/><ellipse cx="513.1" cy="233.0" rx="2.3" ry="2.0" fill="#8ad060" fill-opacity="0.13" transform="rotate(3 513.1 233.0)"/><ellipse cx="367.9" cy="235.0" rx="5.9" ry="2.5" fill="#8ad060" fill-opacity="0.15" transform="rotate(168 367.9 235.0)"/><ellipse cx="796.1" cy="209.4" rx="3.7" ry="3.5" fill="#8ad060" fill-opacity="0.16" transform="rotate(176 796.1 209.4)"/><ellipse cx="473.1" cy="138.9" rx="2.4" ry="3.6" fill="#102008" fill-opacity="0.14" transform="rotate(88 473.1 138.9)"/><ellipse cx="883.3" cy="350.3" rx="1.6" ry="2.9" fill="#102008" fill-opacity="0.18" transform="rotate(14 883.3 350.3)"/><ellipse cx="403.2" cy="351.8" rx="5.4" ry="3.0" fill="#8ad060" fill-opacity="0.13" transform="rotate(75 403.2 351.8)"/><ellipse cx="382.2" cy="123.5" rx="2.7" ry="1.0" fill="#8ad060" fill-opacity="0.14" transform="rotate(140 382.2 123.5)"/><ellipse cx="531.1" cy="71.0" rx="5.5" ry="1.7" fill="#8ad060" fill-opacity="0.14" transform="rotate(21 531.1 71.0)"/><ellipse cx="611.9" cy="234.0" rx="2.4" ry="2.5" fill="#8ad060" fill-opacity="0.13" transform="rotate(22 611.9 234.0)"/><ellipse cx="435.0" cy="263.2" rx="3.3" ry="1.9" fill="#102008" fill-opacity="0.13" transform="rotate(135 435.0 263.2)"/><ellipse cx="814.5" cy="113.0" rx="5.5" ry="3.4" fill="#102008" fill-opacity="0.22" transform="rotate(126 814.5 113.0)"/><ellipse cx="438.0" cy="311.0" rx="4.4" ry="1.1" fill="#102008" fill-opacity="0.24" transform="rotate(160 438.0 311.0)"/><ellipse cx="587.6" cy="303.0" rx="3.8" ry="3.7" fill="#102008" fill-opacity="0.19" transform="rotate(4 587.6 303.0)"/><ellipse cx="800.1" cy="262.3" rx="5.5" ry="3.0" fill="#102008" fill-opacity="0.15" transform="rotate(7 800.1 262.3)"/><ellipse cx="380.4" cy="280.7" rx="5.8" ry="2.1" fill="#8ad060" fill-opacity="0.11" transform="rotate(4 380.4 280.7)"/><ellipse cx="693.0" cy="295.9" rx="3.7" ry="1.0" fill="#102008" fill-opacity="0.22" transform="rotate(128 693.0 295.9)"/><ellipse cx="838.4" cy="91.0" rx="3.9" ry="3.2" fill="#8ad060" fill-opacity="0.20" transform="rotate(67 838.4 91.0)"/><ellipse cx="483.6" cy="322.2" rx="2.5" ry="2.9" fill="#8ad060" fill-opacity="0.20" transform="rotate(19 483.6 322.2)"/><ellipse cx="614.3" cy="296.9" rx="5.0" ry="2.9" fill="#102008" fill-opacity="0.13" transform="rotate(37 614.3 296.9)"/><ellipse cx="535.5" cy="285.7" rx="4.6" ry="2.9" fill="#8ad060" fill-opacity="0.16" transform="rotate(124 535.5 285.7)"/><ellipse cx="501.8" cy="292.9" rx="4.6" ry="3.0" fill="#8ad060" fill-opacity="0.16" transform="rotate(118 501.8 292.9)"/><ellipse cx="607.3" cy="326.0" rx="6.0" ry="2.6" fill="#8ad060" fill-opacity="0.11" transform="rotate(121 607.3 326.0)"/><ellipse cx="367.4" cy="218.7" rx="5.2" ry="3.9" fill="#8ad060" fill-opacity="0.13" transform="rotate(53 367.4 218.7)"/><ellipse cx="848.4" cy="382.8" rx="1.8" ry="1.3" fill="#102008" fill-opacity="0.15" transform="rotate(92 848.4 382.8)"/><ellipse cx="428.9" cy="344.4" rx="3.8" ry="3.7" fill="#102008" fill-opacity="0.15" transform="rotate(124 428.9 344.4)"/><ellipse cx="568.8" cy="114.4" rx="5.8" ry="3.0" fill="#8ad060" fill-opacity="0.19" transform="rotate(106 568.8 114.4)"/><ellipse cx="542.0" cy="169.0" rx="5.3" ry="1.0" fill="#102008" fill-opacity="0.23" transform="rotate(30 542.0 169.0)"/><ellipse cx="860.8" cy="127.1" rx="1.6" ry="3.2" fill="#8ad060" fill-opacity="0.11" transform="rotate(99 860.8 127.1)"/><ellipse cx="892.4" cy="264.0" rx="3.1" ry="2.3" fill="#8ad060" fill-opacity="0.11" transform="rotate(26 892.4 264.0)"/><ellipse cx="385.6" cy="289.4" rx="4.4" ry="1.4" fill="#102008" fill-opacity="0.18" transform="rotate(80 385.6 289.4)"/><ellipse cx="459.6" cy="188.9" rx="5.8" ry="3.7" fill="#102008" fill-opacity="0.20" transform="rotate(141 459.6 188.9)"/><ellipse cx="651.8" cy="309.4" rx="1.7" ry="3.2" fill="#8ad060" fill-opacity="0.19" transform="rotate(164 651.8 309.4)"/><ellipse cx="823.2" cy="228.0" rx="5.6" ry="2.7" fill="#8ad060" fill-opacity="0.15" transform="rotate(72 823.2 228.0)"/><ellipse cx="517.3" cy="316.2" rx="5.9" ry="1.8" fill="#102008" fill-opacity="0.16" transform="rotate(142 517.3 316.2)"/><ellipse cx="715.8" cy="100.7" rx="4.4" ry="1.2" fill="#102008" fill-opacity="0.23" transform="rotate(140 715.8 100.7)"/><ellipse cx="475.7" cy="374.4" rx="6.0" ry="2.3" fill="#8ad060" fill-opacity="0.12" transform="rotate(23 475.7 374.4)"/><ellipse cx="451.5" cy="252.4" rx="2.9" ry="2.1" fill="#102008" fill-opacity="0.15" transform="rotate(5 451.5 252.4)"/><ellipse cx="759.1" cy="202.6" rx="3.4" ry="2.6" fill="#8ad060" fill-opacity="0.14" transform="rotate(15 759.1 202.6)"/><ellipse cx="624.5" cy="258.8" rx="3.1" ry="3.1" fill="#102008" fill-opacity="0.22" transform="rotate(55 624.5 258.8)"/><ellipse cx="407.5" cy="371.1" rx="3.2" ry="2.9" fill="#8ad060" fill-opacity="0.14" transform="rotate(5 407.5 371.1)"/><ellipse cx="426.1" cy="207.0" rx="4.9" ry="3.4" fill="#102008" fill-opacity="0.18" transform="rotate(18 426.1 207.0)"/><ellipse cx="567.5" cy="381.5" rx="5.2" ry="3.6" fill="#102008" fill-opacity="0.15" transform="rotate(27 567.5 381.5)"/><ellipse cx="477.7" cy="111.9" rx="5.9" ry="1.3" fill="#102008" fill-opacity="0.21" transform="rotate(117 477.7 111.9)"/><ellipse cx="403.5" cy="329.3" rx="1.5" ry="1.4" fill="#102008" fill-opacity="0.12" transform="rotate(77 403.5 329.3)"/><ellipse cx="872.9" cy="277.0" rx="3.9" ry="2.3" fill="#102008" fill-opacity="0.13" transform="rotate(76 872.9 277.0)"/><ellipse cx="638.6" cy="261.8" rx="3.2" ry="1.7" fill="#102008" fill-opacity="0.12" transform="rotate(77 638.6 261.8)"/><ellipse cx="891.1" cy="156.0" rx="2.9" ry="3.5" fill="#8ad060" fill-opacity="0.16" transform="rotate(140 891.1 156.0)"/><ellipse cx="490.2" cy="393.3" rx="4.7" ry="1.9" fill="#8ad060" fill-opacity="0.16" transform="rotate(172 490.2 393.3)"/><ellipse cx="704.2" cy="87.2" rx="2.5" ry="2.3" fill="#8ad060" fill-opacity="0.16" transform="rotate(178 704.2 87.2)"/><ellipse cx="538.9" cy="205.4" rx="4.6" ry="1.6" fill="#102008" fill-opacity="0.22" transform="rotate(129 538.9 205.4)"/><ellipse cx="394.1" cy="231.5" rx="2.4" ry="3.3" fill="#8ad060" fill-opacity="0.16" transform="rotate(67 394.1 231.5)"/><ellipse cx="764.9" cy="161.6" rx="5.8" ry="2.5" fill="#8ad060" fill-opacity="0.13" transform="rotate(106 764.9 161.6)"/><ellipse cx="845.1" cy="78.6" rx="4.2" ry="3.8" fill="#8ad060" fill-opacity="0.10" transform="rotate(152 845.1 78.6)"/><ellipse cx="433.9" cy="77.0" rx="1.8" ry="2.2" fill="#102008" fill-opacity="0.23" transform="rotate(28 433.9 77.0)"/><ellipse cx="891.7" cy="383.2" rx="3.0" ry="1.6" fill="#102008" fill-opacity="0.22" transform="rotate(8 891.7 383.2)"/><ellipse cx="524.8" cy="311.4" rx="5.3" ry="4.0" fill="#8ad060" fill-opacity="0.11" transform="rotate(20 524.8 311.4)"/><ellipse cx="507.7" cy="181.3" rx="5.8" ry="1.4" fill="#102008" fill-opacity="0.15" transform="rotate(91 507.7 181.3)"/><ellipse cx="769.3" cy="166.4" rx="5.1" ry="1.3" fill="#102008" fill-opacity="0.15" transform="rotate(138 769.3 166.4)"/><ellipse cx="849.9" cy="126.2" rx="3.1" ry="3.7" fill="#8ad060" fill-opacity="0.15" transform="rotate(160 849.9 126.2)"/><ellipse cx="768.2" cy="73.1" rx="1.7" ry="1.2" fill="#102008" fill-opacity="0.15" transform="rotate(16 768.2 73.1)"/><ellipse cx="838.7" cy="177.0" rx="2.7" ry="3.9" fill="#102008" fill-opacity="0.15" transform="rotate(176 838.7 177.0)"/><ellipse cx="527.3" cy="154.9" rx="1.5" ry="3.3" fill="#102008" fill-opacity="0.20" transform="rotate(16 527.3 154.9)"/><ellipse cx="371.0" cy="140.4" rx="3.6" ry="3.9" fill="#102008" fill-opacity="0.17" transform="rotate(64 371.0 140.4)"/><ellipse cx="846.7" cy="342.6" rx="2.1" ry="2.5" fill="#8ad060" fill-opacity="0.21" transform="rotate(77 846.7 342.6)"/><ellipse cx="798.2" cy="327.9" rx="4.2" ry="2.0" fill="#8ad060" fill-opacity="0.14" transform="rotate(152 798.2 327.9)"/><ellipse cx="400.3" cy="127.7" rx="4.9" ry="1.7" fill="#8ad060" fill-opacity="0.10" transform="rotate(141 400.3 127.7)"/><ellipse cx="649.4" cy="114.9" rx="3.4" ry="1.3" fill="#8ad060" fill-opacity="0.17" transform="rotate(53 649.4 114.9)"/><ellipse cx="409.6" cy="232.5" rx="4.7" ry="2.3" fill="#8ad060" fill-opacity="0.15" transform="rotate(158 409.6 232.5)"/><ellipse cx="834.8" cy="140.8" rx="3.9" ry="3.3" fill="#102008" fill-opacity="0.22" transform="rotate(75 834.8 140.8)"/><ellipse cx="515.2" cy="256.3" rx="3.2" ry="3.2" fill="#8ad060" fill-opacity="0.13" transform="rotate(62 515.2 256.3)"/><ellipse cx="484.0" cy="156.9" rx="5.6" ry="1.6" fill="#8ad060" fill-opacity="0.13" transform="rotate(62 484.0 156.9)"/><ellipse cx="629.4" cy="139.5" rx="5.1" ry="3.0" fill="#102008" fill-opacity="0.13" transform="rotate(121 629.4 139.5)"/><ellipse cx="830.3" cy="139.4" rx="3.5" ry="2.1" fill="#102008" fill-opacity="0.15" transform="rotate(12 830.3 139.4)"/><ellipse cx="459.4" cy="397.6" rx="4.1" ry="3.8" fill="#8ad060" fill-opacity="0.20" transform="rotate(114 459.4 397.6)"/><ellipse cx="680.6" cy="328.7" rx="4.5" ry="1.0" fill="#102008" fill-opacity="0.21" transform="rotate(89 680.6 328.7)"/><ellipse cx="474.4" cy="187.3" rx="2.1" ry="1.6" fill="#8ad060" fill-opacity="0.17" transform="rotate(166 474.4 187.3)"/><ellipse cx="847.0" cy="342.5" rx="5.2" ry="2.2" fill="#8ad060" fill-opacity="0.17" transform="rotate(19 847.0 342.5)"/><ellipse cx="466.8" cy="335.8" rx="4.0" ry="1.2" fill="#8ad060" fill-opacity="0.15" transform="rotate(140 466.8 335.8)"/><ellipse cx="440.7" cy="244.8" rx="4.4" ry="2.2" fill="#8ad060" fill-opacity="0.22" transform="rotate(170 440.7 244.8)"/><ellipse cx="522.6" cy="390.7" rx="2.9" ry="2.7" fill="#8ad060" fill-opacity="0.15" transform="rotate(93 522.6 390.7)"/><ellipse cx="702.8" cy="195.0" rx="3.3" ry="3.8" fill="#8ad060" fill-opacity="0.12" transform="rotate(29 702.8 195.0)"/><ellipse cx="796.9" cy="200.4" rx="5.5" ry="2.4" fill="#8ad060" fill-opacity="0.10" transform="rotate(141 796.9 200.4)"/><ellipse cx="434.2" cy="339.7" rx="3.3" ry="2.7" fill="#102008" fill-opacity="0.22" transform="rotate(43 434.2 339.7)"/><ellipse cx="436.0" cy="157.6" rx="3.8" ry="3.8" fill="#8ad060" fill-opacity="0.16" transform="rotate(50 436.0 157.6)"/><ellipse cx="519.4" cy="350.4" rx="1.7" ry="3.7" fill="#8ad060" fill-opacity="0.17" transform="rotate(162 519.4 350.4)"/><ellipse cx="565.5" cy="373.7" rx="4.3" ry="3.5" fill="#8ad060" fill-opacity="0.19" transform="rotate(56 565.5 373.7)"/><ellipse cx="690.3" cy="272.9" rx="2.4" ry="2.4" fill="#102008" fill-opacity="0.13" transform="rotate(132 690.3 272.9)"/><ellipse cx="441.7" cy="184.0" rx="2.2" ry="3.9" fill="#102008" fill-opacity="0.15" transform="rotate(143 441.7 184.0)"/><ellipse cx="808.7" cy="292.9" rx="4.5" ry="2.0" fill="#8ad060" fill-opacity="0.15" transform="rotate(160 808.7 292.9)"/><ellipse cx="774.3" cy="284.9" rx="2.9" ry="1.7" fill="#8ad060" fill-opacity="0.14" transform="rotate(128 774.3 284.9)"/><ellipse cx="592.5" cy="67.1" rx="4.3" ry="2.5" fill="#8ad060" fill-opacity="0.19" transform="rotate(117 592.5 67.1)"/><ellipse cx="805.6" cy="341.1" rx="3.3" ry="1.2" fill="#8ad060" fill-opacity="0.14" transform="rotate(113 805.6 341.1)"/><ellipse cx="627.8" cy="287.7" rx="1.7" ry="1.4" fill="#102008" fill-opacity="0.16" transform="rotate(130 627.8 287.7)"/><ellipse cx="400.8" cy="320.7" rx="5.5" ry="3.0" fill="#102008" fill-opacity="0.12" transform="rotate(16 400.8 320.7)"/><ellipse cx="890.9" cy="313.8" rx="5.2" ry="1.6" fill="#102008" fill-opacity="0.18" transform="rotate(42 890.9 313.8)"/><ellipse cx="725.1" cy="309.9" rx="2.5" ry="3.5" fill="#102008" fill-opacity="0.15" transform="rotate(82 725.1 309.9)"/><ellipse cx="837.6" cy="154.7" rx="5.2" ry="1.4" fill="#102008" fill-opacity="0.24" transform="rotate(53 837.6 154.7)"/><ellipse cx="674.7" cy="273.3" rx="2.6" ry="2.1" fill="#8ad060" fill-opacity="0.15" transform="rotate(162 674.7 273.3)"/><ellipse cx="859.0" cy="295.5" rx="5.5" ry="1.5" fill="#102008" fill-opacity="0.13" transform="rotate(135 859.0 295.5)"/><ellipse cx="384.0" cy="357.7" rx="5.8" ry="2.4" fill="#102008" fill-opacity="0.21" transform="rotate(26 384.0 357.7)"/><ellipse cx="492.8" cy="245.4" rx="5.4" ry="3.2" fill="#8ad060" fill-opacity="0.15" transform="rotate(94 492.8 245.4)"/><ellipse cx="666.9" cy="184.4" rx="4.9" ry="2.3" fill="#8ad060" fill-opacity="0.19" transform="rotate(12 666.9 184.4)"/><ellipse cx="516.6" cy="238.6" rx="2.9" ry="3.9" fill="#102008" fill-opacity="0.24" transform="rotate(80 516.6 238.6)"/><ellipse cx="750.2" cy="319.0" rx="2.5" ry="1.9" fill="#102008" fill-opacity="0.17" transform="rotate(93 750.2 319.0)"/><ellipse cx="837.1" cy="104.9" rx="2.5" ry="3.0" fill="#8ad060" fill-opacity="0.10" transform="rotate(90 837.1 104.9)"/><ellipse cx="520.5" cy="241.0" rx="3.9" ry="2.2" fill="#8ad060" fill-opacity="0.12" transform="rotate(93 520.5 241.0)"/><ellipse cx="691.8" cy="224.3" rx="2.1" ry="3.8" fill="#8ad060" fill-opacity="0.12" transform="rotate(24 691.8 224.3)"/><ellipse cx="392.1" cy="109.4" rx="4.5" ry="1.8" fill="#102008" fill-opacity="0.25" transform="rotate(14 392.1 109.4)"/><ellipse cx="703.0" cy="254.7" rx="3.1" ry="2.9" fill="#8ad060" fill-opacity="0.21" transform="rotate(126 703.0 254.7)"/><ellipse cx="490.9" cy="373.4" rx="1.7" ry="2.6" fill="#8ad060" fill-opacity="0.13" transform="rotate(14 490.9 373.4)"/><ellipse cx="845.8" cy="95.5" rx="4.3" ry="3.0" fill="#8ad060" fill-opacity="0.15" transform="rotate(132 845.8 95.5)"/><ellipse cx="683.3" cy="235.4" rx="4.4" ry="3.4" fill="#8ad060" fill-opacity="0.14" transform="rotate(76 683.3 235.4)"/><ellipse cx="692.9" cy="404.9" rx="4.8" ry="2.4" fill="#102008" fill-opacity="0.17" transform="rotate(111 692.9 404.9)"/><ellipse cx="756.7" cy="220.9" rx="4.8" ry="2.4" fill="#8ad060" fill-opacity="0.11" transform="rotate(59 756.7 220.9)"/><ellipse cx="702.6" cy="101.9" rx="5.5" ry="3.8" fill="#102008" fill-opacity="0.15" transform="rotate(13 702.6 101.9)"/><ellipse cx="500.3" cy="251.7" rx="3.5" ry="3.4" fill="#102008" fill-opacity="0.15" transform="rotate(164 500.3 251.7)"/><ellipse cx="854.8" cy="370.2" rx="1.9" ry="2.5" fill="#8ad060" fill-opacity="0.21" transform="rotate(51 854.8 370.2)"/><ellipse cx="863.4" cy="318.7" rx="3.0" ry="3.6" fill="#8ad060" fill-opacity="0.13" transform="rotate(161 863.4 318.7)"/><ellipse cx="851.1" cy="400.6" rx="5.3" ry="2.6" fill="#8ad060" fill-opacity="0.16" transform="rotate(1 851.1 400.6)"/><ellipse cx="816.8" cy="211.2" rx="4.8" ry="2.7" fill="#8ad060" fill-opacity="0.13" transform="rotate(159 816.8 211.2)"/><ellipse cx="671.2" cy="255.7" rx="2.3" ry="1.1" fill="#8ad060" fill-opacity="0.17" transform="rotate(41 671.2 255.7)"/><ellipse cx="542.5" cy="108.4" rx="1.6" ry="1.1" fill="#102008" fill-opacity="0.20" transform="rotate(178 542.5 108.4)"/><ellipse cx="394.3" cy="75.2" rx="5.4" ry="3.3" fill="#8ad060" fill-opacity="0.21" transform="rotate(136 394.3 75.2)"/><ellipse cx="834.8" cy="82.0" rx="5.4" ry="3.7" fill="#102008" fill-opacity="0.13" transform="rotate(52 834.8 82.0)"/><ellipse cx="466.7" cy="70.8" rx="5.8" ry="3.7" fill="#102008" fill-opacity="0.13" transform="rotate(161 466.7 70.8)"/><ellipse cx="696.3" cy="225.0" rx="2.1" ry="3.4" fill="#102008" fill-opacity="0.16" transform="rotate(86 696.3 225.0)"/><ellipse cx="584.7" cy="66.3" rx="2.7" ry="1.8" fill="#102008" fill-opacity="0.17" transform="rotate(82 584.7 66.3)"/><ellipse cx="769.5" cy="268.5" rx="3.6" ry="1.9" fill="#102008" fill-opacity="0.22" transform="rotate(7 769.5 268.5)"/><ellipse cx="591.5" cy="328.0" rx="3.1" ry="3.1" fill="#102008" fill-opacity="0.15" transform="rotate(23 591.5 328.0)"/><ellipse cx="665.4" cy="158.9" rx="3.5" ry="2.6" fill="#8ad060" fill-opacity="0.19" transform="rotate(13 665.4 158.9)"/><ellipse cx="360.3" cy="229.8" rx="3.7" ry="3.4" fill="#8ad060" fill-opacity="0.16" transform="rotate(88 360.3 229.8)"/><ellipse cx="870.1" cy="238.3" rx="4.1" ry="1.5" fill="#102008" fill-opacity="0.24" transform="rotate(59 870.1 238.3)"/><ellipse cx="624.6" cy="97.3" rx="4.4" ry="1.2" fill="#102008" fill-opacity="0.21" transform="rotate(26 624.6 97.3)"/><ellipse cx="693.9" cy="182.8" rx="3.3" ry="2.2" fill="#102008" fill-opacity="0.13" transform="rotate(165 693.9 182.8)"/><ellipse cx="371.5" cy="130.7" rx="2.7" ry="3.7" fill="#102008" fill-opacity="0.17" transform="rotate(161 371.5 130.7)"/><ellipse cx="483.0" cy="219.4" rx="3.9" ry="3.3" fill="#102008" fill-opacity="0.20" transform="rotate(89 483.0 219.4)"/><ellipse cx="669.1" cy="240.6" rx="5.4" ry="2.4" fill="#102008" fill-opacity="0.16" transform="rotate(118 669.1 240.6)"/><ellipse cx="592.8" cy="328.2" rx="4.1" ry="1.4" fill="#8ad060" fill-opacity="0.21" transform="rotate(60 592.8 328.2)"/><ellipse cx="629.6" cy="152.1" rx="4.9" ry="3.5" fill="#102008" fill-opacity="0.21" transform="rotate(63 629.6 152.1)"/><ellipse cx="744.9" cy="268.8" rx="3.1" ry="1.7" fill="#102008" fill-opacity="0.15" transform="rotate(26 744.9 268.8)"/><ellipse cx="446.1" cy="287.9" rx="2.4" ry="1.5" fill="#8ad060" fill-opacity="0.14" transform="rotate(76 446.1 287.9)"/><ellipse cx="590.7" cy="127.3" rx="4.4" ry="1.3" fill="#8ad060" fill-opacity="0.15" transform="rotate(8 590.7 127.3)"/><ellipse cx="364.8" cy="356.3" rx="3.5" ry="1.7" fill="#102008" fill-opacity="0.16" transform="rotate(5 364.8 356.3)"/><ellipse cx="433.9" cy="269.1" rx="3.3" ry="3.2" fill="#102008" fill-opacity="0.18" transform="rotate(146 433.9 269.1)"/><ellipse cx="672.3" cy="284.2" rx="5.3" ry="3.0" fill="#102008" fill-opacity="0.23" transform="rotate(164 672.3 284.2)"/><ellipse cx="732.5" cy="355.7" rx="4.6" ry="2.9" fill="#8ad060" fill-opacity="0.14" transform="rotate(160 732.5 355.7)"/><ellipse cx="732.8" cy="370.4" rx="2.6" ry="2.2" fill="#102008" fill-opacity="0.14" transform="rotate(108 732.8 370.4)"/><ellipse cx="616.3" cy="65.8" rx="5.4" ry="2.6" fill="#102008" fill-opacity="0.23" transform="rotate(167 616.3 65.8)"/><ellipse cx="533.5" cy="62.7" rx="5.2" ry="3.7" fill="#8ad060" fill-opacity="0.13" transform="rotate(55 533.5 62.7)"/><ellipse cx="444.1" cy="331.1" rx="5.7" ry="2.6" fill="#8ad060" fill-opacity="0.17" transform="rotate(138 444.1 331.1)"/><ellipse cx="467.7" cy="224.6" rx="1.6" ry="3.4" fill="#8ad060" fill-opacity="0.14" transform="rotate(116 467.7 224.6)"/><ellipse cx="470.4" cy="297.2" rx="3.3" ry="3.3" fill="#8ad060" fill-opacity="0.22" transform="rotate(91 470.4 297.2)"/><ellipse cx="699.1" cy="146.9" rx="3.2" ry="1.2" fill="#8ad060" fill-opacity="0.21" transform="rotate(160 699.1 146.9)"/><ellipse cx="731.6" cy="181.5" rx="2.7" ry="1.7" fill="#102008" fill-opacity="0.24" transform="rotate(134 731.6 181.5)"/><ellipse cx="877.8" cy="405.0" rx="5.8" ry="2.4" fill="#8ad060" fill-opacity="0.21" transform="rotate(17 877.8 405.0)"/><ellipse cx="791.1" cy="279.7" rx="3.6" ry="2.7" fill="#8ad060" fill-opacity="0.22" transform="rotate(90 791.1 279.7)"/><ellipse cx="714.3" cy="348.1" rx="5.1" ry="2.2" fill="#102008" fill-opacity="0.22" transform="rotate(166 714.3 348.1)"/><ellipse cx="425.0" cy="349.1" rx="3.1" ry="3.6" fill="#8ad060" fill-opacity="0.15" transform="rotate(64 425.0 349.1)"/><ellipse cx="883.8" cy="295.2" rx="3.7" ry="3.4" fill="#102008" fill-opacity="0.17" transform="rotate(167 883.8 295.2)"/><ellipse cx="519.5" cy="225.9" rx="3.4" ry="2.9" fill="#102008" fill-opacity="0.17" transform="rotate(77 519.5 225.9)"/><ellipse cx="815.1" cy="78.9" rx="5.2" ry="3.7" fill="#102008" fill-opacity="0.14" transform="rotate(88 815.1 78.9)"/><ellipse cx="696.7" cy="64.2" rx="1.6" ry="3.9" fill="#102008" fill-opacity="0.15" transform="rotate(25 696.7 64.2)"/><ellipse cx="667.5" cy="356.3" rx="2.3" ry="2.4" fill="#102008" fill-opacity="0.15" transform="rotate(103 667.5 356.3)"/><ellipse cx="781.5" cy="117.4" rx="5.5" ry="2.8" fill="#102008" fill-opacity="0.21" transform="rotate(140 781.5 117.4)"/><ellipse cx="779.6" cy="350.9" rx="2.4" ry="3.1" fill="#102008" fill-opacity="0.22" transform="rotate(112 779.6 350.9)"/><ellipse cx="717.1" cy="99.7" rx="2.0" ry="2.3" fill="#102008" fill-opacity="0.18" transform="rotate(142 717.1 99.7)"/><ellipse cx="389.3" cy="221.5" rx="2.1" ry="2.5" fill="#8ad060" fill-opacity="0.16" transform="rotate(1 389.3 221.5)"/><ellipse cx="443.8" cy="170.6" rx="4.6" ry="2.5" fill="#8ad060" fill-opacity="0.16" transform="rotate(109 443.8 170.6)"/><ellipse cx="582.1" cy="393.3" rx="1.8" ry="2.9" fill="#102008" fill-opacity="0.12" transform="rotate(156 582.1 393.3)"/><ellipse cx="382.5" cy="315.3" rx="6.0" ry="3.4" fill="#8ad060" fill-opacity="0.16" transform="rotate(36 382.5 315.3)"/><ellipse cx="376.1" cy="308.9" rx="4.3" ry="2.0" fill="#102008" fill-opacity="0.17" transform="rotate(121 376.1 308.9)"/><ellipse cx="774.5" cy="251.8" rx="5.6" ry="1.9" fill="#8ad060" fill-opacity="0.13" transform="rotate(13 774.5 251.8)"/><ellipse cx="800.3" cy="160.9" rx="5.2" ry="2.2" fill="#102008" fill-opacity="0.16" transform="rotate(129 800.3 160.9)"/><ellipse cx="542.5" cy="129.8" rx="3.7" ry="1.4" fill="#8ad060" fill-opacity="0.19" transform="rotate(32 542.5 129.8)"/><ellipse cx="671.8" cy="279.9" rx="5.0" ry="1.1" fill="#102008" fill-opacity="0.24" transform="rotate(139 671.8 279.9)"/><ellipse cx="665.1" cy="197.7" rx="2.0" ry="1.1" fill="#102008" fill-opacity="0.18" transform="rotate(168 665.1 197.7)"/><ellipse cx="390.2" cy="233.3" rx="3.9" ry="2.1" fill="#8ad060" fill-opacity="0.18" transform="rotate(176 390.2 233.3)"/><ellipse cx="677.0" cy="296.0" rx="2.5" ry="3.0" fill="#8ad060" fill-opacity="0.19" transform="rotate(25 677.0 296.0)"/><ellipse cx="713.0" cy="361.5" rx="3.4" ry="1.3" fill="#102008" fill-opacity="0.12" transform="rotate(35 713.0 361.5)"/><ellipse cx="778.8" cy="254.6" rx="2.7" ry="1.9" fill="#8ad060" fill-opacity="0.14" transform="rotate(110 778.8 254.6)"/><ellipse cx="661.0" cy="260.2" rx="5.6" ry="2.5" fill="#102008" fill-opacity="0.23" transform="rotate(107 661.0 260.2)"/><ellipse cx="665.8" cy="378.7" rx="3.5" ry="1.0" fill="#8ad060" fill-opacity="0.17" transform="rotate(168 665.8 378.7)"/><ellipse cx="882.7" cy="224.5" rx="3.4" ry="1.3" fill="#102008" fill-opacity="0.15" transform="rotate(38 882.7 224.5)"/><ellipse cx="693.4" cy="207.6" rx="1.5" ry="3.0" fill="#102008" fill-opacity="0.23" transform="rotate(55 693.4 207.6)"/><ellipse cx="823.2" cy="103.9" rx="1.6" ry="3.2" fill="#8ad060" fill-opacity="0.19" transform="rotate(47 823.2 103.9)"/><ellipse cx="851.7" cy="186.3" rx="4.9" ry="3.1" fill="#8ad060" fill-opacity="0.19" transform="rotate(75 851.7 186.3)"/><ellipse cx="694.3" cy="305.8" rx="3.6" ry="3.8" fill="#8ad060" fill-opacity="0.22" transform="rotate(8 694.3 305.8)"/><ellipse cx="364.1" cy="64.1" rx="4.4" ry="3.5" fill="#8ad060" fill-opacity="0.14" transform="rotate(153 364.1 64.1)"/><ellipse cx="446.8" cy="358.6" rx="3.7" ry="1.2" fill="#8ad060" fill-opacity="0.17" transform="rotate(112 446.8 358.6)"/><ellipse cx="609.3" cy="116.9" rx="5.8" ry="1.4" fill="#102008" fill-opacity="0.14" transform="rotate(106 609.3 116.9)"/><ellipse cx="613.2" cy="329.8" rx="3.5" ry="1.8" fill="#102008" fill-opacity="0.16" transform="rotate(71 613.2 329.8)"/><ellipse cx="390.4" cy="397.9" rx="4.7" ry="3.5" fill="#8ad060" fill-opacity="0.17" transform="rotate(3 390.4 397.9)"/><ellipse cx="802.7" cy="268.2" rx="2.9" ry="2.3" fill="#102008" fill-opacity="0.17" transform="rotate(175 802.7 268.2)"/><ellipse cx="559.3" cy="327.5" rx="2.6" ry="2.4" fill="#102008" fill-opacity="0.16" transform="rotate(68 559.3 327.5)"/><ellipse cx="584.0" cy="263.2" rx="5.2" ry="3.7" fill="#8ad060" fill-opacity="0.20" transform="rotate(146 584.0 263.2)"/><ellipse cx="436.6" cy="398.4" rx="5.1" ry="2.6" fill="#102008" fill-opacity="0.18" transform="rotate(136 436.6 398.4)"/><ellipse cx="403.5" cy="251.7" rx="5.1" ry="1.6" fill="#102008" fill-opacity="0.24" transform="rotate(59 403.5 251.7)"/><ellipse cx="523.6" cy="79.0" rx="3.3" ry="3.1" fill="#102008" fill-opacity="0.20" transform="rotate(2 523.6 79.0)"/><ellipse cx="781.5" cy="219.0" rx="1.9" ry="3.4" fill="#102008" fill-opacity="0.15" transform="rotate(148 781.5 219.0)"/><ellipse cx="636.8" cy="149.3" rx="5.2" ry="2.0" fill="#102008" fill-opacity="0.15" transform="rotate(54 636.8 149.3)"/><ellipse cx="460.9" cy="121.9" rx="4.7" ry="2.1" fill="#102008" fill-opacity="0.17" transform="rotate(132 460.9 121.9)"/><ellipse cx="816.5" cy="144.7" rx="5.7" ry="2.5" fill="#102008" fill-opacity="0.17" transform="rotate(118 816.5 144.7)"/><ellipse cx="779.2" cy="113.3" rx="4.2" ry="2.0" fill="#102008" fill-opacity="0.12" transform="rotate(8 779.2 113.3)"/><ellipse cx="467.5" cy="362.0" rx="4.0" ry="2.8" fill="#8ad060" fill-opacity="0.21" transform="rotate(71 467.5 362.0)"/><ellipse cx="585.9" cy="388.4" rx="5.0" ry="3.5" fill="#102008" fill-opacity="0.15" transform="rotate(9 585.9 388.4)"/><ellipse cx="539.3" cy="405.1" rx="3.2" ry="1.1" fill="#8ad060" fill-opacity="0.14" transform="rotate(180 539.3 405.1)"/><ellipse cx="603.2" cy="388.6" rx="5.6" ry="1.2" fill="#102008" fill-opacity="0.17" transform="rotate(30 603.2 388.6)"/><ellipse cx="735.9" cy="90.3" rx="2.9" ry="1.7" fill="#8ad060" fill-opacity="0.21" transform="rotate(129 735.9 90.3)"/><ellipse cx="568.3" cy="215.0" rx="2.2" ry="3.9" fill="#102008" fill-opacity="0.15" transform="rotate(9 568.3 215.0)"/><ellipse cx="861.8" cy="386.5" rx="1.8" ry="2.7" fill="#8ad060" fill-opacity="0.21" transform="rotate(66 861.8 386.5)"/><ellipse cx="778.7" cy="305.9" rx="4.4" ry="4.0" fill="#8ad060" fill-opacity="0.12" transform="rotate(1 778.7 305.9)"/><ellipse cx="860.6" cy="294.6" rx="2.8" ry="2.8" fill="#102008" fill-opacity="0.13" transform="rotate(82 860.6 294.6)"/><ellipse cx="556.9" cy="194.7" rx="3.2" ry="2.1" fill="#8ad060" fill-opacity="0.20" transform="rotate(173 556.9 194.7)"/><ellipse cx="835.3" cy="221.8" rx="5.6" ry="3.4" fill="#8ad060" fill-opacity="0.20" transform="rotate(19 835.3 221.8)"/><ellipse cx="857.7" cy="360.6" rx="5.5" ry="1.4" fill="#8ad060" fill-opacity="0.11" transform="rotate(98 857.7 360.6)"/><ellipse cx="808.6" cy="277.7" rx="3.5" ry="2.0" fill="#102008" fill-opacity="0.18" transform="rotate(160 808.6 277.7)"/><ellipse cx="553.8" cy="174.5" rx="4.8" ry="1.5" fill="#8ad060" fill-opacity="0.21" transform="rotate(112 553.8 174.5)"/><ellipse cx="823.8" cy="151.7" rx="3.4" ry="1.5" fill="#8ad060" fill-opacity="0.20" transform="rotate(85 823.8 151.7)"/><ellipse cx="788.2" cy="149.7" rx="2.0" ry="2.4" fill="#8ad060" fill-opacity="0.12" transform="rotate(131 788.2 149.7)"/><ellipse cx="388.4" cy="370.5" rx="4.5" ry="1.6" fill="#8ad060" fill-opacity="0.13" transform="rotate(65 388.4 370.5)"/><ellipse cx="761.8" cy="396.8" rx="3.4" ry="1.8" fill="#8ad060" fill-opacity="0.13" transform="rotate(99 761.8 396.8)"/><ellipse cx="512.8" cy="370.9" rx="1.8" ry="3.2" fill="#8ad060" fill-opacity="0.22" transform="rotate(4 512.8 370.9)"/><ellipse cx="594.5" cy="235.7" rx="3.8" ry="2.3" fill="#102008" fill-opacity="0.24" transform="rotate(73 594.5 235.7)"/><ellipse cx="457.4" cy="210.5" rx="5.6" ry="1.7" fill="#102008" fill-opacity="0.14" transform="rotate(46 457.4 210.5)"/><ellipse cx="637.1" cy="139.2" rx="2.3" ry="2.8" fill="#102008" fill-opacity="0.24" transform="rotate(126 637.1 139.2)"/><ellipse cx="765.3" cy="120.0" rx="2.1" ry="3.0" fill="#102008" fill-opacity="0.14" transform="rotate(78 765.3 120.0)"/><ellipse cx="466.2" cy="81.9" rx="4.8" ry="2.2" fill="#102008" fill-opacity="0.13" transform="rotate(88 466.2 81.9)"/><ellipse cx="537.3" cy="352.0" rx="5.4" ry="2.5" fill="#8ad060" fill-opacity="0.21" transform="rotate(122 537.3 352.0)"/><ellipse cx="429.3" cy="290.6" rx="2.6" ry="2.7" fill="#102008" fill-opacity="0.12" transform="rotate(179 429.3 290.6)"/><ellipse cx="556.6" cy="266.0" rx="1.5" ry="2.6" fill="#8ad060" fill-opacity="0.16" transform="rotate(30 556.6 266.0)"/><ellipse cx="548.8" cy="144.2" rx="5.2" ry="3.7" fill="#102008" fill-opacity="0.23" transform="rotate(147 548.8 144.2)"/><ellipse cx="760.0" cy="80.3" rx="5.4" ry="3.9" fill="#8ad060" fill-opacity="0.16" transform="rotate(135 760.0 80.3)"/><ellipse cx="788.4" cy="105.8" rx="2.6" ry="1.3" fill="#102008" fill-opacity="0.14" transform="rotate(79 788.4 105.8)"/><ellipse cx="492.0" cy="343.4" rx="1.6" ry="1.3" fill="#102008" fill-opacity="0.15" transform="rotate(4 492.0 343.4)"/><ellipse cx="806.0" cy="280.6" rx="3.6" ry="1.7" fill="#8ad060" fill-opacity="0.14" transform="rotate(24 806.0 280.6)"/><ellipse cx="741.6" cy="74.7" rx="2.1" ry="2.5" fill="#102008" fill-opacity="0.16" transform="rotate(31 741.6 74.7)"/><ellipse cx="423.0" cy="366.8" rx="3.9" ry="1.7" fill="#8ad060" fill-opacity="0.18" transform="rotate(118 423.0 366.8)"/><ellipse cx="757.4" cy="116.2" rx="5.2" ry="3.8" fill="#8ad060" fill-opacity="0.15" transform="rotate(154 757.4 116.2)"/><ellipse cx="639.2" cy="196.7" rx="5.7" ry="3.3" fill="#8ad060" fill-opacity="0.13" transform="rotate(85 639.2 196.7)"/><ellipse cx="740.8" cy="352.4" rx="4.0" ry="4.0" fill="#8ad060" fill-opacity="0.15" transform="rotate(143 740.8 352.4)"/><ellipse cx="386.7" cy="239.0" rx="5.8" ry="3.8" fill="#8ad060" fill-opacity="0.15" transform="rotate(161 386.7 239.0)"/><ellipse cx="364.2" cy="96.9" rx="2.3" ry="2.0" fill="#8ad060" fill-opacity="0.18" transform="rotate(57 364.2 96.9)"/><ellipse cx="432.6" cy="396.5" rx="5.0" ry="3.8" fill="#102008" fill-opacity="0.23" transform="rotate(10 432.6 396.5)"/><ellipse cx="376.4" cy="282.3" rx="2.7" ry="3.0" fill="#8ad060" fill-opacity="0.17" transform="rotate(9 376.4 282.3)"/><ellipse cx="690.4" cy="146.2" rx="3.8" ry="2.3" fill="#102008" fill-opacity="0.16" transform="rotate(78 690.4 146.2)"/><ellipse cx="543.9" cy="117.1" rx="1.8" ry="3.9" fill="#102008" fill-opacity="0.24" transform="rotate(21 543.9 117.1)"/><ellipse cx="607.5" cy="244.8" rx="2.2" ry="1.4" fill="#8ad060" fill-opacity="0.14" transform="rotate(104 607.5 244.8)"/><ellipse cx="666.9" cy="154.4" rx="4.8" ry="3.2" fill="#8ad060" fill-opacity="0.15" transform="rotate(177 666.9 154.4)"/><ellipse cx="663.0" cy="285.3" rx="2.4" ry="3.1" fill="#8ad060" fill-opacity="0.17" transform="rotate(156 663.0 285.3)"/><ellipse cx="613.7" cy="343.9" rx="1.6" ry="2.0" fill="#8ad060" fill-opacity="0.17" transform="rotate(149 613.7 343.9)"/><ellipse cx="570.1" cy="380.6" rx="2.2" ry="3.9" fill="#8ad060" fill-opacity="0.14" transform="rotate(69 570.1 380.6)"/><ellipse cx="510.4" cy="402.7" rx="2.8" ry="3.3" fill="#8ad060" fill-opacity="0.11" transform="rotate(89 510.4 402.7)"/><ellipse cx="593.4" cy="80.6" rx="3.2" ry="2.3" fill="#102008" fill-opacity="0.13" transform="rotate(57 593.4 80.6)"/><ellipse cx="887.3" cy="294.8" rx="5.7" ry="2.3" fill="#102008" fill-opacity="0.14" transform="rotate(51 887.3 294.8)"/><ellipse cx="687.7" cy="354.8" rx="5.2" ry="2.6" fill="#102008" fill-opacity="0.22" transform="rotate(121 687.7 354.8)"/><ellipse cx="501.7" cy="278.5" rx="4.3" ry="3.1" fill="#8ad060" fill-opacity="0.11" transform="rotate(105 501.7 278.5)"/><ellipse cx="767.6" cy="262.9" rx="3.7" ry="3.9" fill="#102008" fill-opacity="0.17" transform="rotate(71 767.6 262.9)"/><ellipse cx="824.9" cy="270.4" rx="3.2" ry="2.4" fill="#8ad060" fill-opacity="0.19" transform="rotate(74 824.9 270.4)"/><ellipse cx="546.8" cy="242.1" rx="4.2" ry="2.9" fill="#8ad060" fill-opacity="0.19" transform="rotate(127 546.8 242.1)"/><ellipse cx="561.7" cy="163.4" rx="3.9" ry="3.4" fill="#8ad060" fill-opacity="0.15" transform="rotate(59 561.7 163.4)"/><ellipse cx="405.0" cy="379.2" rx="3.0" ry="3.5" fill="#102008" fill-opacity="0.24" transform="rotate(52 405.0 379.2)"/><ellipse cx="878.1" cy="369.2" rx="5.8" ry="1.1" fill="#8ad060" fill-opacity="0.21" transform="rotate(76 878.1 369.2)"/><ellipse cx="850.4" cy="328.2" rx="3.9" ry="4.0" fill="#102008" fill-opacity="0.19" transform="rotate(175 850.4 328.2)"/><ellipse cx="588.1" cy="220.6" rx="1.7" ry="3.0" fill="#8ad060" fill-opacity="0.10" transform="rotate(17 588.1 220.6)"/><ellipse cx="639.0" cy="93.4" rx="3.2" ry="2.2" fill="#102008" fill-opacity="0.19" transform="rotate(48 639.0 93.4)"/><ellipse cx="874.0" cy="228.4" rx="3.5" ry="2.9" fill="#102008" fill-opacity="0.16" transform="rotate(135 874.0 228.4)"/><ellipse cx="757.4" cy="91.1" rx="3.1" ry="2.1" fill="#8ad060" fill-opacity="0.14" transform="rotate(44 757.4 91.1)"/><ellipse cx="417.1" cy="370.3" rx="4.6" ry="3.5" fill="#102008" fill-opacity="0.24" transform="rotate(107 417.1 370.3)"/><ellipse cx="695.6" cy="241.4" rx="5.2" ry="1.6" fill="#102008" fill-opacity="0.17" transform="rotate(15 695.6 241.4)"/><ellipse cx="695.1" cy="268.9" rx="3.1" ry="4.0" fill="#102008" fill-opacity="0.13" transform="rotate(105 695.1 268.9)"/><ellipse cx="363.7" cy="60.0" rx="4.7" ry="2.7" fill="#102008" fill-opacity="0.17" transform="rotate(25 363.7 60.0)"/><ellipse cx="671.6" cy="291.5" rx="2.4" ry="2.5" fill="#102008" fill-opacity="0.15" transform="rotate(165 671.6 291.5)"/><ellipse cx="837.1" cy="238.0" rx="2.1" ry="1.6" fill="#102008" fill-opacity="0.14" transform="rotate(132 837.1 238.0)"/><ellipse cx="764.3" cy="96.1" rx="2.0" ry="1.5" fill="#102008" fill-opacity="0.23" transform="rotate(156 764.3 96.1)"/><ellipse cx="588.4" cy="337.5" rx="4.4" ry="3.1" fill="#102008" fill-opacity="0.14" transform="rotate(60 588.4 337.5)"/><ellipse cx="547.3" cy="118.0" rx="2.7" ry="1.3" fill="#102008" fill-opacity="0.20" transform="rotate(89 547.3 118.0)"/><ellipse cx="460.5" cy="276.2" rx="1.6" ry="1.7" fill="#8ad060" fill-opacity="0.19" transform="rotate(11 460.5 276.2)"/><ellipse cx="593.2" cy="274.8" rx="2.6" ry="1.1" fill="#102008" fill-opacity="0.23" transform="rotate(80 593.2 274.8)"/><ellipse cx="361.3" cy="360.7" rx="3.5" ry="2.3" fill="#8ad060" fill-opacity="0.21" transform="rotate(17 361.3 360.7)"/><ellipse cx="488.0" cy="194.6" rx="4.7" ry="1.7" fill="#8ad060" fill-opacity="0.21" transform="rotate(124 488.0 194.6)"/><ellipse cx="370.0" cy="361.1" rx="1.9" ry="1.5" fill="#8ad060" fill-opacity="0.10" transform="rotate(74 370.0 361.1)"/><ellipse cx="569.9" cy="185.3" rx="3.0" ry="3.6" fill="#8ad060" fill-opacity="0.18" transform="rotate(31 569.9 185.3)"/><ellipse cx="583.9" cy="376.7" rx="4.0" ry="2.2" fill="#8ad060" fill-opacity="0.14" transform="rotate(111 583.9 376.7)"/><ellipse cx="376.7" cy="290.2" rx="3.0" ry="1.5" fill="#102008" fill-opacity="0.13" transform="rotate(69 376.7 290.2)"/><ellipse cx="649.5" cy="333.0" rx="4.0" ry="2.4" fill="#102008" fill-opacity="0.15" transform="rotate(94 649.5 333.0)"/><ellipse cx="546.8" cy="310.4" rx="3.2" ry="3.9" fill="#8ad060" fill-opacity="0.21" transform="rotate(129 546.8 310.4)"/><ellipse cx="467.4" cy="357.7" rx="4.5" ry="3.8" fill="#102008" fill-opacity="0.20" transform="rotate(112 467.4 357.7)"/><ellipse cx="672.3" cy="187.1" rx="2.6" ry="2.8" fill="#8ad060" fill-opacity="0.20" transform="rotate(31 672.3 187.1)"/><ellipse cx="720.7" cy="90.8" rx="5.3" ry="3.2" fill="#102008" fill-opacity="0.12" transform="rotate(145 720.7 90.8)"/><ellipse cx="435.6" cy="64.2" rx="4.7" ry="3.1" fill="#102008" fill-opacity="0.15" transform="rotate(48 435.6 64.2)"/><ellipse cx="712.6" cy="96.9" rx="4.0" ry="2.1" fill="#102008" fill-opacity="0.16" transform="rotate(16 712.6 96.9)"/><ellipse cx="742.5" cy="89.6" rx="2.8" ry="3.5" fill="#8ad060" fill-opacity="0.14" transform="rotate(118 742.5 89.6)"/><ellipse cx="772.6" cy="366.2" rx="5.4" ry="1.4" fill="#8ad060" fill-opacity="0.10" transform="rotate(173 772.6 366.2)"/><ellipse cx="785.7" cy="299.5" rx="5.5" ry="1.1" fill="#102008" fill-opacity="0.18" transform="rotate(102 785.7 299.5)"/><ellipse cx="546.4" cy="277.8" rx="2.3" ry="1.3" fill="#102008" fill-opacity="0.22" transform="rotate(173 546.4 277.8)"/><ellipse cx="379.6" cy="72.9" rx="2.2" ry="1.6" fill="#8ad060" fill-opacity="0.15" transform="rotate(10 379.6 72.9)"/><ellipse cx="653.5" cy="278.1" rx="5.7" ry="2.7" fill="#8ad060" fill-opacity="0.16" transform="rotate(133 653.5 278.1)"/><ellipse cx="494.3" cy="210.4" rx="4.6" ry="2.0" fill="#8ad060" fill-opacity="0.20" transform="rotate(167 494.3 210.4)"/><ellipse cx="511.2" cy="74.0" rx="5.3" ry="2.8" fill="#8ad060" fill-opacity="0.13" transform="rotate(28 511.2 74.0)"/><ellipse cx="377.9" cy="169.9" rx="5.0" ry="2.0" fill="#102008" fill-opacity="0.17" transform="rotate(100 377.9 169.9)"/><ellipse cx="892.0" cy="273.1" rx="2.5" ry="2.6" fill="#8ad060" fill-opacity="0.21" transform="rotate(113 892.0 273.1)"/><ellipse cx="855.7" cy="299.7" rx="4.8" ry="3.5" fill="#102008" fill-opacity="0.18" transform="rotate(13 855.7 299.7)"/><ellipse cx="720.0" cy="130.7" rx="4.5" ry="3.5" fill="#102008" fill-opacity="0.18" transform="rotate(48 720.0 130.7)"/><ellipse cx="381.4" cy="303.6" rx="5.1" ry="1.8" fill="#102008" fill-opacity="0.25" transform="rotate(163 381.4 303.6)"/><ellipse cx="484.3" cy="149.6" rx="5.8" ry="1.5" fill="#8ad060" fill-opacity="0.11" transform="rotate(162 484.3 149.6)"/><ellipse cx="524.1" cy="106.5" rx="4.7" ry="3.0" fill="#8ad060" fill-opacity="0.13" transform="rotate(131 524.1 106.5)"/><ellipse cx="728.0" cy="105.3" rx="4.4" ry="3.1" fill="#8ad060" fill-opacity="0.18" transform="rotate(150 728.0 105.3)"/><ellipse cx="659.3" cy="175.1" rx="5.2" ry="2.6" fill="#102008" fill-opacity="0.14" transform="rotate(170 659.3 175.1)"/><ellipse cx="440.8" cy="399.8" rx="5.3" ry="2.2" fill="#8ad060" fill-opacity="0.18" transform="rotate(3 440.8 399.8)"/><ellipse cx="550.9" cy="130.8" rx="1.8" ry="1.8" fill="#8ad060" fill-opacity="0.18" transform="rotate(114 550.9 130.8)"/><ellipse cx="873.1" cy="115.1" rx="3.5" ry="2.7" fill="#8ad060" fill-opacity="0.17" transform="rotate(11 873.1 115.1)"/><ellipse cx="363.8" cy="404.3" rx="4.9" ry="1.3" fill="#102008" fill-opacity="0.25" transform="rotate(144 363.8 404.3)"/><ellipse cx="499.5" cy="283.5" rx="5.8" ry="2.5" fill="#102008" fill-opacity="0.16" transform="rotate(91 499.5 283.5)"/><ellipse cx="850.0" cy="283.3" rx="4.3" ry="3.8" fill="#102008" fill-opacity="0.15" transform="rotate(62 850.0 283.3)"/><ellipse cx="399.8" cy="319.1" rx="1.6" ry="2.2" fill="#8ad060" fill-opacity="0.14" transform="rotate(163 399.8 319.1)"/><ellipse cx="639.1" cy="370.7" rx="4.6" ry="1.3" fill="#102008" fill-opacity="0.16" transform="rotate(157 639.1 370.7)"/><ellipse cx="532.8" cy="123.2" rx="5.2" ry="2.0" fill="#8ad060" fill-opacity="0.17" transform="rotate(94 532.8 123.2)"/><ellipse cx="806.2" cy="147.2" rx="1.8" ry="1.3" fill="#102008" fill-opacity="0.24" transform="rotate(180 806.2 147.2)"/><ellipse cx="573.7" cy="76.6" rx="2.5" ry="2.3" fill="#102008" fill-opacity="0.25" transform="rotate(154 573.7 76.6)"/><ellipse cx="668.9" cy="86.9" rx="4.6" ry="1.5" fill="#8ad060" fill-opacity="0.22" transform="rotate(22 668.9 86.9)"/><ellipse cx="881.8" cy="355.0" rx="3.7" ry="1.7" fill="#8ad060" fill-opacity="0.10" transform="rotate(156 881.8 355.0)"/><ellipse cx="815.6" cy="332.8" rx="3.4" ry="1.8" fill="#102008" fill-opacity="0.19" transform="rotate(107 815.6 332.8)"/><ellipse cx="834.5" cy="80.8" rx="1.5" ry="3.9" fill="#8ad060" fill-opacity="0.19" transform="rotate(96 834.5 80.8)"/><ellipse cx="516.2" cy="213.2" rx="4.0" ry="2.0" fill="#8ad060" fill-opacity="0.11" transform="rotate(82 516.2 213.2)"/><ellipse cx="634.5" cy="208.1" rx="3.9" ry="2.9" fill="#8ad060" fill-opacity="0.15" transform="rotate(155 634.5 208.1)"/><ellipse cx="689.6" cy="341.3" rx="1.8" ry="3.0" fill="#102008" fill-opacity="0.16" transform="rotate(146 689.6 341.3)"/><ellipse cx="583.3" cy="187.3" rx="4.5" ry="1.4" fill="#102008" fill-opacity="0.19" transform="rotate(162 583.3 187.3)"/><ellipse cx="372.9" cy="124.7" rx="4.6" ry="2.3" fill="#8ad060" fill-opacity="0.18" transform="rotate(95 372.9 124.7)"/><ellipse cx="654.9" cy="387.2" rx="3.1" ry="1.7" fill="#8ad060" fill-opacity="0.13" transform="rotate(58 654.9 387.2)"/><ellipse cx="454.6" cy="368.7" rx="4.0" ry="1.3" fill="#102008" fill-opacity="0.15" transform="rotate(24 454.6 368.7)"/><ellipse cx="458.3" cy="292.2" rx="4.7" ry="1.7" fill="#8ad060" fill-opacity="0.16" transform="rotate(178 458.3 292.2)"/><ellipse cx="418.5" cy="237.6" rx="4.1" ry="1.2" fill="#8ad060" fill-opacity="0.11" transform="rotate(112 418.5 237.6)"/><ellipse cx="429.8" cy="234.1" rx="3.8" ry="3.5" fill="#102008" fill-opacity="0.20" transform="rotate(131 429.8 234.1)"/><ellipse cx="412.6" cy="347.9" rx="3.3" ry="1.5" fill="#102008" fill-opacity="0.19" transform="rotate(23 412.6 347.9)"/><ellipse cx="431.2" cy="329.1" rx="1.8" ry="1.7" fill="#8ad060" fill-opacity="0.10" transform="rotate(152 431.2 329.1)"/><ellipse cx="869.3" cy="219.0" rx="2.0" ry="1.4" fill="#102008" fill-opacity="0.13" transform="rotate(51 869.3 219.0)"/><ellipse cx="659.2" cy="378.3" rx="5.4" ry="1.5" fill="#102008" fill-opacity="0.16" transform="rotate(174 659.2 378.3)"/><ellipse cx="364.2" cy="148.0" rx="2.6" ry="2.5" fill="#102008" fill-opacity="0.17" transform="rotate(125 364.2 148.0)"/><ellipse cx="381.3" cy="269.1" rx="1.9" ry="2.6" fill="#102008" fill-opacity="0.13" transform="rotate(172 381.3 269.1)"/><ellipse cx="487.7" cy="182.3" rx="4.6" ry="1.1" fill="#102008" fill-opacity="0.18" transform="rotate(5 487.7 182.3)"/><ellipse cx="619.1" cy="84.7" rx="2.7" ry="1.5" fill="#102008" fill-opacity="0.23" transform="rotate(171 619.1 84.7)"/><ellipse cx="561.7" cy="109.2" rx="5.4" ry="2.6" fill="#102008" fill-opacity="0.23" transform="rotate(113 561.7 109.2)"/><ellipse cx="365.4" cy="178.1" rx="2.2" ry="2.5" fill="#102008" fill-opacity="0.22" transform="rotate(9 365.4 178.1)"/><ellipse cx="397.9" cy="274.9" rx="4.4" ry="2.8" fill="#102008" fill-opacity="0.25" transform="rotate(177 397.9 274.9)"/><ellipse cx="810.1" cy="195.9" rx="5.4" ry="2.8" fill="#8ad060" fill-opacity="0.14" transform="rotate(55 810.1 195.9)"/><ellipse cx="524.5" cy="104.6" rx="4.3" ry="1.6" fill="#102008" fill-opacity="0.21" transform="rotate(84 524.5 104.6)"/><ellipse cx="666.7" cy="194.0" rx="3.1" ry="1.0" fill="#102008" fill-opacity="0.16" transform="rotate(5 666.7 194.0)"/><ellipse cx="491.1" cy="363.9" rx="4.2" ry="2.9" fill="#102008" fill-opacity="0.14" transform="rotate(98 491.1 363.9)"/><ellipse cx="504.2" cy="233.0" rx="2.7" ry="2.7" fill="#102008" fill-opacity="0.24" transform="rotate(178 504.2 233.0)"/><ellipse cx="376.2" cy="254.1" rx="5.0" ry="3.6" fill="#102008" fill-opacity="0.20" transform="rotate(162 376.2 254.1)"/><ellipse cx="411.0" cy="334.6" rx="5.1" ry="1.7" fill="#102008" fill-opacity="0.14" transform="rotate(18 411.0 334.6)"/><ellipse cx="520.6" cy="324.6" rx="4.8" ry="2.5" fill="#102008" fill-opacity="0.17" transform="rotate(140 520.6 324.6)"/><ellipse cx="740.9" cy="175.4" rx="4.7" ry="3.0" fill="#102008" fill-opacity="0.22" transform="rotate(128 740.9 175.4)"/><ellipse cx="554.5" cy="143.7" rx="2.6" ry="2.0" fill="#8ad060" fill-opacity="0.10" transform="rotate(171 554.5 143.7)"/><ellipse cx="600.4" cy="214.0" rx="4.1" ry="1.9" fill="#8ad060" fill-opacity="0.11" transform="rotate(77 600.4 214.0)"/><ellipse cx="743.1" cy="146.7" rx="4.1" ry="3.0" fill="#102008" fill-opacity="0.13" transform="rotate(48 743.1 146.7)"/><ellipse cx="670.1" cy="86.9" rx="2.3" ry="2.7" fill="#102008" fill-opacity="0.17" transform="rotate(176 670.1 86.9)"/><ellipse cx="587.1" cy="361.2" rx="1.8" ry="2.5" fill="#102008" fill-opacity="0.16" transform="rotate(65 587.1 361.2)"/><ellipse cx="650.4" cy="323.0" rx="4.3" ry="1.7" fill="#8ad060" fill-opacity="0.11" transform="rotate(114 650.4 323.0)"/><ellipse cx="465.2" cy="268.8" rx="5.4" ry="2.9" fill="#8ad060" fill-opacity="0.19" transform="rotate(33 465.2 268.8)"/><ellipse cx="679.5" cy="86.6" rx="5.1" ry="3.6" fill="#8ad060" fill-opacity="0.12" transform="rotate(48 679.5 86.6)"/><ellipse cx="502.8" cy="282.6" rx="1.6" ry="2.0" fill="#8ad060" fill-opacity="0.14" transform="rotate(6 502.8 282.6)"/><ellipse cx="705.2" cy="200.1" rx="4.6" ry="2.0" fill="#8ad060" fill-opacity="0.15" transform="rotate(11 705.2 200.1)"/><ellipse cx="404.7" cy="272.3" rx="5.0" ry="4.0" fill="#8ad060" fill-opacity="0.21" transform="rotate(3 404.7 272.3)"/><ellipse cx="371.8" cy="169.3" rx="4.4" ry="1.9" fill="#8ad060" fill-opacity="0.19" transform="rotate(84 371.8 169.3)"/></g>
<path d="M358 77 L437 77 L437 59 L515 59 L515 77 L690 77 L690 116 L710 116 L710 135.5 L728.5 135.5 L728.5 155.2 L865.5 155.2 L865.5 174.7 L893 174.7 L893 270.5 L827 270.5 L827 252 L690 252 L690 407 L358 407Z" fill="url(#spG)"/>
<path d="M371 80 L437 80 L437 59 L515 59 L515 80 L690 80 L690 92 L640 90 L622 100 L614 120 L612 150 L604 170 L600 180 L575 178 L560 176 L530 174 L510 177 L496 182 L484 184 L470 175 L456 165 L440 163 L420 160 L410 166 L395 172 L371 172Z" fill="url(#spO)"/>
<path d="M358 77 L437 77 L437 59 L515 59 L515 77 L690 77 L690 116 L710 116 L710 135.5 L728.5 135.5 L728.5 155.2 L865.5 155.2 L865.5 174.7 L893 174.7 L893 270.5 L827 270.5 L827 252 L690 252 L690 407 L358 407Z" fill="url(#dots)"/>
<path d="M371.0 174.0 C375.8 156.7 391.0 174.3 400.0 172.0 C409.0 169.7 417.0 161.7 425.0 160.0 C433.0 158.3 443.5 170.3 448.0 162.0 C452.5 153.7 448.3 119.7 452.0 110.0 C455.7 100.3 464.0 97.3 470.0 104.0 C476.0 110.7 484.7 136.7 488.0 150.0 C491.3 163.3 486.3 179.3 490.0 184.0 C493.7 188.7 498.3 179.3 510.0 178.0 C521.7 176.7 549.2 172.3 560.0 176.0 C570.8 179.7 574.2 190.0 575.0 200.0 C575.8 210.0 574.2 227.7 565.0 236.0 C555.8 244.3 535.8 245.7 520.0 250.0 C504.2 254.3 485.0 258.3 470.0 262.0 C455.0 265.7 443.3 269.7 430.0 272.0 C416.7 274.3 399.8 275.3 390.0 276.0 C380.2 276.7 374.2 293.0 371.0 276.0 C367.8 259.0 366.2 191.3 371.0 174.0Z" fill="url(#strp)"/>
<path d="M690 116 L710 116 L710 135.5 L728.5 135.5 L728.5 155.2 L865.5 155.2 L865.5 174.7 L893 174.7 L893 270.5 L827 270.5 L827 252 L690 252Z" fill="url(#strp)"/>
<path d="M668.0 158.0 C672.3 148.5 684.3 139.3 690.0 148.0 C695.7 156.7 706.3 200.5 702.0 210.0 C697.7 219.5 669.7 213.7 664.0 205.0 C658.3 196.3 663.7 167.5 668.0 158.0Z" fill="url(#strp)"/>
<rect x="358" y="77" width="13" height="330" fill="url(#strp)" fill-opacity="0.5"/>
</g>
<path d="M632 58 L638 81 L646 140 L647 215 L620 340 L596 407" fill="none" stroke="#d0d0c8" stroke-width="0.9" stroke-opacity="0.75"/>
<g fill="none" stroke="#ee1a1a" stroke-width="2.4" stroke-linecap="round" stroke-linejoin="round"><path d="M567 211 C565 218 564 226 564.5 232"/><path d="M560 221.3 C571 221 582 221 591.6 221.3"/><path d="M587.5 205.6 C584 212 579 222 576.5 227.4 C581 229.5 586 229.5 589 228.5 C593 226 594 221 591 218 C587 216 583 218 580.6 220"/><path d="M601 233 C601.5 228 602.5 224 604 222 C605.5 223 606 225 606.6 226 C607.5 228 608.5 229 609.3 228.8 C612 228 614 227 616 227.4 C619 228 621 230 623 231.5"/><path d="M623 231.5 C627 231 631 230 634 228.8 C638 227 642 225 642 222.5 C641 220 637 220 634 221 C629 222.5 624 228 623 234.3 C623 239 625 242 628.5 243.9 C634 246 640 246.5 646.3 246.6"/><path d="M523.2 236.3 C532 246 541 256 550.5 265.7"/><path d="M550.5 233 C545 234 541 236 538 238.4 C533 244 529 252 526 259.6"/></g>
<g stroke="#000" stroke-width="1" stroke-dasharray="1.2 1.3" stroke-opacity="0.7"><line x1="179.5" y1="59" x2="179.5" y2="407"/><line x1="209.5" y1="59" x2="209.5" y2="407"/><line x1="240.5" y1="59" x2="240.5" y2="407"/><line x1="270.5" y1="59" x2="270.5" y2="407"/><line x1="301.5" y1="59" x2="301.5" y2="407"/><line x1="331.5" y1="59" x2="331.5" y2="407"/><line x1="362.5" y1="59" x2="362.5" y2="407"/><line x1="392.5" y1="59" x2="392.5" y2="407"/><line x1="422.5" y1="59" x2="422.5" y2="407"/><line x1="453.5" y1="59" x2="453.5" y2="407"/><line x1="483.5" y1="59" x2="483.5" y2="407"/><line x1="514.5" y1="59" x2="514.5" y2="407"/><line x1="544.5" y1="59" x2="544.5" y2="407"/><line x1="575.5" y1="59" x2="575.5" y2="407"/><line x1="605.5" y1="59" x2="605.5" y2="407"/><line x1="636.5" y1="59" x2="636.5" y2="407"/><line x1="666.5" y1="59" x2="666.5" y2="407"/><line x1="697.5" y1="59" x2="697.5" y2="407"/><line x1="727.5" y1="59" x2="727.5" y2="407"/><line x1="758.5" y1="59" x2="758.5" y2="407"/><line x1="788.5" y1="59" x2="788.5" y2="407"/><line x1="819.5" y1="59" x2="819.5" y2="407"/><line x1="849.5" y1="59" x2="849.5" y2="407"/><line x1="880.5" y1="59" x2="880.5" y2="407"/><line x1="139" y1="85.5" x2="893" y2="85.5"/><line x1="139" y1="116.5" x2="893" y2="116.5"/><line x1="139" y1="146.5" x2="893" y2="146.5"/><line x1="139" y1="176.5" x2="893" y2="176.5"/><line x1="139" y1="207.5" x2="893" y2="207.5"/><line x1="139" y1="238.5" x2="893" y2="238.5"/><line x1="139" y1="268.5" x2="893" y2="268.5"/><line x1="139" y1="298.5" x2="893" y2="298.5"/><line x1="139" y1="329.5" x2="893" y2="329.5"/><line x1="139" y1="360.5" x2="893" y2="360.5"/><line x1="139" y1="390.5" x2="893" y2="390.5"/></g>
<circle cx="139.2" cy="181.9" r="196.5" fill="none" stroke="#c8c8c8" stroke-width="1"/>
<circle cx="139.2" cy="181.9" r="196.5" fill="none" stroke="#333" stroke-width="1" stroke-dasharray="14 9"/>
<circle cx="139.7" cy="182.8" r="29" fill="none" stroke="#c8c8c8" stroke-width="1"/>
<circle cx="139.7" cy="182.8" r="29" fill="none" stroke="#333" stroke-width="1" stroke-dasharray="9 5"/>
<!-- north arrow -->
<path d="M148 378.5 L159.7 357 L159.7 372 Z" fill="#000"/>
<path d="M159.7 357 L170 378.5 L159.7 372 Z" fill="#fff" stroke="#000" stroke-width="1"/>
<text x="175" y="378.2" font-family="Liberation Serif" font-size="30.5" fill="#000" transform="translate(175 378.2) scale(0.82 1) translate(-175 -378.2)">N</text>
<!-- scale bar -->
<rect x="147" y="387" width="77.5" height="5.5" fill="#000"/>
<g fill="#fff"><rect x="148" y="388" width="7.6" height="3.6"/><rect x="163.2" y="388" width="7.6" height="3.6"/><rect x="178.4" y="388" width="7.6" height="3.6"/><rect x="193.8" y="388" width="7.6" height="3.6"/><rect x="209" y="388" width="7.6" height="3.6"/></g>
<!-- compass small -->
<path d="M152.3 69.5 L154.3 73.5 H152.9 V76 H151.7 V73.5 H150.3 Z" fill="#000"/><path d="M158.5 69.5 C160 71 160.6 72 160.3 73 C160 73.8 159.3 73.8 159.1 73.5 V76 H157.9 V73.5 C157.7 73.8 157 73.8 156.7 73 C156.4 72 157 71 158.5 69.5Z" fill="#000"/><ellipse cx="155.8" cy="78.5" rx="1.8" ry="1" fill="#000"/>
</svg>
<div class="a rl" style="left:40px;top:2.5px">-2200</div>
<div class="a rl" style="left:70px;top:2.5px">-2000</div>
<div class="a rl" style="left:101px;top:2.5px">-1800</div>
<div class="a rl" style="left:131px;top:2.5px">-1600</div>
<div class="a rl" style="left:162px;top:2.5px">-1400</div>
<div class="a rl" style="left:192px;top:2.5px">-1200</div>
<div class="a rl" style="left:223px;top:2.5px">-1000</div>
<div class="a rl" style="left:253px;top:2.5px">-800</div>
<div class="a rl" style="left:283px;top:2.5px">-600</div>
<div class="a rl" style="left:314px;top:2.5px">-400</div>
<div class="a rl" style="left:344px;top:2.5px">-200</div>
<div class="a rl" style="left:375px;top:2.5px">0</div>
<div class="a rl" style="left:405px;top:2.5px">200</div>
<div class="a rl" style="left:436px;top:2.5px">400</div>
<div class="a rl" style="left:466px;top:2.5px">600</div>
<div class="a rl" style="left:497px;top:2.5px">800</div>
<div class="a rl" style="left:527px;top:2.5px">1000</div>
<div class="a rl" style="left:558px;top:2.5px">1200</div>
<div class="a rl" style="left:588px;top:2.5px">1400</div>
<div class="a rl" style="left:619px;top:2.5px">1600</div>
<div class="a rl" style="left:649px;top:2.5px">1800</div>
<div class="a rl" style="left:680px;top:2.5px">2000</div>
<div class="a rl" style="left:710px;top:2.5px">2200</div>
<div class="a rl" style="left:741px;top:2.5px">2400</div>
<div class="a rl" style="left:1.5px;top:18.5px">3000</div>
<div class="a rl" style="left:1.5px;top:48.5px">3200</div>
<div class="a rl" style="left:1.5px;top:78.5px">3400</div>
<div class="a rl" style="left:1.5px;top:109.5px">3600</div>
<div class="a rl" style="left:1.5px;top:140.5px">3800</div>
<div class="a rl" style="left:1.5px;top:170.5px">4000</div>
<div class="a rl" style="left:1.5px;top:200.5px">4200</div>
<div class="a rl" style="left:1.5px;top:231.5px">4400</div>
<div class="a rl" style="left:1.5px;top:262.5px">4600</div>
<div class="a rl" style="left:1.5px;top:292.5px">4800</div>
<div class="a rl" style="left:1.5px;top:322.5px">5000</div>
<div class="a rl" style="left:89px;top:325px;font-size:7.6px">500 blocks</div>
</div>
<!-- vertical scrollbar -->
<div class="a" style="left:893px;top:59px;width:12px;height:348px;background:#f0f0f0"></div>
<div class="a" style="left:894px;top:256px;width:10px;height:137px;background:#cdcdcd"></div>
<svg class="a" style="left:893px;top:59px" width="12" height="348" viewBox="0 0 12 348"><path d="M3 8l3-3 3 3" fill="none" stroke="#555" stroke-width="1.2"/><path d="M3 339l3 3 3-3" fill="none" stroke="#555" stroke-width="1.2"/></svg>
<!-- horizontal scrollbar -->
<div class="a" style="left:139px;top:407px;width:754px;height:13px;background:#f0f0f0"></div>
<div class="a" style="left:151px;top:408px;width:350px;height:11px;background:#cdcdcd"></div>
<svg class="a" style="left:139px;top:407px" width="754" height="13" viewBox="0 0 754 13"><path d="M9 3.5l-3 3 3 3" fill="none" stroke="#555" stroke-width="1.2"/><path d="M745 3.5l3 3-3 3" fill="none" stroke="#555" stroke-width="1.2"/></svg>
<div class="a" style="left:905px;top:59px;width:5px;height:361px;background:#fff"></div>
<div class="a" style="left:893px;top:407px;width:12px;height:13px;background:#f0f0f0"></div>

<div class="a" style="left:910px;top:57px;width:114px;height:363px;background:#fff"></div>
<div class="a" style="left:925px;top:58px;width:99px;height:298px;background:#f0f0f0;border-left:1px solid #d4d4d4"></div>
<div class="a" style="left:928px;top:61px;width:96px;height:13px;background:linear-gradient(#f8f8f8,#e6e6e6)"></div>
<div class="a" style="left:933px;top:63px;font-size:8.6px;color:#4a3a55;white-space:nowrap">Brushes</div>
<svg class="a" style="left:986px;top:62px" width="30" height="11" viewBox="0 0 30 11"><rect x="2.5" y="4.5" width="6" height="5" fill="none" stroke="#333"/><path d="M4.5 4.5v-2h6v5h-2" fill="none" stroke="#333"/><path d="M18 1.5h4M18.5 1.5v4h3v-4M17 5.5h6M20 5.5v4" stroke="#333" fill="none"/></svg>
<svg class="a" style="left:0;top:0" width="1024" height="230" viewBox="0 0 1024 230"><defs><radialGradient id="rg1"><stop offset="0" stop-color="#000"/><stop offset="0.25" stop-color="#222"/><stop offset="1" stop-color="#e6e6e6" stop-opacity="0"/></radialGradient><radialGradient id="rg2"><stop offset="0" stop-color="#000"/><stop offset="0.6" stop-color="#000"/><stop offset="1" stop-color="#e6e6e6" stop-opacity="0"/></radialGradient><radialGradient id="rg3"><stop offset="0" stop-color="#000"/><stop offset="0.3" stop-color="#111"/><stop offset="1" stop-color="#000" stop-opacity="0"/></radialGradient></defs><rect x="930.5" y="77.5" width="27.5" height="27.5" fill="#e6e6e6" stroke="#d2d2d2"/><defs><radialGradient id="rg1" cx="0.5" cy="0.5" r="0.5"><stop offset="0.000" stop-color="rgb(0,0,0)"/><stop offset="0.100" stop-color="rgb(45,45,45)"/><stop offset="0.200" stop-color="rgb(74,74,74)"/><stop offset="0.300" stop-color="rgb(99,99,99)"/><stop offset="0.400" stop-color="rgb(121,121,121)"/><stop offset="0.500" stop-color="rgb(141,141,141)"/><stop offset="0.600" stop-color="rgb(160,160,160)"/><stop offset="0.700" stop-color="rgb(179,179,179)"/><stop offset="0.800" stop-color="rgb(196,196,196)"/><stop offset="0.900" stop-color="rgb(213,213,213)"/><stop offset="1.000" stop-color="rgb(230,230,230)"/></radialGradient></defs><circle cx="944.25" cy="91.25" r="8" fill="url(#rg1)"/><rect x="960.5" y="77.5" width="27.5" height="27.5" fill="#e6e6e6" stroke="#d2d2d2"/><defs><linearGradient id="pg2" x1="0" y1="1" x2="0" y2="0"><stop offset="0.000" stop-color="rgb(0,0,0)"/><stop offset="0.125" stop-color="rgb(15,15,15)"/><stop offset="0.250" stop-color="rgb(37,37,37)"/><stop offset="0.375" stop-color="rgb(64,64,64)"/><stop offset="0.500" stop-color="rgb(93,93,93)"/><stop offset="0.625" stop-color="rgb(124,124,124)"/><stop offset="0.750" stop-color="rgb(158,158,158)"/><stop offset="0.875" stop-color="rgb(193,193,193)"/><stop offset="1.000" stop-color="rgb(230,230,230)"/></linearGradient></defs><path d="M963.95 81.75L984.55 81.75L974.25 92.15Z" fill="url(#pg2)" transform="rotate(0 974.25 91.25)"/><path d="M963.95 81.75L984.55 81.75L974.25 92.15Z" fill="url(#pg2)" transform="rotate(90 974.25 91.25)"/><path d="M963.95 81.75L984.55 81.75L974.25 92.15Z" fill="url(#pg2)" transform="rotate(180 974.25 91.25)"/><path d="M963.95 81.75L984.55 81.75L974.25 92.15Z" fill="url(#pg2)" transform="rotate(270 974.25 91.25)"/><rect x="990.5" y="77.5" width="27.5" height="27.5" fill="#e6e6e6" stroke="#d2d2d2"/><defs><radialGradient id="rg3" cx="0.5" cy="0.5" r="0.5"><stop offset="0.000" stop-color="rgb(0,0,0)"/><stop offset="0.100" stop-color="rgb(28,28,28)"/><stop offset="0.200" stop-color="rgb(54,54,54)"/><stop offset="0.300" stop-color="rgb(77,77,77)"/><stop offset="0.400" stop-color="rgb(100,100,100)"/><stop offset="0.500" stop-color="rgb(123,123,123)"/><stop offset="0.600" stop-color="rgb(145,145,145)"/><stop offset="0.700" stop-color="rgb(166,166,166)"/><stop offset="0.800" stop-color="rgb(188,188,188)"/><stop offset="0.900" stop-color="rgb(209,209,209)"/><stop offset="1.000" stop-color="rgb(230,230,230)"/></radialGradient></defs><circle cx="1004.25" cy="91.25" r="8" fill="url(#rg3)"/><circle cx="1004.25" cy="91.25" r="8" fill="#e6e6e6" fill-opacity="0.55"/><rect x="1004.6" y="96.4" width="1.2" height="1.2" fill="#222" fill-opacity="0.6"/><rect x="1000.5" y="95.2" width="1.2" height="1.2" fill="#222" fill-opacity="0.6"/><rect x="1003.0" y="90.0" width="1.2" height="1.2" fill="#222" fill-opacity="0.6"/><rect x="1010.6" y="91.8" width="1.2" height="1.2" fill="#222" fill-opacity="0.6"/><rect x="1004.1" y="94.6" width="1.2" height="1.2" fill="#222" fill-opacity="0.6"/><rect x="1009.0" y="91.1" width="1.2" height="1.2" fill="#222" fill-opacity="0.6"/><rect x="1006.7" y="87.1" width="1.2" height="1.2" fill="#222" fill-opacity="0.6"/><rect x="1002.5" y="89.2" width="1.2" height="1.2" fill="#222" fill-opacity="0.6"/><rect x="999.9" y="86.4" width="1.2" height="1.2" fill="#222" fill-opacity="0.6"/><rect x="998.3" y="90.4" width="1.2" height="1.2" fill="#222" fill-opacity="0.6"/><rect x="1003.4" y="89.7" width="1.2" height="1.2" fill="#222" fill-opacity="0.6"/><rect x="1004.5" y="85.9" width="1.2" height="1.2" fill="#222" fill-opacity="0.6"/><rect x="1003.9" y="92.4" width="1.2" height="1.2" fill="#222" fill-opacity="0.6"/><rect x="1007.4" y="87.6" width="1.2" height="1.2" fill="#222" fill-opacity="0.6"/><rect x="1003.0" y="84.8" width="1.2" height="1.2" fill="#222" fill-opacity="0.6"/><rect x="1002.7" y="84.7" width="1.2" height="1.2" fill="#222" fill-opacity="0.6"/><rect x="999.3" y="95.1" width="1.2" height="1.2" fill="#222" fill-opacity="0.6"/><rect x="997.9" y="93.6" width="1.2" height="1.2" fill="#222" fill-opacity="0.6"/><rect x="1005.8" y="89.7" width="1.2" height="1.2" fill="#222" fill-opacity="0.6"/><rect x="1006.4" y="93.7" width="1.2" height="1.2" fill="#222" fill-opacity="0.6"/><rect x="1008.8" y="90.3" width="1.2" height="1.2" fill="#222" fill-opacity="0.6"/><rect x="1001.6" y="88.5" width="1.2" height="1.2" fill="#222" fill-opacity="0.6"/><rect x="999.9" y="91.1" width="1.2" height="1.2" fill="#222" fill-opacity="0.6"/><rect x="1001.1" y="95.6" width="1.2" height="1.2" fill="#222" fill-opacity="0.6"/><rect x="998.5" y="87.9" width="1.2" height="1.2" fill="#222" fill-opacity="0.6"/><rect x="1001.5" y="85.1" width="1.2" height="1.2" fill="#222" fill-opacity="0.6"/><rect x="1008.6" y="85.8" width="1.2" height="1.2" fill="#222" fill-opacity="0.6"/><rect x="1002.9" y="88.8" width="1.2" height="1.2" fill="#222" fill-opacity="0.6"/><rect x="1008.7" y="86.0" width="1.2" height="1.2" fill="#222" fill-opacity="0.6"/><rect x="1008.6" y="88.3" width="1.2" height="1.2" fill="#222" fill-opacity="0.6"/><rect x="1003.5" y="88.1" width="1.2" height="1.2" fill="#222" fill-opacity="0.6"/><rect x="1006.8" y="86.6" width="1.2" height="1.2" fill="#222" fill-opacity="0.6"/><rect x="1003.9" y="93.0" width="1.2" height="1.2" fill="#222" fill-opacity="0.6"/><rect x="1008.5" y="85.7" width="1.2" height="1.2" fill="#222" fill-opacity="0.6"/><rect x="1009.6" y="94.6" width="1.2" height="1.2" fill="#222" fill-opacity="0.6"/><rect x="1002.0" y="92.7" width="1.2" height="1.2" fill="#222" fill-opacity="0.6"/><rect x="1002.6" y="97.2" width="1.2" height="1.2" fill="#222" fill-opacity="0.6"/><rect x="1005.3" y="90.2" width="1.2" height="1.2" fill="#222" fill-opacity="0.6"/><rect x="1003.1" y="90.3" width="1.2" height="1.2" fill="#222" fill-opacity="0.6"/><rect x="1003.5" y="87.3" width="1.2" height="1.2" fill="#222" fill-opacity="0.6"/><rect x="1009.3" y="86.5" width="1.2" height="1.2" fill="#222" fill-opacity="0.6"/><rect x="997.3" y="91.0" width="1.2" height="1.2" fill="#222" fill-opacity="0.6"/><rect x="1003.5" y="93.1" width="1.2" height="1.2" fill="#222" fill-opacity="0.6"/><rect x="1003.2" y="90.5" width="1.2" height="1.2" fill="#222" fill-opacity="0.6"/><rect x="1005.7" y="95.5" width="1.2" height="1.2" fill="#222" fill-opacity="0.6"/><rect x="1002.1" y="89.5" width="1.2" height="1.2" fill="#222" fill-opacity="0.6"/><rect x="1010.5" y="93.0" width="1.2" height="1.2" fill="#222" fill-opacity="0.6"/><rect x="1001.6" y="97.6" width="1.2" height="1.2" fill="#222" fill-opacity="0.6"/><rect x="1007.7" y="88.6" width="1.2" height="1.2" fill="#222" fill-opacity="0.6"/><rect x="999.4" y="92.5" width="1.2" height="1.2" fill="#222" fill-opacity="0.6"/><rect x="1000.9" y="87.0" width="1.2" height="1.2" fill="#222" fill-opacity="0.6"/><rect x="999.1" y="89.2" width="1.2" height="1.2" fill="#222" fill-opacity="0.6"/><rect x="1008.9" y="89.4" width="1.2" height="1.2" fill="#222" fill-opacity="0.6"/><rect x="998.9" y="93.7" width="1.2" height="1.2" fill="#222" fill-opacity="0.6"/><rect x="1004.5" y="95.1" width="1.2" height="1.2" fill="#222" fill-opacity="0.6"/><rect x="1009.3" y="90.5" width="1.2" height="1.2" fill="#222" fill-opacity="0.6"/><rect x="1003.5" y="91.0" width="1.2" height="1.2" fill="#222" fill-opacity="0.6"/><rect x="999.7" y="94.0" width="1.2" height="1.2" fill="#222" fill-opacity="0.6"/><rect x="1009.7" y="91.9" width="1.2" height="1.2" fill="#222" fill-opacity="0.6"/><rect x="1003.1" y="90.0" width="1.2" height="1.2" fill="#222" fill-opacity="0.6"/><rect x="930.5" y="107.5" width="27.5" height="27.5" fill="#e6e6e6" stroke="#d2d2d2"/><defs><radialGradient id="rg4" cx="0.5" cy="0.5" r="0.5"><stop offset="0.000" stop-color="rgb(0,0,0)"/><stop offset="0.100" stop-color="rgb(18,18,18)"/><stop offset="0.200" stop-color="rgb(39,39,39)"/><stop offset="0.300" stop-color="rgb(61,61,61)"/><stop offset="0.400" stop-color="rgb(83,83,83)"/><stop offset="0.500" stop-color="rgb(107,107,107)"/><stop offset="0.600" stop-color="rgb(131,131,131)"/><stop offset="0.700" stop-color="rgb(155,155,155)"/><stop offset="0.800" stop-color="rgb(179,179,179)"/><stop offset="0.900" stop-color="rgb(204,204,204)"/><stop offset="1.000" stop-color="rgb(230,230,230)"/></radialGradient></defs><circle cx="944.25" cy="121.25" r="11.5" fill="url(#rg4)"/><rect x="960.5" y="107.5" width="27.5" height="27.5" fill="#e6e6e6" stroke="#d2d2d2"/><defs><linearGradient id="pg5" x1="0" y1="1" x2="0" y2="0"><stop offset="0.000" stop-color="rgb(0,0,0)"/><stop offset="0.125" stop-color="rgb(35,35,35)"/><stop offset="0.250" stop-color="rgb(66,66,66)"/><stop offset="0.375" stop-color="rgb(95,95,95)"/><stop offset="0.500" stop-color="rgb(123,123,123)"/><stop offset="0.625" stop-color="rgb(150,150,150)"/><stop offset="0.750" stop-color="rgb(177,177,177)"/><stop offset="0.875" stop-color="rgb(203,203,203)"/><stop offset="1.000" stop-color="rgb(230,230,230)"/></linearGradient></defs><path d="M962.45 110.25L986.05 110.25L974.25 122.15Z" fill="url(#pg5)" transform="rotate(0 974.25 121.25)"/><path d="M962.45 110.25L986.05 110.25L974.25 122.15Z" fill="url(#pg5)" transform="rotate(90 974.25 121.25)"/><path d="M962.45 110.25L986.05 110.25L974.25 122.15Z" fill="url(#pg5)" transform="rotate(180 974.25 121.25)"/><path d="M962.45 110.25L986.05 110.25L974.25 122.15Z" fill="url(#pg5)" transform="rotate(270 974.25 121.25)"/><rect x="990.5" y="107.5" width="27.5" height="27.5" fill="#e6e6e6" stroke="#d2d2d2"/><rect x="997.8" y="114.9" width="1" height="1" fill="#222" fill-opacity="0.7"/><rect x="1007.1" y="111.5" width="1" height="1" fill="#222" fill-opacity="0.7"/><rect x="1003.6" y="111.2" width="1" height="1" fill="#222" fill-opacity="0.7"/><rect x="1011.3" y="122.5" width="1" height="1" fill="#222" fill-opacity="0.7"/><rect x="1012.2" y="118.3" width="1" height="1" fill="#222" fill-opacity="0.7"/><rect x="1007.1" y="119.2" width="1" height="1" fill="#222" fill-opacity="0.7"/><rect x="999.1" y="122.3" width="1" height="1" fill="#222" fill-opacity="0.7"/><rect x="996.6" y="119.1" width="1" height="1" fill="#222" fill-opacity="0.7"/><rect x="1009.1" y="121.7" width="1" height="1" fill="#222" fill-opacity="0.7"/><rect x="1002.4" y="131.1" width="1" height="1" fill="#222" fill-opacity="0.7"/><rect x="1004.7" y="117.1" width="1" height="1" fill="#222" fill-opacity="0.7"/><rect x="1005.4" y="117.5" width="1" height="1" fill="#222" fill-opacity="0.7"/><rect x="1001.5" y="118.7" width="1" height="1" fill="#222" fill-opacity="0.7"/><rect x="1014.1" y="121.4" width="1" height="1" fill="#222" fill-opacity="0.7"/><rect x="1005.5" y="126.0" width="1" height="1" fill="#222" fill-opacity="0.7"/><rect x="1014.0" y="120.2" width="1" height="1" fill="#222" fill-opacity="0.7"/><rect x="1001.7" y="131.2" width="1" height="1" fill="#222" fill-opacity="0.7"/><rect x="995.9" y="119.1" width="1" height="1" fill="#222" fill-opacity="0.7"/><rect x="1007.1" y="131.0" width="1" height="1" fill="#222" fill-opacity="0.7"/><rect x="1000.5" y="111.6" width="1" height="1" fill="#222" fill-opacity="0.7"/><rect x="1008.8" y="117.7" width="1" height="1" fill="#222" fill-opacity="0.7"/><rect x="1001.5" y="124.5" width="1" height="1" fill="#222" fill-opacity="0.7"/><rect x="1005.9" y="123.4" width="1" height="1" fill="#222" fill-opacity="0.7"/><rect x="1001.7" y="129.0" width="1" height="1" fill="#222" fill-opacity="0.7"/><rect x="1012.9" y="121.4" width="1" height="1" fill="#222" fill-opacity="0.7"/><rect x="1001.2" y="126.2" width="1" height="1" fill="#222" fill-opacity="0.7"/><rect x="1007.3" y="114.6" width="1" height="1" fill="#222" fill-opacity="0.7"/><rect x="1001.3" y="127.9" width="1" height="1" fill="#222" fill-opacity="0.7"/><rect x="1003.5" y="118.8" width="1" height="1" fill="#222" fill-opacity="0.7"/><rect x="1005.8" y="121.0" width="1" height="1" fill="#222" fill-opacity="0.7"/><rect x="1004.2" y="111.6" width="1" height="1" fill="#222" fill-opacity="0.7"/><rect x="1013.5" y="122.3" width="1" height="1" fill="#222" fill-opacity="0.7"/><rect x="998.9" y="127.2" width="1" height="1" fill="#222" fill-opacity="0.7"/><rect x="1006.5" y="121.4" width="1" height="1" fill="#222" fill-opacity="0.7"/><rect x="1008.6" y="130.6" width="1" height="1" fill="#222" fill-opacity="0.7"/><rect x="1007.3" y="129.9" width="1" height="1" fill="#222" fill-opacity="0.7"/><rect x="1013.5" y="116.9" width="1" height="1" fill="#222" fill-opacity="0.7"/><rect x="1000.8" y="126.4" width="1" height="1" fill="#222" fill-opacity="0.7"/><rect x="995.1" y="119.8" width="1" height="1" fill="#222" fill-opacity="0.7"/><rect x="1011.3" y="127.0" width="1" height="1" fill="#222" fill-opacity="0.7"/><rect x="1007.1" y="111.9" width="1" height="1" fill="#222" fill-opacity="0.7"/><rect x="1014.2" y="123.6" width="1" height="1" fill="#222" fill-opacity="0.7"/><rect x="1009.4" y="124.6" width="1" height="1" fill="#222" fill-opacity="0.7"/><rect x="996.5" y="114.8" width="1" height="1" fill="#222" fill-opacity="0.7"/><rect x="998.8" y="129.8" width="1" height="1" fill="#222" fill-opacity="0.7"/><rect x="998.6" y="119.6" width="1" height="1" fill="#222" fill-opacity="0.7"/><rect x="1002.4" y="125.3" width="1" height="1" fill="#222" fill-opacity="0.7"/><rect x="1007.8" y="123.2" width="1" height="1" fill="#222" fill-opacity="0.7"/><rect x="1000.3" y="111.5" width="1" height="1" fill="#222" fill-opacity="0.7"/><rect x="1005.5" y="123.2" width="1" height="1" fill="#222" fill-opacity="0.7"/><rect x="1011.9" y="120.6" width="1" height="1" fill="#222" fill-opacity="0.7"/><rect x="1000.0" y="124.1" width="1" height="1" fill="#222" fill-opacity="0.7"/><rect x="996.3" y="115.9" width="1" height="1" fill="#222" fill-opacity="0.7"/><rect x="997.7" y="123.1" width="1" height="1" fill="#222" fill-opacity="0.7"/><rect x="1013.7" y="124.7" width="1" height="1" fill="#222" fill-opacity="0.7"/><rect x="1011.5" y="122.8" width="1" height="1" fill="#222" fill-opacity="0.7"/><rect x="1006.3" y="118.0" width="1" height="1" fill="#222" fill-opacity="0.7"/><rect x="1003.1" y="111.1" width="1" height="1" fill="#222" fill-opacity="0.7"/><rect x="997.9" y="114.4" width="1" height="1" fill="#222" fill-opacity="0.7"/><rect x="1009.7" y="125.5" width="1" height="1" fill="#222" fill-opacity="0.7"/><rect x="1010.0" y="129.0" width="1" height="1" fill="#222" fill-opacity="0.7"/><rect x="1002.3" y="128.0" width="1" height="1" fill="#222" fill-opacity="0.7"/><rect x="1013.9" y="121.2" width="1" height="1" fill="#222" fill-opacity="0.7"/><rect x="1011.2" y="120.2" width="1" height="1" fill="#222" fill-opacity="0.7"/><rect x="995.3" y="121.9" width="1" height="1" fill="#222" fill-opacity="0.7"/><rect x="998.6" y="122.0" width="1" height="1" fill="#222" fill-opacity="0.7"/><rect x="1000.9" y="123.5" width="1" height="1" fill="#222" fill-opacity="0.7"/><rect x="996.8" y="128.5" width="1" height="1" fill="#222" fill-opacity="0.7"/><rect x="1012.3" y="119.2" width="1" height="1" fill="#222" fill-opacity="0.7"/><rect x="998.1" y="121.3" width="1" height="1" fill="#222" fill-opacity="0.7"/><rect x="1008.9" y="124.2" width="1" height="1" fill="#222" fill-opacity="0.7"/><rect x="1006.2" y="111.7" width="1" height="1" fill="#222" fill-opacity="0.7"/><rect x="998.3" y="128.4" width="1" height="1" fill="#222" fill-opacity="0.7"/><rect x="1005.6" y="112.6" width="1" height="1" fill="#222" fill-opacity="0.7"/><rect x="999.5" y="113.4" width="1" height="1" fill="#222" fill-opacity="0.7"/><rect x="998.5" y="127.9" width="1" height="1" fill="#222" fill-opacity="0.7"/><rect x="1002.8" y="128.4" width="1" height="1" fill="#222" fill-opacity="0.7"/><rect x="1005.3" y="112.6" width="1" height="1" fill="#222" fill-opacity="0.7"/><rect x="1001.5" y="131.1" width="1" height="1" fill="#222" fill-opacity="0.7"/><rect x="999.5" y="114.8" width="1" height="1" fill="#222" fill-opacity="0.7"/><rect x="1012.0" y="121.8" width="1" height="1" fill="#222" fill-opacity="0.7"/><rect x="1004.2" y="129.9" width="1" height="1" fill="#222" fill-opacity="0.7"/><rect x="995.0" y="123.4" width="1" height="1" fill="#222" fill-opacity="0.7"/><rect x="998.6" y="113.8" width="1" height="1" fill="#222" fill-opacity="0.7"/><rect x="999.4" y="128.1" width="1" height="1" fill="#222" fill-opacity="0.7"/><rect x="1003.5" y="111.7" width="1" height="1" fill="#222" fill-opacity="0.7"/><rect x="998.6" y="129.0" width="1" height="1" fill="#222" fill-opacity="0.7"/><rect x="1010.2" y="114.9" width="1" height="1" fill="#222" fill-opacity="0.7"/><rect x="1014.4" y="119.7" width="1" height="1" fill="#222" fill-opacity="0.7"/><rect x="996.7" y="120.4" width="1" height="1" fill="#222" fill-opacity="0.7"/><rect x="930.5" y="137.5" width="27.5" height="27.5" fill="#cce4f7" stroke="#3c7fb1"/><defs><radialGradient id="selg" cx="0.5" cy="0.5" r="0.5"><stop offset="0" stop-color="#000"/><stop offset="0.35" stop-color="#1a2a3a"/><stop offset="0.7" stop-color="#7a96b0"/><stop offset="1" stop-color="#cce4f7"/></radialGradient></defs><circle cx="944.25" cy="151.25" r="10" fill="url(#selg)"/><rect x="960.5" y="137.5" width="27.5" height="27.5" fill="#e6e6e6" stroke="#d2d2d2"/><defs><linearGradient id="pg6" x1="0" y1="1" x2="0" y2="0"><stop offset="0.000" stop-color="rgb(0,0,0)"/><stop offset="0.125" stop-color="rgb(23,23,23)"/><stop offset="0.250" stop-color="rgb(50,50,50)"/><stop offset="0.375" stop-color="rgb(78,78,78)"/><stop offset="0.500" stop-color="rgb(107,107,107)"/><stop offset="0.625" stop-color="rgb(137,137,137)"/><stop offset="0.750" stop-color="rgb(167,167,167)"/><stop offset="0.875" stop-color="rgb(198,198,198)"/><stop offset="1.000" stop-color="rgb(230,230,230)"/></linearGradient></defs><path d="M963.95 141.75L984.55 141.75L974.25 152.15Z" fill="url(#pg6)" transform="rotate(0 974.25 151.25)"/><path d="M963.95 141.75L984.55 141.75L974.25 152.15Z" fill="url(#pg6)" transform="rotate(90 974.25 151.25)"/><path d="M963.95 141.75L984.55 141.75L974.25 152.15Z" fill="url(#pg6)" transform="rotate(180 974.25 151.25)"/><path d="M963.95 141.75L984.55 141.75L974.25 152.15Z" fill="url(#pg6)" transform="rotate(270 974.25 151.25)"/><rect x="990.5" y="137.5" width="27.5" height="27.5" fill="#e6e6e6" stroke="#d2d2d2"/><circle cx="1004.25" cy="151.25" r="11.5" fill="#000"/><rect x="930.5" y="167.5" width="27.5" height="27.5" fill="#e6e6e6" stroke="#d2d2d2"/><defs><radialGradient id="rg7" cx="0.5" cy="0.5" r="0.5"><stop offset="0.000" stop-color="rgb(0,0,0)"/><stop offset="0.100" stop-color="rgb(0,0,0)"/><stop offset="0.200" stop-color="rgb(0,0,0)"/><stop offset="0.300" stop-color="rgb(0,0,0)"/><stop offset="0.400" stop-color="rgb(0,0,0)"/><stop offset="0.500" stop-color="rgb(3,3,3)"/><stop offset="0.600" stop-color="rgb(10,10,10)"/><stop offset="0.700" stop-color="rgb(27,27,27)"/><stop offset="0.800" stop-color="rgb(60,60,60)"/><stop offset="0.900" stop-color="rgb(122,122,122)"/><stop offset="1.000" stop-color="rgb(230,230,230)"/></radialGradient></defs><circle cx="944.25" cy="181.25" r="9.5" fill="url(#rg7)"/><rect x="960.5" y="167.5" width="27.5" height="27.5" fill="#e6e6e6" stroke="#d2d2d2"/><defs><linearGradient id="pg8" x1="0" y1="1" x2="0" y2="0"><stop offset="0.000" stop-color="rgb(0,0,0)"/><stop offset="0.125" stop-color="rgb(0,0,0)"/><stop offset="0.250" stop-color="rgb(0,0,0)"/><stop offset="0.375" stop-color="rgb(0,0,0)"/><stop offset="0.500" stop-color="rgb(3,3,3)"/><stop offset="0.625" stop-color="rgb(13,13,13)"/><stop offset="0.750" stop-color="rgb(40,40,40)"/><stop offset="0.875" stop-color="rgb(103,103,103)"/><stop offset="1.000" stop-color="rgb(230,230,230)"/></linearGradient></defs><path d="M963.45 171.25L985.05 171.25L974.25 182.15Z" fill="url(#pg8)" transform="rotate(0 974.25 181.25)"/><path d="M963.45 171.25L985.05 171.25L974.25 182.15Z" fill="url(#pg8)" transform="rotate(90 974.25 181.25)"/><path d="M963.45 171.25L985.05 171.25L974.25 182.15Z" fill="url(#pg8)" transform="rotate(180 974.25 181.25)"/><path d="M963.45 171.25L985.05 171.25L974.25 182.15Z" fill="url(#pg8)" transform="rotate(270 974.25 181.25)"/><rect x="990.5" y="167.5" width="27.5" height="27.5" fill="#e6e6e6" stroke="#d2d2d2"/><rect x="992.75" y="169.75" width="23" height="23" fill="#000"/><rect x="930.5" y="197.5" width="27.5" height="27.5" fill="#e6e6e6" stroke="#d2d2d2"/><defs><radialGradient id="rg9" cx="0.5" cy="0.5" r="0.5"><stop offset="0.000" stop-color="rgb(0,0,0)"/><stop offset="0.100" stop-color="rgb(0,0,0)"/><stop offset="0.200" stop-color="rgb(1,1,1)"/><stop offset="0.300" stop-color="rgb(6,6,6)"/><stop offset="0.400" stop-color="rgb(14,14,14)"/><stop offset="0.500" stop-color="rgb(28,28,28)"/><stop offset="0.600" stop-color="rgb(49,49,49)"/><stop offset="0.700" stop-color="rgb(78,78,78)"/><stop offset="0.800" stop-color="rgb(117,117,117)"/><stop offset="0.900" stop-color="rgb(167,167,167)"/><stop offset="1.000" stop-color="rgb(230,230,230)"/></radialGradient></defs><circle cx="944.25" cy="211.25" r="10.5" fill="url(#rg9)"/><rect x="960.5" y="197.5" width="27.5" height="27.5" fill="#e6e6e6" stroke="#d2d2d2"/><defs><linearGradient id="pg10" x1="0" y1="1" x2="0" y2="0"><stop offset="0.000" stop-color="rgb(0,0,0)"/><stop offset="0.125" stop-color="rgb(0,0,0)"/><stop offset="0.250" stop-color="rgb(3,3,3)"/><stop offset="0.375" stop-color="rgb(12,12,12)"/><stop offset="0.500" stop-color="rgb(28,28,28)"/><stop offset="0.625" stop-color="rgb(56,56,56)"/><stop offset="0.750" stop-color="rgb(97,97,97)"/><stop offset="0.875" stop-color="rgb(154,154,154)"/><stop offset="1.000" stop-color="rgb(230,230,230)"/></linearGradient></defs><path d="M962.95 200.75L985.55 200.75L974.25 212.15Z" fill="url(#pg10)" transform="rotate(0 974.25 211.25)"/><path d="M962.95 200.75L985.55 200.75L974.25 212.15Z" fill="url(#pg10)" transform="rotate(90 974.25 211.25)"/><path d="M962.95 200.75L985.55 200.75L974.25 212.15Z" fill="url(#pg10)" transform="rotate(180 974.25 211.25)"/><path d="M962.95 200.75L985.55 200.75L974.25 212.15Z" fill="url(#pg10)" transform="rotate(270 974.25 211.25)"/></svg>
<svg class="a" style="left:909px;top:57px" width="18" height="56" viewBox="0 0 18 56"><path d="M16.5 1.5 L2 18 V54 H16.5" fill="#fff" stroke="#c4c4c4"/></svg>
<div class="a" style="left:914px;top:78px;width:7px;height:7px;border-radius:50%;background:radial-gradient(#000 35%,#555 60%,rgba(0,0,0,0) 75%)"></div>
<div class="a" style="left:912px;top:107px;transform:rotate(-90deg);transform-origin:0 0;font-size:8px;color:#4a3a55;white-space:nowrap">Br..</div>
<div class="a" style="left:910px;top:112px;width:16px;height:39px;background:#fff;border:1px solid #c8c8c8;border-right:none;border-radius:3px 0 0 3px"></div>
<div class="a" style="left:913px;top:116px;font-size:12px;font-weight:bold;color:#000;line-height:12px">C</div>
<div class="a" style="left:913px;top:147px;transform:rotate(-90deg);transform-origin:0 0;font-size:8px;color:#4a3a55;white-space:nowrap">Cu..</div>
<div class="a" style="left:910px;top:152px;width:16px;height:39px;background:#fff;border:1px solid #c8c8c8;border-right:none;border-radius:3px 0 0 3px"></div>
<div class="a" style="left:913px;top:156px;font-size:12px;font-weight:bold;color:#000;line-height:12px">F</div>
<div class="a" style="left:913px;top:187px;transform:rotate(-90deg);transform-origin:0 0;font-size:8px;color:#4a3a55;white-space:nowrap">Fl..</div>
<div class="a" style="left:910px;top:192px;width:16px;height:38px;background:#fff;border:1px solid #c8c8c8;border-right:none;border-radius:3px 0 0 3px"></div>
<div class="a" style="left:913px;top:196px;font-size:12px;font-weight:bold;color:#000;line-height:12px">Q</div>
<div class="a" style="left:913px;top:226px;transform:rotate(-90deg);transform-origin:0 0;font-size:8px;color:#4a3a55;white-space:nowrap">Qw..</div>
<div class="a" style="left:910px;top:231px;width:16px;height:39px;background:#fff;border:1px solid #c8c8c8;border-right:none;border-radius:3px 0 0 3px"></div>
<div class="a" style="left:913px;top:235px;font-size:12px;font-weight:bold;color:#000;line-height:12px">R</div>
<div class="a" style="left:913px;top:266px;transform:rotate(-90deg);transform-origin:0 0;font-size:8px;color:#4a3a55;white-space:nowrap">Ro..</div>
<div class="a" style="left:910px;top:271px;width:16px;height:38px;background:#fff;border:1px solid #c8c8c8;border-right:none;border-radius:3px 0 0 3px"></div>
<div class="a" style="left:913px;top:275px;font-size:12px;font-weight:bold;color:#000;line-height:12px">S</div>
<div class="a" style="left:913px;top:305px;transform:rotate(-90deg);transform-origin:0 0;font-size:8px;color:#4a3a55;white-space:nowrap">Sha..</div>
<div class="a" style="left:910px;top:310px;width:16px;height:40px;background:#fff;border:1px solid #c8c8c8;border-right:none;border-radius:3px 0 0 3px"></div>
<div class="a" style="left:913px;top:314px;font-size:12px;font-weight:bold;color:#000;line-height:12px">r</div>
<div class="a" style="left:913px;top:346px;transform:rotate(-90deg);transform-origin:0 0;font-size:8px;color:#4a3a55;white-space:nowrap">riv..</div>
<div class="a" style="left:925px;top:111px;width:1px;height:245px;background:#c8c8c8"></div>
<div class="a" style="left:925px;top:359px;width:99px;height:60px;background:#f0f0f0"></div>
<svg class="a" style="left:909px;top:358px" width="18" height="60" viewBox="0 0 18 60"><path d="M16.5 1.5 L2 17 V35 H16.5" fill="#fff" stroke="#c4c4c4"/><path d="M2 36 H16.5 V58 H2z" fill="#fff" stroke="#c4c4c4"/><path d="M5 29 L12 22" stroke="#5a8ad8" stroke-width="3.5" stroke-linecap="round"/><circle cx="13" cy="21" r="3" fill="none" stroke="#7aa0d0" stroke-width="1.5"/><circle cx="9" cy="46" r="5.5" fill="#6a9ad8" stroke="#4a78b8"/><rect x="8.3" y="43" width="1.4" height="5" fill="#fff"/></svg>
<div class="a" style="left:928px;top:361px;width:94px;height:13px;background:linear-gradient(#f8f8f8,#e6e6e6)"></div>
<div class="a" style="left:932.5px;top:363.5px;font-size:8.4px;color:#4a3a55;white-space:nowrap;letter-spacing:-0.35px">Brush Settings</div>
<svg class="a" style="left:986px;top:362px" width="30" height="11" viewBox="0 0 30 11"><rect x="2.5" y="4.5" width="6" height="5" fill="none" stroke="#333"/><path d="M4.5 4.5v-2h6v5h-2" fill="none" stroke="#333"/><path d="M18 1.5h4M18.5 1.5v4h3v-4M17 5.5h6M20 5.5v4" stroke="#333" fill="none"/></svg>
<div class="a" style="left:934px;top:375px;width:82px;height:1px;background:#dcdcdc"></div>
<svg class="a" style="left:970px;top:374px" width="10" height="9" viewBox="0 0 10 9"><path d="M2 0.5h6v4.5l-3 3-3-3z" fill="#1a78d8"/></svg>
<div class="a" style="left:934px;top:382px;width:84px;height:1px;border-top:1px dotted #c8c8c8"></div>
<div class="a" style="left:929.5px;top:385.5px;font-size:8.2px;color:#3a3a55;white-space:nowrap;letter-spacing:-0.3px">Options</div>
<div class="a" style="left:932px;top:399px;width:9px;height:9px;border:1px solid #333;background:#fff"></div>
<div class="a" style="left:943px;top:398.5px;font-size:8.2px;color:#222;white-space:nowrap;letter-spacing:-0.45px">Inside selection</div>
<div class="a" style="left:932px;top:415px;width:9px;height:4px;border:1px solid #333;border-bottom:none;background:#fff"></div>
<div class="a" style="left:0;top:420px;width:1024px;height:18px;background:#f0f0f0"></div>
<div class="a" style="left:2px;top:422px;width:95px;height:13px;border:1px solid;border-color:#a0a0a0 #fff #fff #a0a0a0"></div>
<div class="a" style="left:101px;top:422px;width:82px;height:13px;border:1px solid;border-color:#a0a0a0 #fff #fff #a0a0a0"></div>
<div class="a" style="left:188px;top:422px;width:39px;height:13px;border:1px solid;border-color:#a0a0a0 #fff #fff #a0a0a0"></div>
<div class="a" style="left:230px;top:422px;width:101px;height:13px;border:1px solid;border-color:#a0a0a0 #fff #fff #a0a0a0"></div>
<div class="a" style="left:334px;top:422px;width:120px;height:13px;border:1px solid;border-color:#a0a0a0 #fff #fff #a0a0a0"></div>
<div class="a" style="left:457px;top:422px;width:163px;height:13px;border:1px solid;border-color:#a0a0a0 #fff #fff #a0a0a0"></div>
<div class="a" style="left:623px;top:422px;width:55px;height:13px;border:1px solid;border-color:#a0a0a0 #fff #fff #a0a0a0"></div>
<div class="a" style="left:681px;top:422px;width:52px;height:13px;border:1px solid;border-color:#a0a0a0 #fff #fff #a0a0a0"></div>
<div class="a" style="left:736px;top:422px;width:60px;height:13px;border:1px solid;border-color:#a0a0a0 #fff #fff #a0a0a0"></div>
<div class="a" style="left:4px;top:424px;font-size:8.4px;color:#111;white-space:nowrap">Location:</div>
<div class="a" style="left:683px;top:424px;font-size:8.4px;color:#111;white-space:nowrap">Zoom: 25%</div>
<div class="a" id="term" style="left:0;top:438px;width:1024px;height:438px;background:#0c0c0c">
<div class="a" style="left:0;top:0;width:1024px;height:31px;background:#2b2b2b"></div>
<div class="a" style="left:7px;top:7px;width:183px;height:24px;background:#0c0c0c;border-radius:7px 7px 0 0"></div>
<svg class="a" style="left:13px;top:13px" width="14" height="12" viewBox="0 0 14 12"><path d="M3 0.5h10.5l-3 11h-10.5z" fill="#3b7ddb"/><path d="M4.5 3l3 2.5-3.5 2.5" fill="none" stroke="#fff" stroke-width="1.1"/><path d="M7.5 8.5h3" stroke="#fff" stroke-width="1"/></svg>
<div class="a" style="left:33px;top:12.5px;font-size:10px;color:#fff;white-space:nowrap;letter-spacing:-0.42px">Windows PowerShell</div>
<svg class="a" style="left:168px;top:13px" width="12" height="12" viewBox="0 0 12 12"><path d="M2 2l8 8M10 2l-8 8" stroke="#d8d8d8" stroke-width="1"/></svg>
<svg class="a" style="left:199px;top:13px" width="14" height="12" viewBox="0 0 14 12"><path d="M7 1v10M2 6h10" stroke="#d8d8d8" stroke-width="1"/></svg>
<div class="a" style="left:218px;top:10px;width:1px;height:18px;background:#3a3a3a"></div>
<svg class="a" style="left:224px;top:14px" width="10" height="8" viewBox="0 0 10 8"><path d="M1.5 2.5l3.5 3.5 3.5-3.5" fill="none" stroke="#d8d8d8" stroke-width="1"/></svg>
<svg class="a" style="left:920px;top:6px" width="104" height="25" viewBox="0 0 104 25"><path d="M13 9.5h8.5" stroke="#d8d8d8" stroke-width="1.1"/><rect x="48.5" y="6.5" width="8" height="7.5" fill="none" stroke="#d8d8d8" stroke-width="1.1"/><path d="M83 6l8 8M91 6l-8 8" stroke="#d8d8d8" stroke-width="1.1"/></svg>
<div class="a" style="left:1019px;top:407px;width:2px;height:18px;background:#7a7a7a;border-radius:1px"></div>

<pre class="a" id="tt" style="left:6px;top:38px">[12:56:41 INFO]: [Chunky] Task running for world. Processed: 71762 chunks (50,49%), ETA: 0:12:59, Rate: 90,2 cps, Current: -118, 290
[12:56:42 INFO]: [Chunky] Task running for world. Processed: 71829 chunks (50,54%), ETA: 0:13:05, Rate: 89,5 cps, Current: -116, 299
[12:56:43 INFO]: [Chunky] Task running for world. Processed: 71913 chunks (50,60%), ETA: 0:13:03, Rate: 89,7 cps, Current: -125, 300
[12:56:44 INFO]: [Chunky] Task running for world. Processed: 71970 chunks (50,64%), ETA: 0:13:30, Rate: 86,6 cps, Current: -122, 308
[12:56:45 INFO]: [Chunky] Task running for world. Processed: 71992 chunks (50,65%), ETA: 0:14:01, Rate: 83,3 cps, Current: -126, 309
[12:56:46 INFO]: [Chunky] Task running for world. Processed: 72064 chunks (50,70%), ETA: 0:14:19, Rate: 81,6 cps, Current: -119, 312
[12:56:47 INFO]: [Chunky] Task running for world. Processed: 72137 chunks (50,75%), ETA: 0:14:17, Rate: 81,7 cps, Current: -113, 317
[12:56:48 INFO]: [Chunky] Task running for world. Processed: 72228 chunks (50,82%), ETA: 0:14:11, Rate: 82,1 cps, Current: -106, 305
[12:56:49 INFO]: [Chunky] Task running for world. Processed: 72307 chunks (50,87%), ETA: 0:14:13, Rate: 81,8 cps, Current: -108, 318
[12:56:50 INFO]: [Chunky] Task running for world. Processed: 72454 chunks (50,98%), ETA: 0:13:47, Rate: 84,2 cps, Current: -97, 300
[12:56:51 INFO]: [Chunky] Task running for world. Processed: 72572 chunks (51,06%), ETA: 0:13:25, Rate: 86,4 cps, Current: -105, 296
[12:56:52 INFO]: [Chunky] Task running for world. Processed: 72705 chunks (51,15%), ETA: 0:13:19, Rate: 86,8 cps, Current: -125, 320
[12:56:53 INFO]: [Chunky] Task running for world. Processed: 72793 chunks (51,22%), ETA: 0:13:16, Rate: 87,0 cps, Current: -120, 324
[12:56:54 INFO]: [Chunky] Task running for world. Processed: 72871 chunks (51,27%), ETA: 0:13:39, Rate: 84,6 cps, Current: -118, 333
[12:56:55 INFO]: [Chunky] Task running for world. Processed: 72958 chunks (51,33%), ETA: 0:13:48, Rate: 83,5 cps, Current: -126, 337
[12:56:56 INFO]: [Chunky] Task running for world. Processed: 73001 chunks (51,36%), ETA: 0:14:07, Rate: 81,5 cps, Current: -122, 340
[12:56:58 INFO]: [Chunky] Task running for world. Processed: 73065 chunks (51,41%), ETA: 0:14:15, Rate: 80,7 cps, Current: -120, 344
[12:56:59 INFO]: [Chunky] Task running for world. Processed: 73131 chunks (51,45%), ETA: 0:14:20, Rate: 80,2 cps, Current: -120, 343
[12:57:00 INFO]: [Chunky] Task running for world. Processed: 73229 chunks (51,52%), ETA: 0:14:12, Rate: 80,8 cps, Current: -111, 339
[12:57:01 INFO]: [Chunky] Task running for world. Processed: 73325 chunks (51,59%), ETA: 0:14:04, Rate: 81,5 cps, Current: -110, 351
[12:57:02 INFO]: [Chunky] Task running for world. Processed: 73453 chunks (51,68%), ETA: 0:13:36, Rate: 84,1 cps, Current: -98, 338
[12:57:03 INFO]: [Chunky] Task running for world. Processed: 73587 chunks (51,77%), ETA: 0:13:13, Rate: 86,3 cps, Current: -111, 329
[12:57:04 INFO]: [Chunky] Task running for world. Processed: 73729 chunks (51,87%), ETA: 0:12:56, Rate: 88,1 cps, Current: -128, 352
[12:57:05 INFO]: [Chunky] Task running for world. Processed: 73796 chunks (51,92%), ETA: 0:13:03, Rate: 87,3 cps, Current: -123, 359
[12:57:06 INFO]: [Chunky] Task running for world. Processed: 73876 chunks (51,98%), ETA: 0:13:22, Rate: 85,1 cps, Current: -114, 360
[12:57:07 INFO]: [Chunky] Task running for world. Processed: 73956 chunks (52,03%), ETA: 0:13:28, Rate: 84,3 cps, Current: -124, 363
[12:57:08 INFO]: [Chunky] Task running for world. Processed: 74032 chunks (52,09%), ETA: 0:13:48, Rate: 82,2 cps, Current: -121, 372
&gt; <span style="display:inline-block;width:1px;height:13px;background:#ccc;vertical-align:-2px;margin-left:0"></span></pre>
</div>
</body></html>
